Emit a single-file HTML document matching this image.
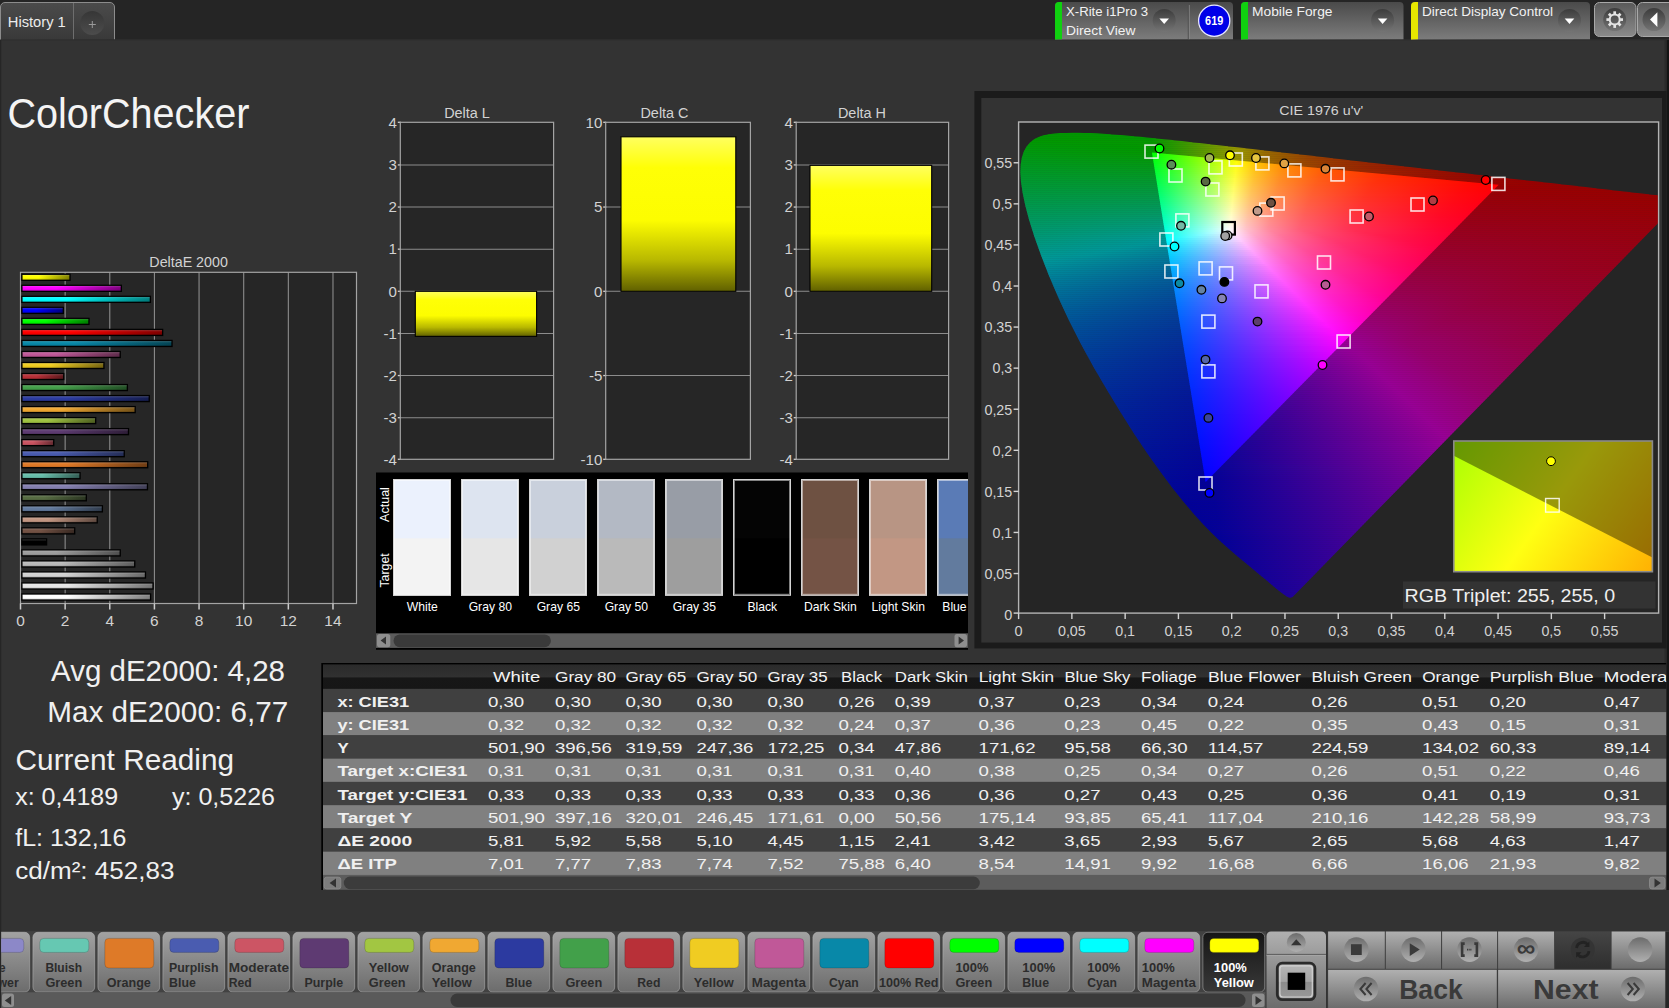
<!DOCTYPE html>
<html lang="en"><head><meta charset="utf-8"><title>ColorChecker</title>
<style>html,body{margin:0;padding:0;background:#333;overflow:hidden}svg{display:block;font-family:"Liberation Sans",sans-serif}text{white-space:pre}</style>
</head><body>
<svg width="1669" height="1008" viewBox="0 0 1669 1008">
<defs>
<linearGradient id="gTab" x1="0" y1="0" x2="0" y2="1"><stop offset="0" stop-color="#4b4b4b"/><stop offset="1" stop-color="#393939"/></linearGradient>
<linearGradient id="gDev" x1="0" y1="0" x2="0" y2="1"><stop offset="0" stop-color="#4a4a4a"/><stop offset="1" stop-color="#7c7c7c"/></linearGradient>
<linearGradient id="gCirc" x1="0" y1="0" x2="0" y2="1"><stop offset="0" stop-color="#3c3c3c"/><stop offset="1" stop-color="#747474"/></linearGradient>
<linearGradient id="gPlus" x1="0" y1="0" x2="0" y2="1"><stop offset="0" stop-color="#363636"/><stop offset="1" stop-color="#4c4c4c"/></linearGradient>
<linearGradient id="gBtn" x1="0" y1="0" x2="0" y2="1"><stop offset="0" stop-color="#5a5a5a"/><stop offset="1" stop-color="#8a8a8a"/></linearGradient>
<linearGradient id="gGl" x1="0" y1="0" x2="0" y2="1"><stop offset="0" stop-color="#fff" stop-opacity=".18"/><stop offset=".4" stop-color="#fff" stop-opacity="0"/><stop offset=".6" stop-color="#000" stop-opacity="0"/><stop offset="1" stop-color="#000" stop-opacity=".15"/></linearGradient>
<linearGradient id="gb0"><stop offset="0" stop-color="#ffff00"/><stop offset=".35" stop-color="#ffff00"/><stop offset="1" stop-color="#7f7f00"/></linearGradient>
<linearGradient id="gb1"><stop offset="0" stop-color="#ff00ff"/><stop offset=".35" stop-color="#ff00ff"/><stop offset="1" stop-color="#7f007f"/></linearGradient>
<linearGradient id="gb2"><stop offset="0" stop-color="#00ffff"/><stop offset=".35" stop-color="#00ffff"/><stop offset="1" stop-color="#007f7f"/></linearGradient>
<linearGradient id="gb3"><stop offset="0" stop-color="#0000ff"/><stop offset=".35" stop-color="#0000ff"/><stop offset="1" stop-color="#00007f"/></linearGradient>
<linearGradient id="gb4"><stop offset="0" stop-color="#00ff00"/><stop offset=".35" stop-color="#00ff00"/><stop offset="1" stop-color="#007f00"/></linearGradient>
<linearGradient id="gb5"><stop offset="0" stop-color="#ff0000"/><stop offset=".35" stop-color="#ff0000"/><stop offset="1" stop-color="#7f0000"/></linearGradient>
<linearGradient id="gb6"><stop offset="0" stop-color="#0888a8"/><stop offset=".35" stop-color="#0888a8"/><stop offset="1" stop-color="#044454"/></linearGradient>
<linearGradient id="gb7"><stop offset="0" stop-color="#c05898"/><stop offset=".35" stop-color="#c05898"/><stop offset="1" stop-color="#602c4c"/></linearGradient>
<linearGradient id="gb8"><stop offset="0" stop-color="#f0cc20"/><stop offset=".35" stop-color="#f0cc20"/><stop offset="1" stop-color="#786610"/></linearGradient>
<linearGradient id="gb9"><stop offset="0" stop-color="#b83038"/><stop offset=".35" stop-color="#b83038"/><stop offset="1" stop-color="#5c181c"/></linearGradient>
<linearGradient id="gb10"><stop offset="0" stop-color="#44a04a"/><stop offset=".35" stop-color="#44a04a"/><stop offset="1" stop-color="#225025"/></linearGradient>
<linearGradient id="gb11"><stop offset="0" stop-color="#2c3ca0"/><stop offset=".35" stop-color="#2c3ca0"/><stop offset="1" stop-color="#161e50"/></linearGradient>
<linearGradient id="gb12"><stop offset="0" stop-color="#f0a832"/><stop offset=".35" stop-color="#f0a832"/><stop offset="1" stop-color="#785419"/></linearGradient>
<linearGradient id="gb13"><stop offset="0" stop-color="#a0c442"/><stop offset=".35" stop-color="#a0c442"/><stop offset="1" stop-color="#506221"/></linearGradient>
<linearGradient id="gb14"><stop offset="0" stop-color="#5e3c72"/><stop offset=".35" stop-color="#5e3c72"/><stop offset="1" stop-color="#2f1e39"/></linearGradient>
<linearGradient id="gb15"><stop offset="0" stop-color="#cc5562"/><stop offset=".35" stop-color="#cc5562"/><stop offset="1" stop-color="#662a31"/></linearGradient>
<linearGradient id="gb16"><stop offset="0" stop-color="#4a5cb0"/><stop offset=".35" stop-color="#4a5cb0"/><stop offset="1" stop-color="#252e58"/></linearGradient>
<linearGradient id="gb17"><stop offset="0" stop-color="#e07a28"/><stop offset=".35" stop-color="#e07a28"/><stop offset="1" stop-color="#703d14"/></linearGradient>
<linearGradient id="gb18"><stop offset="0" stop-color="#67bdaa"/><stop offset=".35" stop-color="#67bdaa"/><stop offset="1" stop-color="#335e55"/></linearGradient>
<linearGradient id="gb19"><stop offset="0" stop-color="#8580b1"/><stop offset=".35" stop-color="#8580b1"/><stop offset="1" stop-color="#424058"/></linearGradient>
<linearGradient id="gb20"><stop offset="0" stop-color="#576c43"/><stop offset=".35" stop-color="#576c43"/><stop offset="1" stop-color="#2b3621"/></linearGradient>
<linearGradient id="gb21"><stop offset="0" stop-color="#627a9d"/><stop offset=".35" stop-color="#627a9d"/><stop offset="1" stop-color="#313d4e"/></linearGradient>
<linearGradient id="gb22"><stop offset="0" stop-color="#c29682"/><stop offset=".35" stop-color="#c29682"/><stop offset="1" stop-color="#614b41"/></linearGradient>
<linearGradient id="gb23"><stop offset="0" stop-color="#735244"/><stop offset=".35" stop-color="#735244"/><stop offset="1" stop-color="#392922"/></linearGradient>
<linearGradient id="gb24"><stop offset="0" stop-color="#000000"/><stop offset=".35" stop-color="#000000"/><stop offset="1" stop-color="#000000"/></linearGradient>
<linearGradient id="gb25"><stop offset="0" stop-color="#9e9e9e"/><stop offset=".35" stop-color="#9e9e9e"/><stop offset="1" stop-color="#4f4f4f"/></linearGradient>
<linearGradient id="gb26"><stop offset="0" stop-color="#bababa"/><stop offset=".35" stop-color="#bababa"/><stop offset="1" stop-color="#5d5d5d"/></linearGradient>
<linearGradient id="gb27"><stop offset="0" stop-color="#d2d2d2"/><stop offset=".35" stop-color="#d2d2d2"/><stop offset="1" stop-color="#696969"/></linearGradient>
<linearGradient id="gb28"><stop offset="0" stop-color="#e6e6e6"/><stop offset=".35" stop-color="#e6e6e6"/><stop offset="1" stop-color="#737373"/></linearGradient>
<linearGradient id="gb29"><stop offset="0" stop-color="#ffffff"/><stop offset=".35" stop-color="#ffffff"/><stop offset="1" stop-color="#7f7f7f"/></linearGradient>
<linearGradient id="gY" x1="0" y1="0" x2="0" y2="1"><stop offset="0" stop-color="#ffff60"/><stop offset=".2" stop-color="#ffff06"/><stop offset=".54" stop-color="#fdfd00"/><stop offset=".8" stop-color="#b8b800"/><stop offset="1" stop-color="#606000"/></linearGradient>
<clipPath id="cSw"><rect x="376" y="472.5" width="592" height="177.3"/></clipPath>
<clipPath id="cPlot"><rect x="1019.3" y="122.7" width="638.6" height="489.7"/></clipPath>
<clipPath id="cLoc" clip-path="url(#cPlot)"><path d="M1292.33 597.18L1292.25 597.16L1292.17 597.13L1292.08 597.18L1291.98 597.28L1291.84 597.31L1291.64 597.26L1291.46 597.25L1291.36 597.37L1291.27 597.53L1291.16 597.63L1291.01 597.68L1290.77 597.69L1290.47 597.68L1290.12 597.63L1289.81 597.63L1289.5 597.64L1289.11 597.6L1288.69 597.49L1288.17 597.27L1287.39 596.84L1286.38 596.24L1285.25 595.49L1283.97 594.57L1282.53 593.47L1280.86 592.18L1278.91 590.66L1276.72 588.92L1274.33 586.92L1271.69 584.66L1268.79 582.2L1265.61 579.54L1262.08 576.63L1258.13 573.38L1253.75 569.78L1248.96 565.84L1243.8 561.61L1238.25 557L1232.21 551.86L1225.66 546.09L1218.67 539.66L1211.24 532.51L1203.17 524.24L1194.07 514.19L1183.7 501.94L1172.29 487.65L1160.22 471.61L1147.53 453.76L1134.28 434.01L1120.71 412.6L1107.05 390.06L1093.53 366.88L1080.53 343.32L1068.61 319.86L1058.09 297.09L1048.87 275.38L1040.9 255.06L1034.3 236.53L1029.11 220.01L1025.26 205.5L1022.58 192.81L1020.97 181.85L1020.36 172.48L1020.68 164.4L1021.84 157.41L1023.83 151.47L1026.59 146.49L1030.02 142.45L1034.05 139.32L1038.58 136.98L1043.51 135.32L1048.77 134.23L1054.34 133.54L1060.15 133.12L1066.15 132.9L1072.2 132.81L1078.23 132.82L1084.3 132.91L1090.48 133.1L1096.78 133.37L1103.24 133.73L1109.9 134.16L1116.78 134.67L1123.88 135.26L1131.24 135.91L1138.87 136.62L1146.8 137.4L1155.05 138.23L1163.64 139.13L1172.58 140.08L1181.89 141.09L1191.59 142.15L1201.69 143.27L1212.21 144.45L1223.15 145.68L1234.54 146.97L1246.37 148.31L1258.66 149.71L1271.39 151.17L1284.56 152.68L1298.16 154.24L1312.17 155.84L1326.58 157.48L1341.34 159.17L1356.41 160.89L1371.76 162.64L1387.34 164.42L1402.98 166.22L1418.39 167.98L1433.48 169.71L1448.44 171.42L1463.35 173.12L1478 174.8L1492.07 176.4L1505.48 177.92L1518.29 179.38L1530.52 180.78L1542.1 182.1L1552.99 183.35L1563.18 184.52L1572.67 185.6L1581.5 186.61L1589.74 187.55L1597.41 188.42L1604.55 189.24L1611.28 190.01L1617.68 190.74L1623.72 191.43L1629.37 192.08L1634.64 192.68L1639.53 193.24L1644.06 193.76L1648.21 194.24L1651.92 194.66L1655.18 195.03L1658.11 195.37L1660.8 195.67L1663.25 195.96L1665.44 196.21L1667.4 196.43L1669.09 196.63L1670.51 196.79L1671.69 196.92L1672.77 197.05L1673.82 197.17L1674.79 197.28L1675.65 197.38L1676.45 197.47L1677.24 197.56L1678.04 197.65L1678.83 197.74L1679.59 197.83L1680.31 197.91L1680.9 197.98L1681.31 198.03L1681.61 198.06L1681.88 198.09L1682.1 198.12L1682.28 198.14L1682.43 198.16L1682.47 198.16L1682.47 198.16Z"/></clipPath>
<clipPath id="cTri"><path d="M1498.67 184.8L1151.96 152.56L1205.61 482.02Z"/></clipPath>
<linearGradient id="c0" gradientUnits="userSpaceOnUse" x1="1047.6" x2="1110.85"><stop offset="0" stop-color="#009900"/><stop offset=".996" stop-color="#009900"/></linearGradient>
<linearGradient id="c1" gradientUnits="userSpaceOnUse" x1="1039.85" x2="1133.85"><stop offset="0" stop-color="#009900"/><stop offset="1" stop-color="#009900"/></linearGradient>
<linearGradient id="c2" gradientUnits="userSpaceOnUse" x1="1035.1" x2="1155.85"><stop offset="0" stop-color="#009900"/><stop offset=".9565" stop-color="#029900"/><stop offset=".9979" stop-color="#0b9900"/></linearGradient>
<linearGradient id="c3" gradientUnits="userSpaceOnUse" x1="1031.85" x2="1173.35"><stop offset="0" stop-color="#009900"/><stop offset=".841" stop-color="#029900"/><stop offset="1" stop-color="#279900"/></linearGradient>
<linearGradient id="c4" gradientUnits="userSpaceOnUse" x1="1029.1" x2="1192.35"><stop offset="0" stop-color="#009900"/><stop offset=".7504" stop-color="#039900"/><stop offset=".9985" stop-color="#459900"/></linearGradient>
<linearGradient id="c5" gradientUnits="userSpaceOnUse" x1="1027.35" x2="1210.35"><stop offset="0" stop-color="#009903"/><stop offset=".6803" stop-color="#039900"/><stop offset="1" stop-color="#659900"/></linearGradient>
<linearGradient id="c6" gradientUnits="userSpaceOnUse" x1="1025.6" x2="1227.85"><stop offset="0" stop-color="#009906"/><stop offset=".4771" stop-color="#009900"/><stop offset=".6255" stop-color="#039900"/><stop offset=".9889" stop-color="#819900"/><stop offset=".9988" stop-color="#859900"/></linearGradient>
<linearGradient id="c7" gradientUnits="userSpaceOnUse" x1="1024.6" x2="1245.35"><stop offset="0" stop-color="#009908"/><stop offset=".4938" stop-color="#009900"/><stop offset=".5798" stop-color="#039900"/><stop offset=".9083" stop-color="#819900"/><stop offset=".9694" stop-color="#999600"/><stop offset=".9989" stop-color="#998a00"/></linearGradient>
<linearGradient id="c8" gradientUnits="userSpaceOnUse" x1="1023.35" x2="1263.85"><stop offset="0" stop-color="#00990b"/><stop offset=".5322" stop-color="#009900"/><stop offset=".842" stop-color="#829900"/><stop offset=".894" stop-color="#999600"/><stop offset="1" stop-color="#996e00"/></linearGradient>
<linearGradient id="c9" gradientUnits="userSpaceOnUse" x1="1022.35" x2="1281.1"><stop offset="0" stop-color="#00990d"/><stop offset=".5043" stop-color="#029900"/><stop offset=".7845" stop-color="#819900"/><stop offset=".8348" stop-color="#999600"/><stop offset=".9449" stop-color="#996900"/><stop offset=".999" stop-color="#995a00"/></linearGradient>
<linearGradient id="c10" gradientUnits="userSpaceOnUse" x1="1021.6" x2="1299.1"><stop offset="0" stop-color="#009910"/><stop offset=".4739" stop-color="#029901"/><stop offset=".7333" stop-color="#819900"/><stop offset=".7802" stop-color="#999600"/><stop offset=".8829" stop-color="#996900"/><stop offset="1" stop-color="#994a00"/></linearGradient>
<linearGradient id="c11" gradientUnits="userSpaceOnUse" x1="1021.1" x2="1315.35"><stop offset="0" stop-color="#009912"/><stop offset=".4503" stop-color="#039905"/><stop offset=".6933" stop-color="#819900"/><stop offset=".7375" stop-color="#999600"/><stop offset=".8326" stop-color="#996900"/><stop offset=".9822" stop-color="#994200"/><stop offset=".9992" stop-color="#993f00"/></linearGradient>
<linearGradient id="c12" gradientUnits="userSpaceOnUse" x1="1020.6" x2="1332.85"><stop offset="0" stop-color="#009914"/><stop offset=".4275" stop-color="#039908"/><stop offset=".6533" stop-color="#819900"/><stop offset=".695" stop-color="#999600"/><stop offset=".7846" stop-color="#996a00"/><stop offset=".9239" stop-color="#994300"/><stop offset=".9992" stop-color="#993500"/></linearGradient>
<linearGradient id="c13" gradientUnits="userSpaceOnUse" x1="1020.1" x2="1349.6"><stop offset="0" stop-color="#009917"/><stop offset=".4067" stop-color="#02990b"/><stop offset=".6297" stop-color="#879900"/><stop offset=".6601" stop-color="#999600"/><stop offset=".7451" stop-color="#996900"/><stop offset=".8771" stop-color="#994200"/><stop offset="1" stop-color="#992c00"/></linearGradient>
<linearGradient id="c14" gradientUnits="userSpaceOnUse" x1="1019.85" x2="1367.35"><stop offset="0" stop-color="#009919"/><stop offset=".3871" stop-color="#02990e"/><stop offset=".6245" stop-color="#999702"/><stop offset=".7036" stop-color="#996a00"/><stop offset=".8273" stop-color="#994300"/><stop offset="1" stop-color="#992500"/></linearGradient>
<linearGradient id="c15" gradientUnits="userSpaceOnUse" x1="1019.6" x2="1385.6"><stop offset="0" stop-color="#00991b"/><stop offset=".3702" stop-color="#039912"/><stop offset=".6434" stop-color="#997602"/><stop offset=".7459" stop-color="#994d00"/><stop offset=".9139" stop-color="#992a00"/><stop offset="1" stop-color="#991e00"/></linearGradient>
<linearGradient id="c16" gradientUnits="userSpaceOnUse" x1="1019.6" x2="1403.85"><stop offset="0" stop-color="#00991d"/><stop offset=".3526" stop-color="#029915"/><stop offset=".6688" stop-color="#995c02"/><stop offset=".8003" stop-color="#993600"/><stop offset=".9993" stop-color="#991800"/></linearGradient>
<linearGradient id="c17" gradientUnits="userSpaceOnUse" x1="1019.35" x2="1421.1"><stop offset="0" stop-color="#009920"/><stop offset=".3385" stop-color="#029918"/><stop offset=".6945" stop-color="#994802"/><stop offset=".8575" stop-color="#992500"/><stop offset=".9994" stop-color="#991300"/></linearGradient>
<linearGradient id="c18" gradientUnits="userSpaceOnUse" x1="1019.35" x2="1438.1"><stop offset="0" stop-color="#009922"/><stop offset=".326" stop-color="#03991b"/><stop offset=".7188" stop-color="#993901"/><stop offset=".9158" stop-color="#991800"/><stop offset=".9994" stop-color="#990f00"/></linearGradient>
<linearGradient id="c19" gradientUnits="userSpaceOnUse" x1="1019.35" x2="1454.85"><stop offset="0" stop-color="#009924"/><stop offset=".3146" stop-color="#03991e"/><stop offset=".7417" stop-color="#992d01"/><stop offset=".9759" stop-color="#990d00"/><stop offset="1" stop-color="#990b00"/></linearGradient>
<linearGradient id="c20" gradientUnits="userSpaceOnUse" x1="1019.35" x2="1473.35"><stop offset="0" stop-color="#009926"/><stop offset=".3018" stop-color="#029921"/><stop offset=".7599" stop-color="#992401"/><stop offset="1" stop-color="#990700"/></linearGradient>
<linearGradient id="c21" gradientUnits="userSpaceOnUse" x1="1019.35" x2="1490.6"><stop offset="0" stop-color="#009929"/><stop offset=".2918" stop-color="#039924"/><stop offset=".7788" stop-color="#991c01"/><stop offset=".9995" stop-color="#990300"/></linearGradient>
<linearGradient id="c22" gradientUnits="userSpaceOnUse" x1="1019.35" x2="1508.6"><stop offset="0" stop-color="#00992b"/><stop offset=".281" stop-color="#029927"/><stop offset=".7941" stop-color="#991501"/><stop offset=".9995" stop-color="#990000"/></linearGradient>
<linearGradient id="c23" gradientUnits="userSpaceOnUse" x1="1019.6" x2="1525.35"><stop offset="0" stop-color="#00992d"/><stop offset=".2729" stop-color="#03992b"/><stop offset=".8117" stop-color="#990f01"/><stop offset=".9946" stop-color="#990000"/><stop offset=".9995" stop-color="#990000"/></linearGradient>
<linearGradient id="c24" gradientUnits="userSpaceOnUse" x1="1019.6" x2="1542.85"><stop offset="0" stop-color="#00992f"/><stop offset=".2637" stop-color="#02992e"/><stop offset=".8266" stop-color="#990a01"/><stop offset=".9642" stop-color="#990000"/><stop offset=".9995" stop-color="#990000"/></linearGradient>
<linearGradient id="c25" gradientUnits="userSpaceOnUse" x1="1019.85" x2="1560.85"><stop offset="0" stop-color="#009932"/><stop offset=".2551" stop-color="#029931"/><stop offset=".8392" stop-color="#990501"/><stop offset=".9556" stop-color="#990000"/><stop offset="1" stop-color="#990000"/></linearGradient>
<linearGradient id="c26" gradientUnits="userSpaceOnUse" x1="1020.1" x2="1578.1"><stop offset="0" stop-color="#009934"/><stop offset=".2482" stop-color="#039934"/><stop offset=".8522" stop-color="#990101"/><stop offset="1" stop-color="#990000"/></linearGradient>
<linearGradient id="c27" gradientUnits="userSpaceOnUse" x1="1020.6" x2="1596.35"><stop offset="0" stop-color="#009936"/><stop offset=".2397" stop-color="#029937"/><stop offset=".8346" stop-color="#990001"/><stop offset=".9996" stop-color="#990000"/></linearGradient>
<linearGradient id="c28" gradientUnits="userSpaceOnUse" x1="1020.85" x2="1612.1"><stop offset="0" stop-color="#009939"/><stop offset=".2334" stop-color="#02993b"/><stop offset=".8085" stop-color="#990003"/><stop offset=".9996" stop-color="#990000"/></linearGradient>
<linearGradient id="c29" gradientUnits="userSpaceOnUse" x1="1021.1" x2="1630.35"><stop offset="0" stop-color="#00993b"/><stop offset=".2265" stop-color="#02993e"/><stop offset=".7813" stop-color="#990004"/><stop offset=".9996" stop-color="#990000"/></linearGradient>
<linearGradient id="c30" gradientUnits="userSpaceOnUse" x1="1021.35" x2="1649.1"><stop offset="0" stop-color="#00993d"/><stop offset=".2206" stop-color="#039941"/><stop offset=".7551" stop-color="#990005"/><stop offset=".9996" stop-color="#990000"/></linearGradient>
<linearGradient id="c31" gradientUnits="userSpaceOnUse" x1="1021.6" x2="1658.6"><stop offset="0" stop-color="#009940"/><stop offset=".2174" stop-color="#039945"/><stop offset=".7402" stop-color="#990006"/><stop offset="1" stop-color="#990000"/></linearGradient>
<linearGradient id="c32" gradientUnits="userSpaceOnUse" x1="1022.1" x2="1658.6"><stop offset="0" stop-color="#009942"/><stop offset=".2168" stop-color="#029948"/><stop offset=".7368" stop-color="#990008"/><stop offset="1" stop-color="#990000"/></linearGradient>
<linearGradient id="c33" gradientUnits="userSpaceOnUse" x1="1022.6" x2="1658.6"><stop offset="0" stop-color="#009944"/><stop offset=".217" stop-color="#03994b"/><stop offset=".7335" stop-color="#990009"/><stop offset="1" stop-color="#990000"/></linearGradient>
<linearGradient id="c34" gradientUnits="userSpaceOnUse" x1="1022.85" x2="1658.6"><stop offset="0" stop-color="#009947"/><stop offset=".2171" stop-color="#02994f"/><stop offset=".7306" stop-color="#99000a"/><stop offset=".9996" stop-color="#990001"/></linearGradient>
<linearGradient id="c35" gradientUnits="userSpaceOnUse" x1="1023.35" x2="1658.6"><stop offset="0" stop-color="#009949"/><stop offset=".2172" stop-color="#039952"/><stop offset=".7265" stop-color="#99000b"/><stop offset=".9996" stop-color="#990002"/></linearGradient>
<linearGradient id="c36" gradientUnits="userSpaceOnUse" x1="1023.85" x2="1658.6"><stop offset="0" stop-color="#00994c"/><stop offset=".2166" stop-color="#029956"/><stop offset=".7231" stop-color="#99000d"/><stop offset=".9996" stop-color="#990002"/></linearGradient>
<linearGradient id="c37" gradientUnits="userSpaceOnUse" x1="1024.35" x2="1658.6"><stop offset="0" stop-color="#00994e"/><stop offset=".2168" stop-color="#029959"/><stop offset=".7197" stop-color="#99000e"/><stop offset=".9996" stop-color="#990003"/></linearGradient>
<linearGradient id="c38" gradientUnits="userSpaceOnUse" x1="1024.85" x2="1658.6"><stop offset="0" stop-color="#009951"/><stop offset=".217" stop-color="#03995d"/><stop offset=".7164" stop-color="#99000f"/><stop offset=".9996" stop-color="#990004"/></linearGradient>
<linearGradient id="c39" gradientUnits="userSpaceOnUse" x1="1025.35" x2="1658.6"><stop offset="0" stop-color="#009953"/><stop offset=".2163" stop-color="#029961"/><stop offset=".713" stop-color="#990010"/><stop offset=".9996" stop-color="#990005"/></linearGradient>
<linearGradient id="c40" gradientUnits="userSpaceOnUse" x1="1025.85" x2="1658.6"><stop offset="0" stop-color="#009956"/><stop offset=".2165" stop-color="#039964"/><stop offset=".7096" stop-color="#990011"/><stop offset=".9996" stop-color="#990005"/></linearGradient>
<linearGradient id="c41" gradientUnits="userSpaceOnUse" x1="1026.35" x2="1658.6"><stop offset="0" stop-color="#009958"/><stop offset=".2167" stop-color="#039968"/><stop offset=".7062" stop-color="#990013"/><stop offset=".9996" stop-color="#990006"/></linearGradient>
<linearGradient id="c42" gradientUnits="userSpaceOnUse" x1="1027.1" x2="1658.6"><stop offset="0" stop-color="#00995b"/><stop offset=".2162" stop-color="#03996c"/><stop offset=".7031" stop-color="#990014"/><stop offset="1" stop-color="#990007"/></linearGradient>
<linearGradient id="c43" gradientUnits="userSpaceOnUse" x1="1027.6" x2="1658.6"><stop offset="0" stop-color="#00995d"/><stop offset=".2155" stop-color="#029970"/><stop offset=".6997" stop-color="#990015"/><stop offset="1" stop-color="#990008"/></linearGradient>
<linearGradient id="c44" gradientUnits="userSpaceOnUse" x1="1028.1" x2="1658.6"><stop offset="0" stop-color="#009960"/><stop offset=".2157" stop-color="#039974"/><stop offset=".6963" stop-color="#990016"/><stop offset="1" stop-color="#990008"/></linearGradient>
<linearGradient id="c45" gradientUnits="userSpaceOnUse" x1="1028.85" x2="1658.6"><stop offset="0" stop-color="#009963"/><stop offset=".2152" stop-color="#029977"/><stop offset=".6915" stop-color="#990018"/><stop offset=".9996" stop-color="#990009"/></linearGradient>
<linearGradient id="c46" gradientUnits="userSpaceOnUse" x1="1029.35" x2="1657.6"><stop offset="0" stop-color="#009965"/><stop offset=".2157" stop-color="#03997b"/><stop offset=".6892" stop-color="#990019"/><stop offset=".9996" stop-color="#99000a"/></linearGradient>
<linearGradient id="c47" gradientUnits="userSpaceOnUse" x1="1029.85" x2="1655.6"><stop offset="0" stop-color="#009968"/><stop offset=".2157" stop-color="#02997f"/><stop offset=".688" stop-color="#99001b"/><stop offset=".9996" stop-color="#99000b"/></linearGradient>
<linearGradient id="c48" gradientUnits="userSpaceOnUse" x1="1030.35" x2="1653.85"><stop offset="0" stop-color="#00996b"/><stop offset=".2165" stop-color="#029983"/><stop offset=".6864" stop-color="#99001c"/><stop offset="1" stop-color="#99000b"/></linearGradient>
<linearGradient id="c49" gradientUnits="userSpaceOnUse" x1="1031.1" x2="1651.85"><stop offset="0" stop-color="#00996d"/><stop offset=".2167" stop-color="#029987"/><stop offset=".6855" stop-color="#99001d"/><stop offset=".9996" stop-color="#99000c"/></linearGradient>
<linearGradient id="c50" gradientUnits="userSpaceOnUse" x1="1031.85" x2="1649.85"><stop offset="0" stop-color="#009970"/><stop offset=".2168" stop-color="#02998c"/><stop offset=".6837" stop-color="#99001f"/><stop offset="1" stop-color="#99000d"/></linearGradient>
<linearGradient id="c51" gradientUnits="userSpaceOnUse" x1="1032.35" x2="1647.85"><stop offset="0" stop-color="#009973"/><stop offset=".2177" stop-color="#039990"/><stop offset=".6832" stop-color="#990020"/><stop offset="1" stop-color="#99000e"/></linearGradient>
<linearGradient id="c52" gradientUnits="userSpaceOnUse" x1="1033.1" x2="1645.85"><stop offset="0" stop-color="#009976"/><stop offset=".2179" stop-color="#029994"/><stop offset=".6814" stop-color="#990021"/><stop offset=".9996" stop-color="#99000f"/></linearGradient>
<linearGradient id="c53" gradientUnits="userSpaceOnUse" x1="1033.85" x2="1644.1"><stop offset="0" stop-color="#009979"/><stop offset=".2179" stop-color="#029998"/><stop offset=".68" stop-color="#990023"/><stop offset=".9996" stop-color="#99000f"/></linearGradient>
<linearGradient id="c54" gradientUnits="userSpaceOnUse" x1="1034.35" x2="1642.1"><stop offset="0" stop-color="#00997c"/><stop offset=".2164" stop-color="#009699"/><stop offset=".6787" stop-color="#990024"/><stop offset=".9996" stop-color="#990010"/></linearGradient>
<linearGradient id="c55" gradientUnits="userSpaceOnUse" x1="1035.1" x2="1640.1"><stop offset="0" stop-color="#00997f"/><stop offset=".1967" stop-color="#009699"/><stop offset=".219" stop-color="#029199"/><stop offset=".6769" stop-color="#990026"/><stop offset="1" stop-color="#990011"/></linearGradient>
<linearGradient id="c56" gradientUnits="userSpaceOnUse" x1="1035.85" x2="1638.1"><stop offset="0" stop-color="#009982"/><stop offset=".1768" stop-color="#009699"/><stop offset=".2192" stop-color="#028d99"/><stop offset=".675" stop-color="#990027"/><stop offset=".9996" stop-color="#990012"/></linearGradient>
<linearGradient id="c57" gradientUnits="userSpaceOnUse" x1="1036.6" x2="1636.1"><stop offset="0" stop-color="#009985"/><stop offset=".1576" stop-color="#009699"/><stop offset=".2202" stop-color="#038999"/><stop offset=".6731" stop-color="#990029"/><stop offset="1" stop-color="#990013"/></linearGradient>
<linearGradient id="c58" gradientUnits="userSpaceOnUse" x1="1037.35" x2="1634.1"><stop offset="0" stop-color="#009988"/><stop offset=".1382" stop-color="#009699"/><stop offset=".2204" stop-color="#038699"/><stop offset=".672" stop-color="#99002a"/><stop offset=".9996" stop-color="#990014"/></linearGradient>
<linearGradient id="c59" gradientUnits="userSpaceOnUse" x1="1038.1" x2="1632.35"><stop offset="0" stop-color="#00998b"/><stop offset=".1186" stop-color="#009599"/><stop offset=".2204" stop-color="#038299"/><stop offset=".6698" stop-color="#99002c"/><stop offset=".9996" stop-color="#990014"/></linearGradient>
<linearGradient id="c60" gradientUnits="userSpaceOnUse" x1="1038.85" x2="1630.35"><stop offset="0" stop-color="#00998e"/><stop offset=".0989" stop-color="#009599"/><stop offset=".2206" stop-color="#027f99"/><stop offset=".6686" stop-color="#99002d"/><stop offset=".9932" stop-color="#990016"/><stop offset="1" stop-color="#990015"/></linearGradient>
<linearGradient id="c61" gradientUnits="userSpaceOnUse" x1="1039.6" x2="1628.35"><stop offset="0" stop-color="#009991"/><stop offset=".0824" stop-color="#009599"/><stop offset=".2208" stop-color="#027c99"/><stop offset=".6667" stop-color="#99002f"/><stop offset=".9834" stop-color="#990017"/><stop offset=".9996" stop-color="#990016"/></linearGradient>
<linearGradient id="c62" gradientUnits="userSpaceOnUse" x1="1040.35" x2="1626.35"><stop offset="0" stop-color="#009994"/><stop offset=".0776" stop-color="#009299"/><stop offset=".221" stop-color="#027999"/><stop offset=".6655" stop-color="#990030"/><stop offset=".9761" stop-color="#990018"/><stop offset="1" stop-color="#990017"/></linearGradient>
<linearGradient id="c63" gradientUnits="userSpaceOnUse" x1="1041.1" x2="1624.35"><stop offset="0" stop-color="#009997"/><stop offset=".222" stop-color="#037599"/><stop offset=".6644" stop-color="#990032"/><stop offset=".9687" stop-color="#990019"/><stop offset=".9996" stop-color="#990018"/></linearGradient>
<linearGradient id="c64" gradientUnits="userSpaceOnUse" x1="1041.85" x2="1622.35"><stop offset="0" stop-color="#009799"/><stop offset=".2222" stop-color="#037399"/><stop offset=".6624" stop-color="#990034"/><stop offset=".9595" stop-color="#99001b"/><stop offset="1" stop-color="#990019"/></linearGradient>
<linearGradient id="c65" gradientUnits="userSpaceOnUse" x1="1042.6" x2="1620.6"><stop offset="0" stop-color="#009499"/><stop offset=".2223" stop-color="#027099"/><stop offset=".6609" stop-color="#990035"/><stop offset=".9516" stop-color="#99001c"/><stop offset="1" stop-color="#99001a"/></linearGradient>
<linearGradient id="c66" gradientUnits="userSpaceOnUse" x1="1043.35" x2="1618.6"><stop offset="0" stop-color="#009199"/><stop offset=".2225" stop-color="#026d99"/><stop offset=".658" stop-color="#990037"/><stop offset=".9413" stop-color="#99001e"/><stop offset=".9996" stop-color="#99001a"/></linearGradient>
<linearGradient id="c67" gradientUnits="userSpaceOnUse" x1="1044.1" x2="1616.6"><stop offset="0" stop-color="#008e99"/><stop offset=".2227" stop-color="#026a99"/><stop offset=".6568" stop-color="#990039"/><stop offset=".9345" stop-color="#99001f"/><stop offset="1" stop-color="#99001b"/></linearGradient>
<linearGradient id="c68" gradientUnits="userSpaceOnUse" x1="1044.85" x2="1614.6"><stop offset="0" stop-color="#008b99"/><stop offset=".2238" stop-color="#036899"/><stop offset=".6547" stop-color="#99003b"/><stop offset=".9258" stop-color="#990020"/><stop offset=".9996" stop-color="#99001c"/></linearGradient>
<linearGradient id="c69" gradientUnits="userSpaceOnUse" x1="1045.85" x2="1612.6"><stop offset="0" stop-color="#008899"/><stop offset=".2232" stop-color="#026599"/><stop offset=".6528" stop-color="#99003d"/><stop offset=".9184" stop-color="#990022"/><stop offset=".9996" stop-color="#99001d"/></linearGradient>
<linearGradient id="c70" gradientUnits="userSpaceOnUse" x1="1046.6" x2="1610.85"><stop offset="0" stop-color="#008699"/><stop offset=".2242" stop-color="#036399"/><stop offset=".6513" stop-color="#99003e"/><stop offset=".9109" stop-color="#990023"/><stop offset=".9996" stop-color="#99001e"/></linearGradient>
<linearGradient id="c71" gradientUnits="userSpaceOnUse" x1="1047.35" x2="1608.85"><stop offset="0" stop-color="#008399"/><stop offset=".2244" stop-color="#036199"/><stop offset=".6492" stop-color="#990040"/><stop offset=".9029" stop-color="#990025"/><stop offset="1" stop-color="#99001f"/></linearGradient>
<linearGradient id="c72" gradientUnits="userSpaceOnUse" x1="1048.35" x2="1606.85"><stop offset="0" stop-color="#008099"/><stop offset=".2238" stop-color="#025e99"/><stop offset=".6473" stop-color="#990042"/><stop offset=".8962" stop-color="#990026"/><stop offset="1" stop-color="#990020"/></linearGradient>
<linearGradient id="c73" gradientUnits="userSpaceOnUse" x1="1049.1" x2="1604.85"><stop offset="0" stop-color="#007e99"/><stop offset=".2249" stop-color="#035c99"/><stop offset=".646" stop-color="#990044"/><stop offset=".8898" stop-color="#990028"/><stop offset=".9996" stop-color="#990021"/></linearGradient>
<linearGradient id="c74" gradientUnits="userSpaceOnUse" x1="1049.85" x2="1602.85"><stop offset="0" stop-color="#007b99"/><stop offset=".2251" stop-color="#035a99"/><stop offset=".6447" stop-color="#990046"/><stop offset=".8843" stop-color="#990029"/><stop offset="1" stop-color="#990022"/></linearGradient>
<linearGradient id="c75" gradientUnits="userSpaceOnUse" x1="1050.6" x2="1600.85"><stop offset="0" stop-color="#007999"/><stop offset=".2254" stop-color="#035899"/><stop offset=".6424" stop-color="#990048"/><stop offset=".8769" stop-color="#99002b"/><stop offset=".9995" stop-color="#990023"/></linearGradient>
<linearGradient id="c76" gradientUnits="userSpaceOnUse" x1="1051.35" x2="1599.1"><stop offset="0" stop-color="#007799"/><stop offset=".2255" stop-color="#025699"/><stop offset=".6408" stop-color="#99004a"/><stop offset=".8708" stop-color="#99002d"/><stop offset=".9995" stop-color="#990024"/></linearGradient>
<linearGradient id="c77" gradientUnits="userSpaceOnUse" x1="1052.1" x2="1597.1"><stop offset="0" stop-color="#007499"/><stop offset=".2257" stop-color="#025499"/><stop offset=".6376" stop-color="#99004c"/><stop offset=".8615" stop-color="#99002f"/><stop offset="1" stop-color="#990024"/></linearGradient>
<linearGradient id="c78" gradientUnits="userSpaceOnUse" x1="1053.1" x2="1595.1"><stop offset="0" stop-color="#007299"/><stop offset=".226" stop-color="#025299"/><stop offset=".6356" stop-color="#99004e"/><stop offset=".8552" stop-color="#990030"/><stop offset="1" stop-color="#990025"/></linearGradient>
<linearGradient id="c79" gradientUnits="userSpaceOnUse" x1="1053.85" x2="1593.1"><stop offset="0" stop-color="#007099"/><stop offset=".2262" stop-color="#025099"/><stop offset=".6342" stop-color="#990050"/><stop offset=".8493" stop-color="#990032"/><stop offset=".9995" stop-color="#990026"/></linearGradient>
<linearGradient id="c80" gradientUnits="userSpaceOnUse" x1="1054.85" x2="1591.1"><stop offset="0" stop-color="#006e99"/><stop offset=".2266" stop-color="#034e99"/><stop offset=".6322" stop-color="#990052"/><stop offset=".8429" stop-color="#990034"/><stop offset=".9995" stop-color="#990027"/></linearGradient>
<linearGradient id="c81" gradientUnits="userSpaceOnUse" x1="1055.6" x2="1589.1"><stop offset="0" stop-color="#006c99"/><stop offset=".2268" stop-color="#024d99"/><stop offset=".6298" stop-color="#990055"/><stop offset=".836" stop-color="#990036"/><stop offset="1" stop-color="#990028"/></linearGradient>
<linearGradient id="c82" gradientUnits="userSpaceOnUse" x1="1056.6" x2="1587.35"><stop offset="0" stop-color="#006a99"/><stop offset=".227" stop-color="#034b99"/><stop offset=".6274" stop-color="#990057"/><stop offset=".829" stop-color="#990038"/><stop offset=".9995" stop-color="#990029"/></linearGradient>
<linearGradient id="c83" gradientUnits="userSpaceOnUse" x1="1057.35" x2="1585.35"><stop offset="0" stop-color="#006899"/><stop offset=".2273" stop-color="#034999"/><stop offset=".6259" stop-color="#990059"/><stop offset=".8239" stop-color="#990039"/><stop offset="1" stop-color="#99002a"/></linearGradient>
<linearGradient id="c84" gradientUnits="userSpaceOnUse" x1="1058.35" x2="1583.35"><stop offset="0" stop-color="#006699"/><stop offset=".2276" stop-color="#034899"/><stop offset=".6238" stop-color="#99005b"/><stop offset=".8181" stop-color="#99003b"/><stop offset="1" stop-color="#99002b"/></linearGradient>
<linearGradient id="c85" gradientUnits="userSpaceOnUse" x1="1059.35" x2="1581.35"><stop offset="0" stop-color="#006499"/><stop offset=".228" stop-color="#034699"/><stop offset=".6216" stop-color="#99005e"/><stop offset=".8123" stop-color="#99003d"/><stop offset="1" stop-color="#99002c"/></linearGradient>
<linearGradient id="c86" gradientUnits="userSpaceOnUse" x1="1060.35" x2="1579.35"><stop offset="0" stop-color="#006299"/><stop offset=".2274" stop-color="#024599"/><stop offset=".6195" stop-color="#990060"/><stop offset=".8064" stop-color="#99003f"/><stop offset="1" stop-color="#99002d"/></linearGradient>
<linearGradient id="c87" gradientUnits="userSpaceOnUse" x1="1061.1" x2="1577.35"><stop offset="0" stop-color="#006099"/><stop offset=".2276" stop-color="#024399"/><stop offset=".6179" stop-color="#990062"/><stop offset=".801" stop-color="#990041"/><stop offset=".9995" stop-color="#99002e"/></linearGradient>
<linearGradient id="c88" gradientUnits="userSpaceOnUse" x1="1062.1" x2="1575.6"><stop offset="0" stop-color="#005e99"/><stop offset=".2278" stop-color="#034299"/><stop offset=".6144" stop-color="#990065"/><stop offset=".7936" stop-color="#990044"/><stop offset="1" stop-color="#99002f"/></linearGradient>
<linearGradient id="c89" gradientUnits="userSpaceOnUse" x1="1063.1" x2="1573.6"><stop offset="0" stop-color="#005c99"/><stop offset=".2282" stop-color="#034099"/><stop offset=".6121" stop-color="#990068"/><stop offset=".7875" stop-color="#990046"/><stop offset="1" stop-color="#990031"/></linearGradient>
<linearGradient id="c90" gradientUnits="userSpaceOnUse" x1="1064.1" x2="1571.6"><stop offset="0" stop-color="#005b99"/><stop offset=".2286" stop-color="#033f99"/><stop offset=".6099" stop-color="#99006a"/><stop offset=".7813" stop-color="#990048"/><stop offset="1" stop-color="#990032"/></linearGradient>
<linearGradient id="c91" gradientUnits="userSpaceOnUse" x1="1064.85" x2="1569.6"><stop offset="0" stop-color="#005999"/><stop offset=".2288" stop-color="#033d99"/><stop offset=".6072" stop-color="#99006d"/><stop offset=".7746" stop-color="#99004b"/><stop offset=".9995" stop-color="#990033"/></linearGradient>
<linearGradient id="c92" gradientUnits="userSpaceOnUse" x1="1065.85" x2="1567.6"><stop offset="0" stop-color="#005799"/><stop offset=".2292" stop-color="#033c99"/><stop offset=".6049" stop-color="#990070"/><stop offset=".7693" stop-color="#99004d"/><stop offset=".9995" stop-color="#990034"/></linearGradient>
<linearGradient id="c93" gradientUnits="userSpaceOnUse" x1="1066.85" x2="1565.85"><stop offset="0" stop-color="#005699"/><stop offset=".2285" stop-color="#033b99"/><stop offset=".6022" stop-color="#990073"/><stop offset=".7635" stop-color="#99004f"/><stop offset="1" stop-color="#990035"/></linearGradient>
<linearGradient id="c94" gradientUnits="userSpaceOnUse" x1="1067.85" x2="1563.85"><stop offset="0" stop-color="#005499"/><stop offset=".2288" stop-color="#033999"/><stop offset=".6008" stop-color="#990075"/><stop offset=".7591" stop-color="#990051"/><stop offset="1" stop-color="#990036"/></linearGradient>
<linearGradient id="c95" gradientUnits="userSpaceOnUse" x1="1068.85" x2="1561.85"><stop offset="0" stop-color="#005299"/><stop offset=".2292" stop-color="#033899"/><stop offset=".5984" stop-color="#990078"/><stop offset=".7535" stop-color="#990054"/><stop offset="1" stop-color="#990037"/></linearGradient>
<linearGradient id="c96" gradientUnits="userSpaceOnUse" x1="1069.85" x2="1559.85"><stop offset="0" stop-color="#005199"/><stop offset=".2286" stop-color="#033799"/><stop offset=".5959" stop-color="#99007b"/><stop offset=".748" stop-color="#990057"/><stop offset="1" stop-color="#990038"/></linearGradient>
<linearGradient id="c97" gradientUnits="userSpaceOnUse" x1="1070.85" x2="1557.85"><stop offset="0" stop-color="#004f99"/><stop offset=".229" stop-color="#033699"/><stop offset=".5934" stop-color="#99007e"/><stop offset=".7423" stop-color="#990059"/><stop offset=".9979" stop-color="#99003a"/><stop offset="1" stop-color="#990039"/></linearGradient>
<linearGradient id="c98" gradientUnits="userSpaceOnUse" x1="1071.85" x2="1555.85"><stop offset="0" stop-color="#004e99"/><stop offset=".2293" stop-color="#033499"/><stop offset=".5899" stop-color="#990082"/><stop offset=".7345" stop-color="#99005c"/><stop offset=".9814" stop-color="#99003c"/><stop offset="1" stop-color="#99003a"/></linearGradient>
<linearGradient id="c99" gradientUnits="userSpaceOnUse" x1="1072.85" x2="1554.1"><stop offset="0" stop-color="#004c99"/><stop offset=".2286" stop-color="#023399"/><stop offset=".587" stop-color="#990085"/><stop offset=".7283" stop-color="#99005f"/><stop offset=".9673" stop-color="#99003f"/><stop offset=".9995" stop-color="#99003c"/></linearGradient>
<linearGradient id="c100" gradientUnits="userSpaceOnUse" x1="1073.85" x2="1552.1"><stop offset="0" stop-color="#004b99"/><stop offset=".229" stop-color="#033299"/><stop offset=".5844" stop-color="#990088"/><stop offset=".7235" stop-color="#990062"/><stop offset=".9566" stop-color="#990041"/><stop offset=".9995" stop-color="#99003d"/></linearGradient>
<linearGradient id="c101" gradientUnits="userSpaceOnUse" x1="1074.85" x2="1550.1"><stop offset="0" stop-color="#004a99"/><stop offset=".2294" stop-color="#033199"/><stop offset=".5818" stop-color="#99008c"/><stop offset=".7175" stop-color="#990065"/><stop offset=".9437" stop-color="#990043"/><stop offset=".9995" stop-color="#99003e"/></linearGradient>
<linearGradient id="c102" gradientUnits="userSpaceOnUse" x1="1075.85" x2="1548.1"><stop offset="0" stop-color="#004899"/><stop offset=".2298" stop-color="#033099"/><stop offset=".5791" stop-color="#99008f"/><stop offset=".7125" stop-color="#990068"/><stop offset=".9328" stop-color="#990046"/><stop offset=".9995" stop-color="#99003f"/></linearGradient>
<linearGradient id="c103" gradientUnits="userSpaceOnUse" x1="1076.85" x2="1546.1"><stop offset="0" stop-color="#004799"/><stop offset=".2291" stop-color="#032f99"/><stop offset=".5765" stop-color="#990093"/><stop offset=".7064" stop-color="#99006b"/><stop offset=".9206" stop-color="#990049"/><stop offset=".9995" stop-color="#990040"/></linearGradient>
<linearGradient id="c104" gradientUnits="userSpaceOnUse" x1="1077.85" x2="1544.1"><stop offset="0" stop-color="#004699"/><stop offset=".2295" stop-color="#032e99"/><stop offset=".5748" stop-color="#990096"/><stop offset=".7024" stop-color="#99006e"/><stop offset=".9115" stop-color="#99004b"/><stop offset=".9995" stop-color="#990042"/></linearGradient>
<linearGradient id="c105" gradientUnits="userSpaceOnUse" x1="1078.85" x2="1542.35"><stop offset="0" stop-color="#004499"/><stop offset=".2298" stop-color="#032d99"/><stop offset=".5804" stop-color="#990096"/><stop offset=".7098" stop-color="#99006e"/><stop offset=".9223" stop-color="#99004b"/><stop offset="1" stop-color="#990043"/></linearGradient>
<linearGradient id="c106" gradientUnits="userSpaceOnUse" x1="1079.85" x2="1540.35"><stop offset="0" stop-color="#004399"/><stop offset=".2291" stop-color="#032c99"/><stop offset=".5863" stop-color="#990096"/><stop offset=".7188" stop-color="#99006e"/><stop offset=".9349" stop-color="#99004b"/><stop offset="1" stop-color="#990044"/></linearGradient>
<linearGradient id="c107" gradientUnits="userSpaceOnUse" x1="1081.1" x2="1538.35"><stop offset="0" stop-color="#004299"/><stop offset=".2296" stop-color="#032b99"/><stop offset=".5883" stop-color="#990098"/><stop offset=".7206" stop-color="#99006f"/><stop offset=".936" stop-color="#99004c"/><stop offset=".9995" stop-color="#990045"/></linearGradient>
<linearGradient id="c108" gradientUnits="userSpaceOnUse" x1="1082.1" x2="1536.35"><stop offset="0" stop-color="#004099"/><stop offset=".2289" stop-color="#032a99"/><stop offset=".5856" stop-color="#960099"/><stop offset=".7485" stop-color="#99006b"/><stop offset=".9818" stop-color="#990049"/><stop offset=".9994" stop-color="#990047"/></linearGradient>
<linearGradient id="c109" gradientUnits="userSpaceOnUse" x1="1083.1" x2="1534.35"><stop offset="0" stop-color="#003f99"/><stop offset=".2294" stop-color="#032999"/><stop offset=".5828" stop-color="#930099"/><stop offset=".6127" stop-color="#990093"/><stop offset=".7568" stop-color="#99006b"/><stop offset=".9928" stop-color="#990049"/><stop offset=".9994" stop-color="#990048"/></linearGradient>
<linearGradient id="c110" gradientUnits="userSpaceOnUse" x1="1084.35" x2="1532.6"><stop offset="0" stop-color="#003e99"/><stop offset=".2287" stop-color="#032899"/><stop offset=".58" stop-color="#900099"/><stop offset=".6146" stop-color="#990095"/><stop offset=".7585" stop-color="#99006c"/><stop offset=".9939" stop-color="#99004a"/><stop offset=".9994" stop-color="#990049"/></linearGradient>
<linearGradient id="c111" gradientUnits="userSpaceOnUse" x1="1085.35" x2="1530.6"><stop offset="0" stop-color="#003d99"/><stop offset=".2291" stop-color="#032799"/><stop offset=".5783" stop-color="#8d0099"/><stop offset=".6199" stop-color="#990095"/><stop offset=".7647" stop-color="#99006d"/><stop offset=".9994" stop-color="#99004b"/></linearGradient>
<linearGradient id="c112" gradientUnits="userSpaceOnUse" x1="1086.6" x2="1528.6"><stop offset="0" stop-color="#003c99"/><stop offset=".2285" stop-color="#032699"/><stop offset=".5747" stop-color="#890099"/><stop offset=".6256" stop-color="#990095"/><stop offset=".7726" stop-color="#99006d"/><stop offset="1" stop-color="#99004c"/></linearGradient>
<linearGradient id="c113" gradientUnits="userSpaceOnUse" x1="1087.6" x2="1526.6"><stop offset="0" stop-color="#003a99"/><stop offset=".2289" stop-color="#032599"/><stop offset=".5718" stop-color="#860099"/><stop offset=".6321" stop-color="#990096"/><stop offset=".7825" stop-color="#99006d"/><stop offset="1" stop-color="#99004d"/></linearGradient>
<linearGradient id="c114" gradientUnits="userSpaceOnUse" x1="1088.85" x2="1524.6"><stop offset="0" stop-color="#003999"/><stop offset=".2283" stop-color="#032499"/><stop offset=".5691" stop-color="#830099"/><stop offset=".638" stop-color="#990096"/><stop offset=".7894" stop-color="#99006e"/><stop offset=".9994" stop-color="#99004f"/></linearGradient>
<linearGradient id="c115" gradientUnits="userSpaceOnUse" x1="1089.85" x2="1522.6"><stop offset="0" stop-color="#003899"/><stop offset=".2288" stop-color="#032399"/><stop offset=".5661" stop-color="#800099"/><stop offset=".6447" stop-color="#990096"/><stop offset=".7995" stop-color="#99006d"/><stop offset=".9994" stop-color="#990050"/></linearGradient>
<linearGradient id="c116" gradientUnits="userSpaceOnUse" x1="1090.85" x2="1520.85"><stop offset="0" stop-color="#003799"/><stop offset=".2279" stop-color="#032399"/><stop offset=".564" stop-color="#7d0099"/><stop offset=".6512" stop-color="#990096"/><stop offset=".8081" stop-color="#99006d"/><stop offset="1" stop-color="#990051"/></linearGradient>
<linearGradient id="c117" gradientUnits="userSpaceOnUse" x1="1092.1" x2="1518.85"><stop offset="0" stop-color="#003699"/><stop offset=".2285" stop-color="#032299"/><stop offset=".5612" stop-color="#7a0099"/><stop offset=".6585" stop-color="#990096"/><stop offset=".8178" stop-color="#99006d"/><stop offset=".9994" stop-color="#990053"/></linearGradient>
<linearGradient id="c118" gradientUnits="userSpaceOnUse" x1="1093.1" x2="1516.85"><stop offset="0" stop-color="#003599"/><stop offset=".2277" stop-color="#032199"/><stop offset=".5581" stop-color="#770099"/><stop offset=".6655" stop-color="#990096"/><stop offset=".8283" stop-color="#99006d"/><stop offset=".9994" stop-color="#990054"/></linearGradient>
<linearGradient id="c119" gradientUnits="userSpaceOnUse" x1="1094.35" x2="1514.85"><stop offset="0" stop-color="#003499"/><stop offset=".2283" stop-color="#032099"/><stop offset=".5541" stop-color="#740099"/><stop offset=".6718" stop-color="#990096"/><stop offset=".8359" stop-color="#99006e"/><stop offset="1" stop-color="#990056"/></linearGradient>
<linearGradient id="c120" gradientUnits="userSpaceOnUse" x1="1095.6" x2="1512.85"><stop offset="0" stop-color="#003399"/><stop offset=".2277" stop-color="#031f99"/><stop offset=".5524" stop-color="#720099"/><stop offset=".6794" stop-color="#990096"/><stop offset=".8472" stop-color="#99006d"/><stop offset=".9994" stop-color="#990057"/></linearGradient>
<linearGradient id="c121" gradientUnits="userSpaceOnUse" x1="1096.6" x2="1510.85"><stop offset="0" stop-color="#003299"/><stop offset=".2269" stop-color="#031e99"/><stop offset=".5492" stop-color="#6f0099"/><stop offset=".6868" stop-color="#990096"/><stop offset=".857" stop-color="#99006e"/><stop offset=".9994" stop-color="#990059"/></linearGradient>
<linearGradient id="c122" gradientUnits="userSpaceOnUse" x1="1097.85" x2="1509.1"><stop offset="0" stop-color="#003199"/><stop offset=".2274" stop-color="#031e99"/><stop offset=".5459" stop-color="#6c0099"/><stop offset=".693" stop-color="#990096"/><stop offset=".8657" stop-color="#99006e"/><stop offset=".9994" stop-color="#99005a"/></linearGradient>
<linearGradient id="c123" gradientUnits="userSpaceOnUse" x1="1098.85" x2="1507.1"><stop offset="0" stop-color="#003099"/><stop offset=".2266" stop-color="#031d99"/><stop offset=".5426" stop-color="#6a0099"/><stop offset=".7006" stop-color="#990096"/><stop offset=".8757" stop-color="#99006e"/><stop offset=".9994" stop-color="#99005c"/></linearGradient>
<linearGradient id="c124" gradientUnits="userSpaceOnUse" x1="1100.1" x2="1505.1"><stop offset="0" stop-color="#002f99"/><stop offset=".2272" stop-color="#031c99"/><stop offset=".5395" stop-color="#670099"/><stop offset=".7086" stop-color="#990096"/><stop offset=".8877" stop-color="#99006e"/><stop offset="1" stop-color="#99005d"/></linearGradient>
<linearGradient id="c125" gradientUnits="userSpaceOnUse" x1="1101.35" x2="1503.1"><stop offset="0" stop-color="#002e99"/><stop offset=".2265" stop-color="#031b99"/><stop offset=".5364" stop-color="#650099"/><stop offset=".7169" stop-color="#990096"/><stop offset=".8986" stop-color="#99006e"/><stop offset=".9994" stop-color="#99005f"/></linearGradient>
<linearGradient id="c126" gradientUnits="userSpaceOnUse" x1="1102.6" x2="1501.1"><stop offset="0" stop-color="#002d99"/><stop offset=".2258" stop-color="#031b99"/><stop offset=".532" stop-color="#620099"/><stop offset=".724" stop-color="#990096"/><stop offset=".9084" stop-color="#99006e"/><stop offset="1" stop-color="#990061"/></linearGradient>
<linearGradient id="c127" gradientUnits="userSpaceOnUse" x1="1103.6" x2="1499.35"><stop offset="0" stop-color="#002c99"/><stop offset=".2262" stop-color="#031a99"/><stop offset=".5281" stop-color="#5f0099"/><stop offset=".7315" stop-color="#990096"/><stop offset=".9185" stop-color="#99006e"/><stop offset=".9994" stop-color="#990062"/></linearGradient>
<linearGradient id="c128" gradientUnits="userSpaceOnUse" x1="1104.85" x2="1497.35"><stop offset="0" stop-color="#002b99"/><stop offset=".2255" stop-color="#031999"/><stop offset=".5261" stop-color="#5d0099"/><stop offset=".7401" stop-color="#990096"/><stop offset=".9312" stop-color="#99006e"/><stop offset="1" stop-color="#990064"/></linearGradient>
<linearGradient id="c129" gradientUnits="userSpaceOnUse" x1="1106.1" x2="1495.35"><stop offset="0" stop-color="#002a99"/><stop offset=".2248" stop-color="#031899"/><stop offset=".5215" stop-color="#5b0099"/><stop offset=".7489" stop-color="#990096"/><stop offset=".9428" stop-color="#99006e"/><stop offset=".9994" stop-color="#990065"/></linearGradient>
<linearGradient id="c130" gradientUnits="userSpaceOnUse" x1="1107.35" x2="1493.35"><stop offset="0" stop-color="#002999"/><stop offset=".2241" stop-color="#031899"/><stop offset=".5181" stop-color="#590099"/><stop offset=".7565" stop-color="#990096"/><stop offset=".9534" stop-color="#99006e"/><stop offset="1" stop-color="#990067"/></linearGradient>
<linearGradient id="c131" gradientUnits="userSpaceOnUse" x1="1108.6" x2="1491.35"><stop offset="0" stop-color="#002899"/><stop offset=".2247" stop-color="#031799"/><stop offset=".5147" stop-color="#560099"/><stop offset=".7655" stop-color="#990096"/><stop offset=".9667" stop-color="#99006e"/><stop offset=".9993" stop-color="#990069"/></linearGradient>
<linearGradient id="c132" gradientUnits="userSpaceOnUse" x1="1109.85" x2="1489.35"><stop offset="0" stop-color="#002799"/><stop offset=".224" stop-color="#031699"/><stop offset=".5112" stop-color="#540099"/><stop offset=".7734" stop-color="#990096"/><stop offset=".9776" stop-color="#99006e"/><stop offset="1" stop-color="#99006b"/></linearGradient>
<linearGradient id="c133" gradientUnits="userSpaceOnUse" x1="1111.1" x2="1487.6"><stop offset="0" stop-color="#002699"/><stop offset=".2231" stop-color="#031699"/><stop offset=".5073" stop-color="#520099"/><stop offset=".7822" stop-color="#990096"/><stop offset=".9894" stop-color="#99006e"/><stop offset="1" stop-color="#99006c"/></linearGradient>
<linearGradient id="c134" gradientUnits="userSpaceOnUse" x1="1112.35" x2="1485.6"><stop offset="0" stop-color="#002599"/><stop offset=".2224" stop-color="#031599"/><stop offset=".5023" stop-color="#500099"/><stop offset=".7917" stop-color="#990096"/><stop offset=".9993" stop-color="#99006e"/></linearGradient>
<linearGradient id="c135" gradientUnits="userSpaceOnUse" x1="1113.35" x2="1483.6"><stop offset="0" stop-color="#002499"/><stop offset=".2228" stop-color="#031499"/><stop offset=".4997" stop-color="#4e0099"/><stop offset=".8008" stop-color="#990096"/><stop offset=".9993" stop-color="#990070"/></linearGradient>
<linearGradient id="c136" gradientUnits="userSpaceOnUse" x1="1114.6" x2="1481.6"><stop offset="0" stop-color="#002499"/><stop offset=".2221" stop-color="#031499"/><stop offset=".4959" stop-color="#4c0099"/><stop offset=".8093" stop-color="#990096"/><stop offset="1" stop-color="#990072"/></linearGradient>
<linearGradient id="c137" gradientUnits="userSpaceOnUse" x1="1115.85" x2="1479.6"><stop offset="0" stop-color="#002399"/><stop offset=".2213" stop-color="#031399"/><stop offset=".4907" stop-color="#490099"/><stop offset=".8192" stop-color="#990096"/><stop offset=".9993" stop-color="#990074"/></linearGradient>
<linearGradient id="c138" gradientUnits="userSpaceOnUse" x1="1117.1" x2="1477.6"><stop offset="0" stop-color="#002299"/><stop offset=".2205" stop-color="#031399"/><stop offset=".4882" stop-color="#480099"/><stop offset=".8294" stop-color="#990096"/><stop offset="1" stop-color="#990075"/></linearGradient>
<linearGradient id="c139" gradientUnits="userSpaceOnUse" x1="1118.35" x2="1475.85"><stop offset="0" stop-color="#002199"/><stop offset=".221" stop-color="#031299"/><stop offset=".4825" stop-color="#460099"/><stop offset=".8378" stop-color="#990096"/><stop offset="1" stop-color="#990077"/></linearGradient>
<linearGradient id="c140" gradientUnits="userSpaceOnUse" x1="1119.35" x2="1473.85"><stop offset="0" stop-color="#002099"/><stop offset=".22" stop-color="#031199"/><stop offset=".4795" stop-color="#440099"/><stop offset=".8477" stop-color="#990096"/><stop offset="1" stop-color="#990079"/></linearGradient>
<linearGradient id="c141" gradientUnits="userSpaceOnUse" x1="1120.6" x2="1471.85"><stop offset="0" stop-color="#001f99"/><stop offset=".2206" stop-color="#031199"/><stop offset=".4754" stop-color="#420099"/><stop offset=".8584" stop-color="#990096"/><stop offset=".9993" stop-color="#99007b"/></linearGradient>
<linearGradient id="c142" gradientUnits="userSpaceOnUse" x1="1121.85" x2="1469.85"><stop offset="0" stop-color="#001f99"/><stop offset=".2198" stop-color="#031099"/><stop offset=".4713" stop-color="#400099"/><stop offset=".8678" stop-color="#990096"/><stop offset="1" stop-color="#99007d"/></linearGradient>
<linearGradient id="c143" gradientUnits="userSpaceOnUse" x1="1123.1" x2="1467.85"><stop offset="0" stop-color="#001e99"/><stop offset=".219" stop-color="#031099"/><stop offset=".4656" stop-color="#3e0099"/><stop offset=".8789" stop-color="#990096"/><stop offset=".9993" stop-color="#99007f"/></linearGradient>
<linearGradient id="c144" gradientUnits="userSpaceOnUse" x1="1124.35" x2="1465.85"><stop offset="0" stop-color="#001d99"/><stop offset=".2182" stop-color="#030f99"/><stop offset=".4627" stop-color="#3d0099"/><stop offset=".8902" stop-color="#990096"/><stop offset="1" stop-color="#990081"/></linearGradient>
<linearGradient id="c145" gradientUnits="userSpaceOnUse" x1="1125.6" x2="1464.1"><stop offset="0" stop-color="#001c99"/><stop offset=".2171" stop-color="#030e99"/><stop offset=".4564" stop-color="#3a0099"/><stop offset=".8996" stop-color="#990096"/><stop offset="1" stop-color="#990083"/></linearGradient>
<linearGradient id="c146" gradientUnits="userSpaceOnUse" x1="1127.1" x2="1462.1"><stop offset="0" stop-color="#001b99"/><stop offset=".2164" stop-color="#030e99"/><stop offset=".4522" stop-color="#390099"/><stop offset=".9104" stop-color="#990096"/><stop offset="1" stop-color="#990085"/></linearGradient>
<linearGradient id="c147" gradientUnits="userSpaceOnUse" x1="1128.35" x2="1460.1"><stop offset="0" stop-color="#001b99"/><stop offset=".2155" stop-color="#030d99"/><stop offset=".4476" stop-color="#370099"/><stop offset=".9224" stop-color="#990096"/><stop offset=".9992" stop-color="#990088"/></linearGradient>
<linearGradient id="c148" gradientUnits="userSpaceOnUse" x1="1129.6" x2="1458.1"><stop offset="0" stop-color="#001a99"/><stop offset=".2161" stop-color="#030d99"/><stop offset=".4429" stop-color="#350099"/><stop offset=".9346" stop-color="#990096"/><stop offset="1" stop-color="#99008a"/></linearGradient>
<linearGradient id="c149" gradientUnits="userSpaceOnUse" x1="1130.85" x2="1456.1"><stop offset="0" stop-color="#001999"/><stop offset=".2152" stop-color="#030c99"/><stop offset=".4397" stop-color="#340099"/><stop offset=".9454" stop-color="#990096"/><stop offset=".9992" stop-color="#99008c"/></linearGradient>
<linearGradient id="c150" gradientUnits="userSpaceOnUse" x1="1132.1" x2="1454.35"><stop offset="0" stop-color="#001899"/><stop offset=".2141" stop-color="#030c99"/><stop offset=".4344" stop-color="#320099"/><stop offset=".9573" stop-color="#990096"/><stop offset=".9992" stop-color="#99008e"/></linearGradient>
<linearGradient id="c151" gradientUnits="userSpaceOnUse" x1="1133.35" x2="1452.35"><stop offset="0" stop-color="#001899"/><stop offset=".2132" stop-color="#030b99"/><stop offset=".4295" stop-color="#310099"/><stop offset=".9687" stop-color="#990096"/><stop offset="1" stop-color="#990090"/></linearGradient>
<linearGradient id="c152" gradientUnits="userSpaceOnUse" x1="1134.6" x2="1450.35"><stop offset="0" stop-color="#001799"/><stop offset=".2122" stop-color="#030b99"/><stop offset=".426" stop-color="#2f0099"/><stop offset=".9818" stop-color="#990096"/><stop offset=".9992" stop-color="#990093"/></linearGradient>
<linearGradient id="c153" gradientUnits="userSpaceOnUse" x1="1135.85" x2="1448.35"><stop offset="0" stop-color="#001699"/><stop offset=".2128" stop-color="#030a99"/><stop offset=".4208" stop-color="#2e0099"/><stop offset=".9952" stop-color="#990096"/><stop offset="1" stop-color="#990095"/></linearGradient>
<linearGradient id="c154" gradientUnits="userSpaceOnUse" x1="1137.35" x2="1446.35"><stop offset="0" stop-color="#001599"/><stop offset=".2104" stop-color="#030a99"/><stop offset=".4142" stop-color="#2c0099"/><stop offset="1" stop-color="#990097"/></linearGradient>
<linearGradient id="c155" gradientUnits="userSpaceOnUse" x1="1138.6" x2="1444.35"><stop offset="0" stop-color="#001599"/><stop offset=".211" stop-color="#030999"/><stop offset=".4121" stop-color="#2b0099"/><stop offset=".9992" stop-color="#980099"/></linearGradient>
<linearGradient id="c156" gradientUnits="userSpaceOnUse" x1="1140.1" x2="1442.6"><stop offset="0" stop-color="#001499"/><stop offset=".2083" stop-color="#030899"/><stop offset=".4066" stop-color="#2a0099"/><stop offset="1" stop-color="#960099"/></linearGradient>
<linearGradient id="c157" gradientUnits="userSpaceOnUse" x1="1141.35" x2="1440.6"><stop offset="0" stop-color="#001399"/><stop offset=".2072" stop-color="#030899"/><stop offset=".4027" stop-color="#290099"/><stop offset=".9992" stop-color="#930099"/></linearGradient>
<linearGradient id="c158" gradientUnits="userSpaceOnUse" x1="1142.6" x2="1438.6"><stop offset="0" stop-color="#001399"/><stop offset=".2078" stop-color="#030799"/><stop offset=".4003" stop-color="#280099"/><stop offset="1" stop-color="#910099"/></linearGradient>
<linearGradient id="c159" gradientUnits="userSpaceOnUse" x1="1144.1" x2="1436.6"><stop offset="0" stop-color="#001299"/><stop offset=".2051" stop-color="#030799"/><stop offset=".3966" stop-color="#270099"/><stop offset="1" stop-color="#8f0099"/></linearGradient>
<linearGradient id="c160" gradientUnits="userSpaceOnUse" x1="1145.35" x2="1434.6"><stop offset="0" stop-color="#001199"/><stop offset=".2057" stop-color="#030699"/><stop offset=".3976" stop-color="#260099"/><stop offset=".9991" stop-color="#8c0099"/></linearGradient>
<linearGradient id="c161" gradientUnits="userSpaceOnUse" x1="1146.6" x2="1432.6"><stop offset="0" stop-color="#001199"/><stop offset=".2045" stop-color="#030699"/><stop offset=".3951" stop-color="#250099"/><stop offset="1" stop-color="#8a0099"/></linearGradient>
<linearGradient id="c162" gradientUnits="userSpaceOnUse" x1="1148.1" x2="1430.85"><stop offset="0" stop-color="#001099"/><stop offset=".2034" stop-color="#030599"/><stop offset=".3979" stop-color="#260099"/><stop offset=".9991" stop-color="#880099"/></linearGradient>
<linearGradient id="c163" gradientUnits="userSpaceOnUse" x1="1149.6" x2="1428.85"><stop offset="0" stop-color="#000f99"/><stop offset=".2005" stop-color="#030599"/><stop offset=".4047" stop-color="#260099"/><stop offset=".9991" stop-color="#860099"/></linearGradient>
<linearGradient id="c164" gradientUnits="userSpaceOnUse" x1="1151.1" x2="1426.85"><stop offset="0" stop-color="#000f99"/><stop offset=".1995" stop-color="#030499"/><stop offset=".4243" stop-color="#290099"/><stop offset=".9991" stop-color="#830099"/></linearGradient>
<linearGradient id="c165" gradientUnits="userSpaceOnUse" x1="1152.6" x2="1424.85"><stop offset="0" stop-color="#000e99"/><stop offset=".1983" stop-color="#030499"/><stop offset=".4812" stop-color="#320099"/><stop offset=".9991" stop-color="#810099"/></linearGradient>
<linearGradient id="c166" gradientUnits="userSpaceOnUse" x1="1153.85" x2="1422.85"><stop offset="0" stop-color="#000d99"/><stop offset=".197" stop-color="#030399"/><stop offset=".6487" stop-color="#4a0099"/><stop offset="1" stop-color="#7f0099"/></linearGradient>
<linearGradient id="c167" gradientUnits="userSpaceOnUse" x1="1155.35" x2="1421.1"><stop offset="0" stop-color="#000d99"/><stop offset=".1957" stop-color="#030399"/><stop offset=".9991" stop-color="#7d0099"/></linearGradient>
<linearGradient id="c168" gradientUnits="userSpaceOnUse" x1="1156.85" x2="1419.1"><stop offset="0" stop-color="#000c99"/><stop offset=".1926" stop-color="#030299"/><stop offset=".999" stop-color="#7b0099"/></linearGradient>
<linearGradient id="c169" gradientUnits="userSpaceOnUse" x1="1158.1" x2="1417.1"><stop offset="0" stop-color="#000b99"/><stop offset=".1931" stop-color="#030299"/><stop offset="1" stop-color="#790099"/></linearGradient>
<linearGradient id="c170" gradientUnits="userSpaceOnUse" x1="1159.6" x2="1415.1"><stop offset="0" stop-color="#000b99"/><stop offset=".1898" stop-color="#030199"/><stop offset="1" stop-color="#770099"/></linearGradient>
<linearGradient id="c171" gradientUnits="userSpaceOnUse" x1="1161.1" x2="1413.1"><stop offset="0" stop-color="#000a99"/><stop offset=".1885" stop-color="#030199"/><stop offset="1" stop-color="#750099"/></linearGradient>
<linearGradient id="c172" gradientUnits="userSpaceOnUse" x1="1162.6" x2="1411.1"><stop offset="0" stop-color="#000999"/><stop offset=".1871" stop-color="#030099"/><stop offset="1" stop-color="#730099"/></linearGradient>
<linearGradient id="c173" gradientUnits="userSpaceOnUse" x1="1164.1" x2="1409.35"><stop offset="0" stop-color="#000999"/><stop offset=".1855" stop-color="#030099"/><stop offset=".999" stop-color="#710099"/></linearGradient>
<linearGradient id="c174" gradientUnits="userSpaceOnUse" x1="1165.6" x2="1407.35"><stop offset="0" stop-color="#000899"/><stop offset=".182" stop-color="#030099"/><stop offset=".999" stop-color="#6f0099"/></linearGradient>
<linearGradient id="c175" gradientUnits="userSpaceOnUse" x1="1167.1" x2="1405.35"><stop offset="0" stop-color="#000799"/><stop offset=".1805" stop-color="#030099"/><stop offset=".999" stop-color="#6e0099"/></linearGradient>
<linearGradient id="c176" gradientUnits="userSpaceOnUse" x1="1168.6" x2="1403.35"><stop offset="0" stop-color="#000799"/><stop offset=".1789" stop-color="#030099"/><stop offset=".9989" stop-color="#6c0099"/></linearGradient>
<linearGradient id="c177" gradientUnits="userSpaceOnUse" x1="1170.1" x2="1401.35"><stop offset="0" stop-color="#000699"/><stop offset=".1773" stop-color="#030099"/><stop offset=".9989" stop-color="#6a0099"/></linearGradient>
<linearGradient id="c178" gradientUnits="userSpaceOnUse" x1="1171.6" x2="1399.35"><stop offset="0" stop-color="#000599"/><stop offset=".1734" stop-color="#030099"/><stop offset=".9989" stop-color="#680099"/></linearGradient>
<linearGradient id="c179" gradientUnits="userSpaceOnUse" x1="1173.1" x2="1397.6"><stop offset="0" stop-color="#000599"/><stop offset=".1715" stop-color="#030099"/><stop offset="1" stop-color="#670099"/></linearGradient>
<linearGradient id="c180" gradientUnits="userSpaceOnUse" x1="1174.85" x2="1395.6"><stop offset="0" stop-color="#000499"/><stop offset=".1676" stop-color="#030099"/><stop offset=".9989" stop-color="#650099"/></linearGradient>
<linearGradient id="c181" gradientUnits="userSpaceOnUse" x1="1176.35" x2="1393.6"><stop offset="0" stop-color="#000399"/><stop offset=".1657" stop-color="#030099"/><stop offset=".9988" stop-color="#630099"/></linearGradient>
<linearGradient id="c182" gradientUnits="userSpaceOnUse" x1="1177.85" x2="1391.6"><stop offset="0" stop-color="#000399"/><stop offset=".1637" stop-color="#030099"/><stop offset=".9988" stop-color="#610099"/></linearGradient>
<linearGradient id="c183" gradientUnits="userSpaceOnUse" x1="1179.6" x2="1389.6"><stop offset="0" stop-color="#000299"/><stop offset=".1595" stop-color="#030099"/><stop offset="1" stop-color="#600099"/></linearGradient>
<linearGradient id="c184" gradientUnits="userSpaceOnUse" x1="1181.35" x2="1387.85"><stop offset="0" stop-color="#000199"/><stop offset=".1574" stop-color="#040099"/><stop offset="1" stop-color="#5e0099"/></linearGradient>
<linearGradient id="c185" gradientUnits="userSpaceOnUse" x1="1183.1" x2="1385.85"><stop offset="0" stop-color="#000099"/><stop offset=".1529" stop-color="#030099"/><stop offset=".9988" stop-color="#5c0099"/></linearGradient>
<linearGradient id="c186" gradientUnits="userSpaceOnUse" x1="1184.6" x2="1383.85"><stop offset="0" stop-color="#000099"/><stop offset=".1506" stop-color="#040099"/><stop offset=".9987" stop-color="#5b0099"/></linearGradient>
<linearGradient id="c187" gradientUnits="userSpaceOnUse" x1="1186.35" x2="1381.85"><stop offset="0" stop-color="#000099"/><stop offset=".1458" stop-color="#030099"/><stop offset="1" stop-color="#590099"/></linearGradient>
<linearGradient id="c188" gradientUnits="userSpaceOnUse" x1="1187.85" x2="1379.85"><stop offset="0" stop-color="#000099"/><stop offset=".1432" stop-color="#040099"/><stop offset="1" stop-color="#570099"/></linearGradient>
<linearGradient id="c189" gradientUnits="userSpaceOnUse" x1="1189.6" x2="1377.85"><stop offset="0" stop-color="#000099"/><stop offset=".1408" stop-color="#040099"/><stop offset=".9987" stop-color="#560099"/></linearGradient>
<linearGradient id="c190" gradientUnits="userSpaceOnUse" x1="1191.35" x2="1376.1"><stop offset="0" stop-color="#000099"/><stop offset=".1353" stop-color="#040099"/><stop offset=".9986" stop-color="#540099"/></linearGradient>
<linearGradient id="c191" gradientUnits="userSpaceOnUse" x1="1193.1" x2="1374.1"><stop offset="0" stop-color="#000099"/><stop offset=".1326" stop-color="#040099"/><stop offset="1" stop-color="#530099"/></linearGradient>
<linearGradient id="c192" gradientUnits="userSpaceOnUse" x1="1194.85" x2="1372.1"><stop offset="0" stop-color="#000099"/><stop offset=".1269" stop-color="#040099"/><stop offset=".9986" stop-color="#510099"/></linearGradient>
<linearGradient id="c193" gradientUnits="userSpaceOnUse" x1="1196.6" x2="1370.1"><stop offset="0" stop-color="#000099"/><stop offset=".1239" stop-color="#040099"/><stop offset="1" stop-color="#500099"/></linearGradient>
<linearGradient id="c194" gradientUnits="userSpaceOnUse" x1="1198.6" x2="1368.1"><stop offset="0" stop-color="#000099"/><stop offset=".1209" stop-color="#050099"/><stop offset="1" stop-color="#4e0099"/></linearGradient>
<linearGradient id="c195" gradientUnits="userSpaceOnUse" x1="1200.35" x2="1366.1"><stop offset="0" stop-color="#000099"/><stop offset=".1176" stop-color="#050099"/><stop offset=".9985" stop-color="#4d0099"/></linearGradient>
<linearGradient id="c196" gradientUnits="userSpaceOnUse" x1="1202.35" x2="1364.35"><stop offset="0" stop-color="#000099"/><stop offset=".1235" stop-color="#060099"/><stop offset="1" stop-color="#4b0099"/></linearGradient>
<linearGradient id="c197" gradientUnits="userSpaceOnUse" x1="1204.1" x2="1362.35"><stop offset="0" stop-color="#000099"/><stop offset=".1264" stop-color="#070099"/><stop offset=".9984" stop-color="#4a0099"/></linearGradient>
<linearGradient id="c198" gradientUnits="userSpaceOnUse" x1="1205.85" x2="1360.35"><stop offset="0" stop-color="#000099"/><stop offset=".1521" stop-color="#090099"/><stop offset="1" stop-color="#480099"/></linearGradient>
<linearGradient id="c199" gradientUnits="userSpaceOnUse" x1="1207.85" x2="1358.35"><stop offset="0" stop-color="#000099"/><stop offset="1" stop-color="#470099"/></linearGradient>
<linearGradient id="c200" gradientUnits="userSpaceOnUse" x1="1209.85" x2="1356.35"><stop offset="0" stop-color="#000099"/><stop offset="1" stop-color="#460099"/></linearGradient>
<linearGradient id="c201" gradientUnits="userSpaceOnUse" x1="1212.1" x2="1354.35"><stop offset="0" stop-color="#000099"/><stop offset=".9982" stop-color="#440099"/></linearGradient>
<linearGradient id="c202" gradientUnits="userSpaceOnUse" x1="1214.1" x2="1352.6"><stop offset="0" stop-color="#000099"/><stop offset="1" stop-color="#430099"/></linearGradient>
<linearGradient id="c203" gradientUnits="userSpaceOnUse" x1="1216.35" x2="1350.6"><stop offset="0" stop-color="#010099"/><stop offset=".9981" stop-color="#410099"/></linearGradient>
<linearGradient id="c204" gradientUnits="userSpaceOnUse" x1="1218.35" x2="1348.6"><stop offset="0" stop-color="#020099"/><stop offset=".9981" stop-color="#400099"/></linearGradient>
<linearGradient id="c205" gradientUnits="userSpaceOnUse" x1="1220.6" x2="1346.6"><stop offset="0" stop-color="#030099"/><stop offset="1" stop-color="#3f0099"/></linearGradient>
<linearGradient id="c206" gradientUnits="userSpaceOnUse" x1="1222.6" x2="1344.6"><stop offset="0" stop-color="#040099"/><stop offset="1" stop-color="#3d0099"/></linearGradient>
<linearGradient id="c207" gradientUnits="userSpaceOnUse" x1="1224.85" x2="1342.85"><stop offset="0" stop-color="#050099"/><stop offset="1" stop-color="#3c0099"/></linearGradient>
<linearGradient id="c208" gradientUnits="userSpaceOnUse" x1="1227.1" x2="1340.85"><stop offset="0" stop-color="#060099"/><stop offset=".9978" stop-color="#3b0099"/></linearGradient>
<linearGradient id="c209" gradientUnits="userSpaceOnUse" x1="1229.35" x2="1338.85"><stop offset="0" stop-color="#070099"/><stop offset="1" stop-color="#3a0099"/></linearGradient>
<linearGradient id="c210" gradientUnits="userSpaceOnUse" x1="1231.6" x2="1336.85"><stop offset="0" stop-color="#080099"/><stop offset=".9976" stop-color="#380099"/></linearGradient>
<linearGradient id="c211" gradientUnits="userSpaceOnUse" x1="1233.85" x2="1334.85"><stop offset="0" stop-color="#090099"/><stop offset="1" stop-color="#370099"/></linearGradient>
<linearGradient id="c212" gradientUnits="userSpaceOnUse" x1="1236.35" x2="1332.85"><stop offset="0" stop-color="#0a0099"/><stop offset="1" stop-color="#360099"/></linearGradient>
<linearGradient id="c213" gradientUnits="userSpaceOnUse" x1="1238.85" x2="1331.1"><stop offset="0" stop-color="#0b0099"/><stop offset=".9973" stop-color="#350099"/></linearGradient>
<linearGradient id="c214" gradientUnits="userSpaceOnUse" x1="1241.1" x2="1329.1"><stop offset="0" stop-color="#0c0099"/><stop offset="1" stop-color="#330099"/></linearGradient>
<linearGradient id="c215" gradientUnits="userSpaceOnUse" x1="1243.6" x2="1327.1"><stop offset="0" stop-color="#0d0099"/><stop offset="1" stop-color="#320099"/></linearGradient>
<linearGradient id="c216" gradientUnits="userSpaceOnUse" x1="1246.1" x2="1325.1"><stop offset="0" stop-color="#0e0099"/><stop offset="1" stop-color="#310099"/></linearGradient>
<linearGradient id="c217" gradientUnits="userSpaceOnUse" x1="1248.6" x2="1323.1"><stop offset="0" stop-color="#0f0099"/><stop offset="1" stop-color="#300099"/></linearGradient>
<linearGradient id="c218" gradientUnits="userSpaceOnUse" x1="1250.85" x2="1321.1"><stop offset="0" stop-color="#100099"/><stop offset=".9964" stop-color="#2e0099"/></linearGradient>
<linearGradient id="c219" gradientUnits="userSpaceOnUse" x1="1253.35" x2="1319.35"><stop offset="0" stop-color="#110099"/><stop offset="1" stop-color="#2d0099"/></linearGradient>
<linearGradient id="c220" gradientUnits="userSpaceOnUse" x1="1255.85" x2="1317.35"><stop offset="0" stop-color="#110099"/><stop offset="1" stop-color="#2c0099"/></linearGradient>
<linearGradient id="c221" gradientUnits="userSpaceOnUse" x1="1258.35" x2="1315.35"><stop offset="0" stop-color="#120099"/><stop offset="1" stop-color="#2b0099"/></linearGradient>
<linearGradient id="c222" gradientUnits="userSpaceOnUse" x1="1260.6" x2="1313.35"><stop offset="0" stop-color="#130099"/><stop offset=".9953" stop-color="#2a0099"/></linearGradient>
<linearGradient id="c223" gradientUnits="userSpaceOnUse" x1="1263.1" x2="1311.35"><stop offset="0" stop-color="#140099"/><stop offset=".9948" stop-color="#290099"/></linearGradient>
<linearGradient id="c224" gradientUnits="userSpaceOnUse" x1="1265.6" x2="1309.6"><stop offset="0" stop-color="#150099"/><stop offset="1" stop-color="#280099"/></linearGradient>
<linearGradient id="c225" gradientUnits="userSpaceOnUse" x1="1267.85" x2="1307.6"><stop offset="0" stop-color="#160099"/><stop offset=".9937" stop-color="#260099"/></linearGradient>
<linearGradient id="c226" gradientUnits="userSpaceOnUse" x1="1270.35" x2="1305.6"><stop offset="0" stop-color="#160099"/><stop offset=".9929" stop-color="#250099"/></linearGradient>
<linearGradient id="c227" gradientUnits="userSpaceOnUse" x1="1272.6" x2="1303.6"><stop offset="0" stop-color="#170099"/><stop offset="1" stop-color="#240099"/></linearGradient>
<linearGradient id="c228" gradientUnits="userSpaceOnUse" x1="1275.1" x2="1301.6"><stop offset="0" stop-color="#180099"/><stop offset="1" stop-color="#230099"/></linearGradient>
<linearGradient id="c229" gradientUnits="userSpaceOnUse" x1="1277.35" x2="1299.6"><stop offset="0" stop-color="#190099"/><stop offset=".9888" stop-color="#220099"/></linearGradient>
<linearGradient id="c230" gradientUnits="userSpaceOnUse" x1="1280.1" x2="1297.85"><stop offset="0" stop-color="#1a0099"/><stop offset=".9859" stop-color="#210099"/></linearGradient>
<linearGradient id="c231" gradientUnits="userSpaceOnUse" x1="1282.6" x2="1295.85"><stop offset="0" stop-color="#1a0099"/><stop offset=".9811" stop-color="#200099"/></linearGradient>
<linearGradient id="c232" gradientUnits="userSpaceOnUse" x1="1285.6" x2="1293.85"><stop offset="0" stop-color="#1b0099"/><stop offset=".9697" stop-color="#1f0099"/></linearGradient>
<linearGradient id="t0" gradientUnits="userSpaceOnUse" x1="1150.85" x2="1166.35"><stop offset="0" stop-color="#00ff02"/><stop offset="1" stop-color="#2aff00"/></linearGradient>
<linearGradient id="t1" gradientUnits="userSpaceOnUse" x1="1151.1" x2="1187.85"><stop offset="0" stop-color="#00ff08"/><stop offset=".2857" stop-color="#1cff05"/><stop offset=".9932" stop-color="#64ff00"/></linearGradient>
<linearGradient id="t2" gradientUnits="userSpaceOnUse" x1="1151.35" x2="1209.35"><stop offset="0" stop-color="#00ff0d"/><stop offset=".0948" stop-color="#0dff0c"/><stop offset="1" stop-color="#a5ff00"/></linearGradient>
<linearGradient id="t3" gradientUnits="userSpaceOnUse" x1="1151.85" x2="1230.85"><stop offset="0" stop-color="#00ff13"/><stop offset=".7278" stop-color="#a5ff04"/><stop offset="1" stop-color="#ecff00"/></linearGradient>
<linearGradient id="t4" gradientUnits="userSpaceOnUse" x1="1152.1" x2="1252.35"><stop offset="0" stop-color="#00ff18"/><stop offset=".1197" stop-color="#21ff16"/><stop offset=".6284" stop-color="#b8ff0a"/><stop offset=".8429" stop-color="#fffd03"/><stop offset=".9975" stop-color="#ffce00"/></linearGradient>
<linearGradient id="t5" gradientUnits="userSpaceOnUse" x1="1152.35" x2="1273.85"><stop offset="0" stop-color="#00ff1d"/><stop offset=".0494" stop-color="#0fff1c"/><stop offset=".5103" stop-color="#b5ff11"/><stop offset=".6914" stop-color="#fffd0a"/><stop offset=".856" stop-color="#ffc203"/><stop offset="1" stop-color="#ff9e00"/></linearGradient>
<linearGradient id="t6" gradientUnits="userSpaceOnUse" x1="1152.85" x2="1295.35"><stop offset="0" stop-color="#00ff22"/><stop offset=".3965" stop-color="#a5ff18"/><stop offset=".586" stop-color="#fffc11"/><stop offset=".7263" stop-color="#ffc209"/><stop offset=".9193" stop-color="#ff8d01"/><stop offset="1" stop-color="#ff7d00"/></linearGradient>
<linearGradient id="t7" gradientUnits="userSpaceOnUse" x1="1153.1" x2="1316.85"><stop offset="0" stop-color="#00ff27"/><stop offset=".0855" stop-color="#27ff25"/><stop offset=".3847" stop-color="#bcff1d"/><stop offset=".5069" stop-color="#fffc18"/><stop offset=".626" stop-color="#ffc30f"/><stop offset=".7939" stop-color="#ff8d06"/><stop offset=".9985" stop-color="#ff6300"/></linearGradient>
<linearGradient id="t8" gradientUnits="userSpaceOnUse" x1="1153.35" x2="1338.35"><stop offset="0" stop-color="#00ff2d"/><stop offset=".0324" stop-color="#10ff2c"/><stop offset=".327" stop-color="#b4ff24"/><stop offset=".4459" stop-color="#fffd1f"/><stop offset=".5514" stop-color="#ffc215"/><stop offset=".6973" stop-color="#ff8e0b"/><stop offset=".9108" stop-color="#ff5e02"/><stop offset="1" stop-color="#ff4f00"/></linearGradient>
<linearGradient id="t9" gradientUnits="userSpaceOnUse" x1="1153.6" x2="1359.85"><stop offset="0" stop-color="#00ff32"/><stop offset=".0218" stop-color="#0bff31"/><stop offset=".2933" stop-color="#b5ff2a"/><stop offset=".3976" stop-color="#fffd26"/><stop offset=".4921" stop-color="#ffc21a"/><stop offset=".623" stop-color="#ff8d10"/><stop offset=".8121" stop-color="#ff5e06"/><stop offset=".9988" stop-color="#ff3f00"/></linearGradient>
<linearGradient id="t10" gradientUnits="userSpaceOnUse" x1="1154.1" x2="1381.35"><stop offset="0" stop-color="#00ff37"/><stop offset=".077" stop-color="#32ff35"/><stop offset=".2794" stop-color="#c1ff30"/><stop offset=".3586" stop-color="#fffc2d"/><stop offset=".4444" stop-color="#ffc120"/><stop offset=".5633" stop-color="#ff8d14"/><stop offset=".7349" stop-color="#ff5d09"/><stop offset=".9967" stop-color="#ff3200"/><stop offset=".9989" stop-color="#ff3200"/></linearGradient>
<linearGradient id="t11" gradientUnits="userSpaceOnUse" x1="1154.35" x2="1402.85"><stop offset="0" stop-color="#00ff3c"/><stop offset=".0241" stop-color="#10ff3c"/><stop offset=".2394" stop-color="#b5ff37"/><stop offset=".326" stop-color="#fffc34"/><stop offset=".4024" stop-color="#ffc326"/><stop offset=".5091" stop-color="#ff8e19"/><stop offset=".664" stop-color="#ff5e0d"/><stop offset=".9014" stop-color="#ff3302"/><stop offset="1" stop-color="#ff2600"/></linearGradient>
<linearGradient id="t12" gradientUnits="userSpaceOnUse" x1="1154.6" x2="1424.35"><stop offset="0" stop-color="#00ff41"/><stop offset=".0167" stop-color="#0bff41"/><stop offset=".2206" stop-color="#b6ff3d"/><stop offset=".2984" stop-color="#fffc3a"/><stop offset=".3689" stop-color="#ffc22b"/><stop offset=".4671" stop-color="#ff8d1e"/><stop offset=".6098" stop-color="#ff5d11"/><stop offset=".8267" stop-color="#ff3205"/><stop offset=".9991" stop-color="#ff1c00"/></linearGradient>
<linearGradient id="t13" gradientUnits="userSpaceOnUse" x1="1155.1" x2="1445.85"><stop offset="0" stop-color="#00ff46"/><stop offset=".0774" stop-color="#42ff45"/><stop offset=".2236" stop-color="#cbff43"/><stop offset=".2734" stop-color="#fffe41"/><stop offset=".3388" stop-color="#ffc331"/><stop offset=".4299" stop-color="#ff8d22"/><stop offset=".5606" stop-color="#ff5e15"/><stop offset=".7601" stop-color="#ff3309"/><stop offset=".9991" stop-color="#ff1300"/></linearGradient>
<linearGradient id="t14" gradientUnits="userSpaceOnUse" x1="1155.35" x2="1467.35"><stop offset="0" stop-color="#00ff4c"/><stop offset=".0208" stop-color="#12ff4c"/><stop offset=".1875" stop-color="#b5ff4a"/><stop offset=".2548" stop-color="#fffc48"/><stop offset=".3157" stop-color="#ffc136"/><stop offset=".4006" stop-color="#ff8c26"/><stop offset=".524" stop-color="#ff5c18"/><stop offset=".7115" stop-color="#ff310b"/><stop offset="1" stop-color="#ff0b00"/></linearGradient>
<linearGradient id="t15" gradientUnits="userSpaceOnUse" x1="1155.6" x2="1488.85"><stop offset="0" stop-color="#00ff51"/><stop offset=".0135" stop-color="#0bff51"/><stop offset=".174" stop-color="#b5ff50"/><stop offset=".2371" stop-color="#fffc4f"/><stop offset=".2926" stop-color="#ffc23c"/><stop offset=".3706" stop-color="#ff8d2b"/><stop offset=".4831" stop-color="#ff5e1c"/><stop offset=".6557" stop-color="#ff320e"/><stop offset=".9467" stop-color="#ff0a01"/><stop offset=".9992" stop-color="#ff0400"/></linearGradient>
<linearGradient id="t16" gradientUnits="userSpaceOnUse" x1="1156.1" x2="1499.6"><stop offset="0" stop-color="#00ff56"/><stop offset=".0699" stop-color="#48ff56"/><stop offset=".1892" stop-color="#d0ff56"/><stop offset=".2271" stop-color="#fffd56"/><stop offset=".2809" stop-color="#ffc342"/><stop offset=".3552" stop-color="#ff8e30"/><stop offset=".4629" stop-color="#ff5e20"/><stop offset=".6274" stop-color="#ff3311"/><stop offset=".9039" stop-color="#ff0a04"/><stop offset="1" stop-color="#ff0000"/></linearGradient>
<linearGradient id="t17" gradientUnits="userSpaceOnUse" x1="1156.35" x2="1498.35"><stop offset="0" stop-color="#00ff5c"/><stop offset=".019" stop-color="#12ff5c"/><stop offset=".1667" stop-color="#b4ff5d"/><stop offset=".2266" stop-color="#fffe5d"/><stop offset=".2807" stop-color="#ffc348"/><stop offset=".3553" stop-color="#ff8e35"/><stop offset=".4635" stop-color="#ff5e24"/><stop offset=".6287" stop-color="#ff3314"/><stop offset=".9064" stop-color="#ff0a06"/><stop offset="1" stop-color="#ff0002"/></linearGradient>
<linearGradient id="t18" gradientUnits="userSpaceOnUse" x1="1156.6" x2="1496.35"><stop offset="0" stop-color="#00ff61"/><stop offset=".0132" stop-color="#0cff61"/><stop offset=".1678" stop-color="#b5ff63"/><stop offset=".2266" stop-color="#fffe64"/><stop offset=".2796" stop-color="#ffc44e"/><stop offset=".3532" stop-color="#ff8f3a"/><stop offset=".4606" stop-color="#ff5f28"/><stop offset=".624" stop-color="#ff3417"/><stop offset=".8977" stop-color="#ff0b08"/><stop offset=".9993" stop-color="#ff0005"/></linearGradient>
<linearGradient id="t19" gradientUnits="userSpaceOnUse" x1="1156.85" x2="1494.35"><stop offset="0" stop-color="#00ff67"/><stop offset=".0104" stop-color="#08ff67"/><stop offset=".1689" stop-color="#b6ff6a"/><stop offset=".2281" stop-color="#fffc6a"/><stop offset=".2815" stop-color="#ffc253"/><stop offset=".357" stop-color="#ff8d3e"/><stop offset=".4652" stop-color="#ff5d2b"/><stop offset=".6311" stop-color="#ff321a"/><stop offset=".9111" stop-color="#ff090a"/><stop offset="1" stop-color="#ff0007"/></linearGradient>
<linearGradient id="t20" gradientUnits="userSpaceOnUse" x1="1157.35" x2="1492.35"><stop offset="0" stop-color="#00ff6c"/><stop offset=".0209" stop-color="#14ff6d"/><stop offset=".1672" stop-color="#b5ff70"/><stop offset=".2269" stop-color="#fffd72"/><stop offset=".2806" stop-color="#ffc359"/><stop offset=".3552" stop-color="#ff8e43"/><stop offset=".4627" stop-color="#ff5e2f"/><stop offset=".6269" stop-color="#ff331d"/><stop offset=".903" stop-color="#ff0a0d"/><stop offset="1" stop-color="#ff0009"/></linearGradient>
<linearGradient id="t21" gradientUnits="userSpaceOnUse" x1="1157.6" x2="1490.6"><stop offset="0" stop-color="#00ff72"/><stop offset=".0135" stop-color="#0cff72"/><stop offset=".1667" stop-color="#b4ff77"/><stop offset=".2267" stop-color="#fffe79"/><stop offset=".2808" stop-color="#ffc35f"/><stop offset=".3559" stop-color="#ff8e47"/><stop offset=".464" stop-color="#ff5e32"/><stop offset=".6291" stop-color="#ff3320"/><stop offset=".9084" stop-color="#ff0a0f"/><stop offset="1" stop-color="#ff000b"/></linearGradient>
<linearGradient id="t22" gradientUnits="userSpaceOnUse" x1="1157.85" x2="1488.6"><stop offset="0" stop-color="#00ff77"/><stop offset=".0106" stop-color="#08ff78"/><stop offset=".1678" stop-color="#b5ff7e"/><stop offset=".2268" stop-color="#fffe80"/><stop offset=".2797" stop-color="#ffc465"/><stop offset=".3537" stop-color="#ff8f4d"/><stop offset=".4611" stop-color="#ff5f37"/><stop offset=".6243" stop-color="#ff3323"/><stop offset=".898" stop-color="#ff0b11"/><stop offset=".9992" stop-color="#ff000d"/></linearGradient>
<linearGradient id="t23" gradientUnits="userSpaceOnUse" x1="1158.35" x2="1486.6"><stop offset="0" stop-color="#00ff7d"/><stop offset=".0213" stop-color="#15ff7e"/><stop offset=".1676" stop-color="#b5ff85"/><stop offset=".227" stop-color="#fffd87"/><stop offset=".2803" stop-color="#ffc36b"/><stop offset=".3549" stop-color="#ff8e51"/><stop offset=".4631" stop-color="#ff5e3a"/><stop offset=".6276" stop-color="#ff3326"/><stop offset=".9048" stop-color="#ff0a13"/><stop offset=".9992" stop-color="#ff000f"/></linearGradient>
<linearGradient id="t24" gradientUnits="userSpaceOnUse" x1="1158.6" x2="1484.6"><stop offset="0" stop-color="#00ff83"/><stop offset=".0138" stop-color="#0cff83"/><stop offset=".1672" stop-color="#b5ff8b"/><stop offset=".227" stop-color="#fffd8e"/><stop offset=".2807" stop-color="#ffc371"/><stop offset=".3558" stop-color="#ff8e56"/><stop offset=".4647" stop-color="#ff5d3e"/><stop offset=".6304" stop-color="#ff3228"/><stop offset=".9095" stop-color="#ff0a15"/><stop offset="1" stop-color="#ff0011"/></linearGradient>
<linearGradient id="t25" gradientUnits="userSpaceOnUse" x1="1158.85" x2="1482.6"><stop offset="0" stop-color="#00ff88"/><stop offset=".0108" stop-color="#08ff89"/><stop offset=".1683" stop-color="#b6ff92"/><stop offset=".227" stop-color="#fffd96"/><stop offset=".2811" stop-color="#ffc377"/><stop offset=".3552" stop-color="#ff8e5b"/><stop offset=".4633" stop-color="#ff5e42"/><stop offset=".6286" stop-color="#ff332c"/><stop offset=".9066" stop-color="#ff0a17"/><stop offset=".9992" stop-color="#ff0013"/></linearGradient>
<linearGradient id="t26" gradientUnits="userSpaceOnUse" x1="1159.35" x2="1480.6"><stop offset="0" stop-color="#00ff8e"/><stop offset=".0187" stop-color="#12ff8f"/><stop offset=".1665" stop-color="#b4ff99"/><stop offset=".2272" stop-color="#fffd9d"/><stop offset=".2802" stop-color="#ffc37d"/><stop offset=".3549" stop-color="#ff8e60"/><stop offset=".4623" stop-color="#ff5e46"/><stop offset=".6272" stop-color="#ff332f"/><stop offset=".9043" stop-color="#ff0a1a"/><stop offset=".9992" stop-color="#ff0015"/></linearGradient>
<linearGradient id="t27" gradientUnits="userSpaceOnUse" x1="1159.6" x2="1478.6"><stop offset="0" stop-color="#00ff94"/><stop offset=".0141" stop-color="#0cff95"/><stop offset=".1677" stop-color="#b5ffa0"/><stop offset=".2273" stop-color="#fffda4"/><stop offset=".2806" stop-color="#ffc383"/><stop offset=".3558" stop-color="#ff8e65"/><stop offset=".4639" stop-color="#ff5e4a"/><stop offset=".6285" stop-color="#ff3332"/><stop offset=".906" stop-color="#ff0a1c"/><stop offset="1" stop-color="#ff0017"/></linearGradient>
<linearGradient id="t28" gradientUnits="userSpaceOnUse" x1="1159.85" x2="1476.6"><stop offset="0" stop-color="#00ff9a"/><stop offset=".011" stop-color="#09ff9b"/><stop offset=".1689" stop-color="#b6ffa7"/><stop offset=".2273" stop-color="#fffdac"/><stop offset=".281" stop-color="#ffc389"/><stop offset=".3552" stop-color="#ff8e6a"/><stop offset=".4625" stop-color="#ff5e4e"/><stop offset=".6267" stop-color="#ff3335"/><stop offset=".9029" stop-color="#ff0a1e"/><stop offset=".9992" stop-color="#ff0019"/></linearGradient>
<linearGradient id="t29" gradientUnits="userSpaceOnUse" x1="1160.35" x2="1474.6"><stop offset="0" stop-color="#00ffa0"/><stop offset=".0159" stop-color="#0fffa1"/><stop offset=".1671" stop-color="#b5ffae"/><stop offset=".2275" stop-color="#fffcb3"/><stop offset=".2816" stop-color="#ffc28f"/><stop offset=".3564" stop-color="#ff8d6f"/><stop offset=".4646" stop-color="#ff5e51"/><stop offset=".6301" stop-color="#ff3237"/><stop offset=".9101" stop-color="#ff0a20"/><stop offset=".9992" stop-color="#ff001b"/></linearGradient>
<linearGradient id="t30" gradientUnits="userSpaceOnUse" x1="1160.6" x2="1472.85"><stop offset="0" stop-color="#00ffa6"/><stop offset=".016" stop-color="#0fffa7"/><stop offset=".1665" stop-color="#b4ffb6"/><stop offset=".2274" stop-color="#fffdbb"/><stop offset=".2802" stop-color="#ffc396"/><stop offset=".3539" stop-color="#ff8f75"/><stop offset=".4612" stop-color="#ff5f56"/><stop offset=".6245" stop-color="#ff333b"/><stop offset=".8983" stop-color="#ff0b23"/><stop offset=".9992" stop-color="#ff001d"/></linearGradient>
<linearGradient id="t31" gradientUnits="userSpaceOnUse" x1="1160.85" x2="1470.85"><stop offset="0" stop-color="#00ffac"/><stop offset=".0129" stop-color="#0bffad"/><stop offset=".1677" stop-color="#b5ffbd"/><stop offset=".2274" stop-color="#fffdc3"/><stop offset=".2806" stop-color="#ffc39d"/><stop offset=".3548" stop-color="#ff8e7a"/><stop offset=".4629" stop-color="#ff5e5a"/><stop offset=".6274" stop-color="#ff333e"/><stop offset=".9048" stop-color="#ff0a25"/><stop offset="1" stop-color="#ff001f"/></linearGradient>
<linearGradient id="t32" gradientUnits="userSpaceOnUse" x1="1161.1" x2="1468.85"><stop offset="0" stop-color="#00ffb2"/><stop offset=".0097" stop-color="#07ffb3"/><stop offset=".169" stop-color="#b6ffc5"/><stop offset=".2275" stop-color="#fffdcb"/><stop offset=".2811" stop-color="#ffc3a3"/><stop offset=".3558" stop-color="#ff8e7e"/><stop offset=".4647" stop-color="#ff5e5e"/><stop offset=".6304" stop-color="#ff3241"/><stop offset=".9098" stop-color="#ff0927"/><stop offset=".9992" stop-color="#ff0021"/></linearGradient>
<linearGradient id="t33" gradientUnits="userSpaceOnUse" x1="1161.6" x2="1466.85"><stop offset="0" stop-color="#00ffb9"/><stop offset=".0164" stop-color="#0fffba"/><stop offset=".1671" stop-color="#b5ffcc"/><stop offset=".2277" stop-color="#fffcd3"/><stop offset=".2817" stop-color="#ffc2a9"/><stop offset=".3571" stop-color="#ff8d83"/><stop offset=".4668" stop-color="#ff5d61"/><stop offset=".6339" stop-color="#ff3243"/><stop offset=".9173" stop-color="#ff0929"/><stop offset=".9992" stop-color="#ff0024"/></linearGradient>
<linearGradient id="t34" gradientUnits="userSpaceOnUse" x1="1161.85" x2="1464.85"><stop offset="0" stop-color="#00ffbf"/><stop offset=".0132" stop-color="#0bffc0"/><stop offset=".1683" stop-color="#b6ffd4"/><stop offset=".2277" stop-color="#fffcdb"/><stop offset=".2805" stop-color="#ffc3b0"/><stop offset=".3548" stop-color="#ff8e8a"/><stop offset=".462" stop-color="#ff5e67"/><stop offset=".6254" stop-color="#ff3348"/><stop offset=".901" stop-color="#ff0a2c"/><stop offset="1" stop-color="#ff0026"/></linearGradient>
<linearGradient id="t35" gradientUnits="userSpaceOnUse" x1="1162.1" x2="1462.85"><stop offset="0" stop-color="#00ffc5"/><stop offset=".01" stop-color="#07ffc6"/><stop offset=".1696" stop-color="#b7ffdb"/><stop offset=".2278" stop-color="#fffde3"/><stop offset=".281" stop-color="#ffc3b7"/><stop offset=".3558" stop-color="#ff8e8f"/><stop offset=".4638" stop-color="#ff5e6b"/><stop offset=".6284" stop-color="#ff334b"/><stop offset=".9061" stop-color="#ff0a2e"/><stop offset=".9992" stop-color="#ff0028"/></linearGradient>
<linearGradient id="t36" gradientUnits="userSpaceOnUse" x1="1162.6" x2="1460.85"><stop offset="0" stop-color="#00ffcc"/><stop offset=".0134" stop-color="#0cffcd"/><stop offset=".1676" stop-color="#b5ffe3"/><stop offset=".228" stop-color="#fffceb"/><stop offset=".2816" stop-color="#ffc2bd"/><stop offset=".3571" stop-color="#ff8d93"/><stop offset=".4661" stop-color="#ff5d6e"/><stop offset=".632" stop-color="#ff324d"/><stop offset=".9137" stop-color="#ff0930"/><stop offset=".9992" stop-color="#ff002a"/></linearGradient>
<linearGradient id="t37" gradientUnits="userSpaceOnUse" x1="1162.85" x2="1458.85"><stop offset="0" stop-color="#00ffd2"/><stop offset=".0135" stop-color="#0bffd4"/><stop offset=".1672" stop-color="#b4ffeb"/><stop offset=".228" stop-color="#fffcf3"/><stop offset=".2821" stop-color="#ffc2c4"/><stop offset=".3564" stop-color="#ff8d99"/><stop offset=".4645" stop-color="#ff5e73"/><stop offset=".6301" stop-color="#ff3251"/><stop offset=".9088" stop-color="#ff0a33"/><stop offset="1" stop-color="#ff002c"/></linearGradient>
<linearGradient id="t38" gradientUnits="userSpaceOnUse" x1="1163.1" x2="1456.85"><stop offset="0" stop-color="#00ffd9"/><stop offset=".0102" stop-color="#07ffda"/><stop offset=".1685" stop-color="#b6fff3"/><stop offset=".2281" stop-color="#fffcfc"/><stop offset=".2809" stop-color="#ffc3cc"/><stop offset=".3557" stop-color="#ff8e9f"/><stop offset=".463" stop-color="#ff5e78"/><stop offset=".6264" stop-color="#ff3355"/><stop offset=".9021" stop-color="#ff0a36"/><stop offset=".9991" stop-color="#ff002f"/></linearGradient>
<linearGradient id="t39" gradientUnits="userSpaceOnUse" x1="1163.6" x2="1455.1"><stop offset="0" stop-color="#00ffe0"/><stop offset=".0137" stop-color="#0cffe2"/><stop offset=".1664" stop-color="#b4fffa"/><stop offset=".2316" stop-color="#fef6ff"/><stop offset=".2899" stop-color="#ffbbcc"/><stop offset=".3688" stop-color="#ff869f"/><stop offset=".4837" stop-color="#ff5776"/><stop offset=".6604" stop-color="#ff2c53"/><stop offset=".976" stop-color="#ff0232"/><stop offset="1" stop-color="#ff0031"/></linearGradient>
<linearGradient id="t40" gradientUnits="userSpaceOnUse" x1="1163.85" x2="1453.1"><stop offset="0" stop-color="#00ffe7"/><stop offset=".0138" stop-color="#0cffe9"/><stop offset=".1642" stop-color="#affcff"/><stop offset=".242" stop-color="#ffeafd"/><stop offset=".3008" stop-color="#ffb2cb"/><stop offset=".3838" stop-color="#ff7f9e"/><stop offset=".5065" stop-color="#ff5075"/><stop offset=".6966" stop-color="#ff2651"/><stop offset=".9991" stop-color="#ff0033"/></linearGradient>
<linearGradient id="t41" gradientUnits="userSpaceOnUse" x1="1164.1" x2="1451.1"><stop offset="0" stop-color="#00ffee"/><stop offset=".0105" stop-color="#08ffef"/><stop offset=".1254" stop-color="#82fbff"/><stop offset=".2509" stop-color="#ffe1fc"/><stop offset=".3136" stop-color="#ffa9c9"/><stop offset=".4024" stop-color="#ff769b"/><stop offset=".5331" stop-color="#ff4972"/><stop offset=".7404" stop-color="#ff1f4e"/><stop offset="1" stop-color="#ff0035"/></linearGradient>
<linearGradient id="t42" gradientUnits="userSpaceOnUse" x1="1164.35" x2="1449.1"><stop offset="0" stop-color="#00fff5"/><stop offset=".0105" stop-color="#07fff6"/><stop offset=".0878" stop-color="#58fbff"/><stop offset=".2581" stop-color="#ffd9fd"/><stop offset=".3231" stop-color="#ffa2ca"/><stop offset=".4162" stop-color="#ff709b"/><stop offset=".5549" stop-color="#ff4371"/><stop offset=".7761" stop-color="#ff1a4d"/><stop offset=".9991" stop-color="#ff0038"/></linearGradient>
<linearGradient id="t43" gradientUnits="userSpaceOnUse" x1="1164.85" x2="1447.1"><stop offset="0" stop-color="#00fffc"/><stop offset=".0124" stop-color="#0afffe"/><stop offset=".264" stop-color="#ffd3ff"/><stop offset=".3313" stop-color="#ff9ccb"/><stop offset=".4287" stop-color="#ff6b9b"/><stop offset=".574" stop-color="#ff3e71"/><stop offset=".8078" stop-color="#ff164c"/><stop offset=".9991" stop-color="#ff003a"/></linearGradient>
<linearGradient id="t44" gradientUnits="userSpaceOnUse" x1="1165.1" x2="1445.1"><stop offset="0" stop-color="#00fbff"/><stop offset=".0125" stop-color="#0af9ff"/><stop offset=".2714" stop-color="#fecbff"/><stop offset=".3482" stop-color="#ff92c7"/><stop offset=".4518" stop-color="#ff6298"/><stop offset=".6089" stop-color="#ff376e"/><stop offset=".8607" stop-color="#ff0f49"/><stop offset="1" stop-color="#ff003d"/></linearGradient>
<linearGradient id="t45" gradientUnits="userSpaceOnUse" x1="1165.35" x2="1443.1"><stop offset="0" stop-color="#00f4ff"/><stop offset=".0108" stop-color="#07f2ff"/><stop offset=".2196" stop-color="#c7cfff"/><stop offset=".2844" stop-color="#ffc0fc"/><stop offset=".3582" stop-color="#ff8cc7"/><stop offset=".4644" stop-color="#ff5e98"/><stop offset=".6247" stop-color="#ff336e"/><stop offset=".8821" stop-color="#ff0d4a"/><stop offset=".9991" stop-color="#ff003f"/></linearGradient>
<linearGradient id="t46" gradientUnits="userSpaceOnUse" x1="1165.85" x2="1441.1"><stop offset="0" stop-color="#00edff"/><stop offset=".0163" stop-color="#0debff"/><stop offset=".2906" stop-color="#ffbafe"/><stop offset=".3669" stop-color="#ff87c8"/><stop offset=".4759" stop-color="#ff5a99"/><stop offset=".6412" stop-color="#ff306f"/><stop offset=".9046" stop-color="#ff0a4a"/><stop offset=".9991" stop-color="#ff0041"/></linearGradient>
<linearGradient id="t47" gradientUnits="userSpaceOnUse" x1="1166.1" x2="1439.35"><stop offset="0" stop-color="#00e7ff"/><stop offset=".0146" stop-color="#0be5ff"/><stop offset=".2983" stop-color="#ffb4ff"/><stop offset=".3751" stop-color="#ff83ca"/><stop offset=".4867" stop-color="#ff569a"/><stop offset=".6551" stop-color="#ff2d70"/><stop offset=".9241" stop-color="#ff084b"/><stop offset=".9991" stop-color="#ff0044"/></linearGradient>
<linearGradient id="t48" gradientUnits="userSpaceOnUse" x1="1166.35" x2="1437.35"><stop offset="0" stop-color="#00e1ff"/><stop offset=".0129" stop-color="#09dfff"/><stop offset=".3063" stop-color="#ffaeff"/><stop offset=".3893" stop-color="#ff7cc8"/><stop offset=".5055" stop-color="#ff5099"/><stop offset=".6808" stop-color="#ff296e"/><stop offset=".9613" stop-color="#ff044a"/><stop offset="1" stop-color="#ff0046"/></linearGradient>
<linearGradient id="t49" gradientUnits="userSpaceOnUse" x1="1166.85" x2="1435.35"><stop offset="0" stop-color="#00dbff"/><stop offset=".0223" stop-color="#12d8ff"/><stop offset=".3184" stop-color="#ffa5fc"/><stop offset=".4022" stop-color="#ff76c7"/><stop offset=".5233" stop-color="#ff4b98"/><stop offset=".7058" stop-color="#ff256e"/><stop offset=".9981" stop-color="#ff0049"/><stop offset="1" stop-color="#ff0049"/></linearGradient>
<linearGradient id="t50" gradientUnits="userSpaceOnUse" x1="1167.1" x2="1433.35"><stop offset="0" stop-color="#00d6ff"/><stop offset=".0207" stop-color="#10d2ff"/><stop offset=".3268" stop-color="#ff9ffd"/><stop offset=".4113" stop-color="#ff72c9"/><stop offset=".5333" stop-color="#ff4999"/><stop offset=".7174" stop-color="#ff236f"/><stop offset=".9991" stop-color="#ff004c"/></linearGradient>
<linearGradient id="t51" gradientUnits="userSpaceOnUse" x1="1167.35" x2="1431.35"><stop offset="0" stop-color="#00d0ff"/><stop offset=".0152" stop-color="#0aceff"/><stop offset=".3333" stop-color="#fe9bff"/><stop offset=".4242" stop-color="#ff6dc8"/><stop offset=".5511" stop-color="#ff4498"/><stop offset=".7424" stop-color="#ff1f6e"/><stop offset="1" stop-color="#ff004e"/></linearGradient>
<linearGradient id="t52" gradientUnits="userSpaceOnUse" x1="1167.85" x2="1429.35"><stop offset="0" stop-color="#00cbff"/><stop offset=".3461" stop-color="#ff93fd"/><stop offset=".4359" stop-color="#ff68c8"/><stop offset=".566" stop-color="#ff4099"/><stop offset=".7629" stop-color="#ff1c6e"/><stop offset="1" stop-color="#ff0051"/></linearGradient>
<linearGradient id="t53" gradientUnits="userSpaceOnUse" x1="1168.1" x2="1427.35"><stop offset="0" stop-color="#00c6ff"/><stop offset=".0347" stop-color="#1ac1ff"/><stop offset=".3568" stop-color="#ff8dfc"/><stop offset=".4494" stop-color="#ff63c8"/><stop offset=".5844" stop-color="#ff3c98"/><stop offset=".7869" stop-color="#ff196e"/><stop offset=".999" stop-color="#ff0054"/></linearGradient>
<linearGradient id="t54" gradientUnits="userSpaceOnUse" x1="1168.35" x2="1425.35"><stop offset="0" stop-color="#00c1ff"/><stop offset=".0214" stop-color="#0ebeff"/><stop offset=".3658" stop-color="#ff88fd"/><stop offset=".4611" stop-color="#ff5fc8"/><stop offset=".5992" stop-color="#ff3998"/><stop offset=".8074" stop-color="#ff166e"/><stop offset="1" stop-color="#ff0056"/></linearGradient>
<linearGradient id="t55" gradientUnits="userSpaceOnUse" x1="1168.6" x2="1423.35"><stop offset="0" stop-color="#00bcff"/><stop offset=".0177" stop-color="#0bbaff"/><stop offset=".3729" stop-color="#ff84ff"/><stop offset=".4711" stop-color="#ff5bc9"/><stop offset=".6104" stop-color="#ff369a"/><stop offset=".8204" stop-color="#ff1470"/><stop offset=".999" stop-color="#ff0059"/></linearGradient>
<linearGradient id="t56" gradientUnits="userSpaceOnUse" x1="1169.1" x2="1421.6"><stop offset="0" stop-color="#00b8ff"/><stop offset=".3861" stop-color="#ff7efd"/><stop offset=".4871" stop-color="#ff56c8"/><stop offset=".6337" stop-color="#ff3198"/><stop offset=".8535" stop-color="#ff106e"/><stop offset="1" stop-color="#ff005c"/></linearGradient>
<linearGradient id="t57" gradientUnits="userSpaceOnUse" x1="1169.35" x2="1419.6"><stop offset="0" stop-color="#00b3ff"/><stop offset=".04" stop-color="#1baeff"/><stop offset=".3976" stop-color="#ff78fc"/><stop offset=".5015" stop-color="#ff52c7"/><stop offset=".6513" stop-color="#ff2e98"/><stop offset=".8771" stop-color="#ff0d6e"/><stop offset=".999" stop-color="#ff005f"/></linearGradient>
<linearGradient id="t58" gradientUnits="userSpaceOnUse" x1="1169.6" x2="1417.6"><stop offset="0" stop-color="#00afff"/><stop offset=".0222" stop-color="#0dacff"/><stop offset=".4052" stop-color="#ff75fe"/><stop offset=".5101" stop-color="#ff4fc9"/><stop offset=".6613" stop-color="#ff2c9a"/><stop offset=".8891" stop-color="#ff0c70"/><stop offset="1" stop-color="#ff0062"/></linearGradient>
<linearGradient id="t59" gradientUnits="userSpaceOnUse" x1="1170.1" x2="1415.6"><stop offset="0" stop-color="#00abff"/><stop offset=".4155" stop-color="#ff70fe"/><stop offset=".5234" stop-color="#ff4bc9"/><stop offset=".6802" stop-color="#ff2999"/><stop offset=".9165" stop-color="#ff096f"/><stop offset="1" stop-color="#ff0065"/></linearGradient>
<linearGradient id="t60" gradientUnits="userSpaceOnUse" x1="1170.35" x2="1413.6"><stop offset="0" stop-color="#00a7ff"/><stop offset=".4275" stop-color="#ff6bfe"/><stop offset=".5385" stop-color="#ff47c9"/><stop offset=".6989" stop-color="#ff2699"/><stop offset=".9414" stop-color="#ff066f"/><stop offset=".999" stop-color="#ff0068"/></linearGradient>
<linearGradient id="t61" gradientUnits="userSpaceOnUse" x1="1170.6" x2="1411.6"><stop offset="0" stop-color="#00a3ff"/><stop offset=".0415" stop-color="#199eff"/><stop offset=".4398" stop-color="#ff67fd"/><stop offset=".5539" stop-color="#ff43c8"/><stop offset=".7199" stop-color="#ff2299"/><stop offset=".9689" stop-color="#ff036f"/><stop offset="1" stop-color="#ff006b"/></linearGradient>
<linearGradient id="t62" gradientUnits="userSpaceOnUse" x1="1171.1" x2="1409.6"><stop offset="0" stop-color="#009fff"/><stop offset=".4486" stop-color="#ff63fe"/><stop offset=".566" stop-color="#ff40c9"/><stop offset=".7358" stop-color="#ff2099"/><stop offset=".9916" stop-color="#ff006f"/><stop offset="1" stop-color="#ff006e"/></linearGradient>
<linearGradient id="t63" gradientUnits="userSpaceOnUse" x1="1171.35" x2="1407.6"><stop offset="0" stop-color="#009bff"/><stop offset=".4614" stop-color="#ff5ffe"/><stop offset=".582" stop-color="#ff3cc9"/><stop offset=".7556" stop-color="#ff1d99"/><stop offset=".9989" stop-color="#ff0071"/></linearGradient>
<linearGradient id="t64" gradientUnits="userSpaceOnUse" x1="1171.6" x2="1405.6"><stop offset="0" stop-color="#0098ff"/><stop offset=".4744" stop-color="#ff5afd"/><stop offset=".5983" stop-color="#ff39c8"/><stop offset=".7778" stop-color="#ff1a99"/><stop offset="1" stop-color="#ff0074"/></linearGradient>
<linearGradient id="t65" gradientUnits="userSpaceOnUse" x1="1171.85" x2="1403.85"><stop offset="0" stop-color="#0094ff"/><stop offset=".0431" stop-color="#178fff"/><stop offset=".4871" stop-color="#ff56fd"/><stop offset=".6142" stop-color="#ff35c8"/><stop offset=".7974" stop-color="#ff1798"/><stop offset="1" stop-color="#ff0078"/></linearGradient>
<linearGradient id="t66" gradientUnits="userSpaceOnUse" x1="1172.35" x2="1401.85"><stop offset="0" stop-color="#0091ff"/><stop offset=".4967" stop-color="#ff53fe"/><stop offset=".6275" stop-color="#ff33c9"/><stop offset=".8148" stop-color="#ff1599"/><stop offset="1" stop-color="#ff007b"/></linearGradient>
<linearGradient id="t67" gradientUnits="userSpaceOnUse" x1="1172.6" x2="1399.85"><stop offset="0" stop-color="#008eff"/><stop offset=".5105" stop-color="#ff4ffd"/><stop offset=".6447" stop-color="#ff2fc8"/><stop offset=".8383" stop-color="#ff1298"/><stop offset=".9989" stop-color="#ff007e"/></linearGradient>
<linearGradient id="t68" gradientUnits="userSpaceOnUse" x1="1172.85" x2="1397.85"><stop offset="0" stop-color="#008bff"/><stop offset=".5244" stop-color="#ff4bfd"/><stop offset=".6622" stop-color="#ff2cc8"/><stop offset=".86" stop-color="#ff0f98"/><stop offset="1" stop-color="#ff0082"/></linearGradient>
<linearGradient id="t69" gradientUnits="userSpaceOnUse" x1="1173.35" x2="1395.85"><stop offset="0" stop-color="#0087ff"/><stop offset=".5348" stop-color="#ff48fe"/><stop offset=".6742" stop-color="#ff2ac9"/><stop offset=".8764" stop-color="#ff0d99"/><stop offset="1" stop-color="#ff0085"/></linearGradient>
<linearGradient id="t70" gradientUnits="userSpaceOnUse" x1="1173.6" x2="1393.85"><stop offset="0" stop-color="#0084ff"/><stop offset=".5494" stop-color="#ff44fe"/><stop offset=".6924" stop-color="#ff27c9"/><stop offset=".899" stop-color="#ff0b99"/><stop offset=".9989" stop-color="#ff0089"/></linearGradient>
<linearGradient id="t71" gradientUnits="userSpaceOnUse" x1="1173.85" x2="1391.85"><stop offset="0" stop-color="#0081ff"/><stop offset=".5642" stop-color="#ff41fd"/><stop offset=".7133" stop-color="#ff23c8"/><stop offset=".9266" stop-color="#ff0798"/><stop offset="1" stop-color="#ff008d"/></linearGradient>
<linearGradient id="t72" gradientUnits="userSpaceOnUse" x1="1174.35" x2="1389.85"><stop offset="0" stop-color="#007fff"/><stop offset=".5754" stop-color="#ff3efe"/><stop offset=".7262" stop-color="#ff21c9"/><stop offset=".9443" stop-color="#ff0599"/><stop offset="1" stop-color="#ff0090"/></linearGradient>
<linearGradient id="t73" gradientUnits="userSpaceOnUse" x1="1174.6" x2="1387.85"><stop offset="0" stop-color="#007cff"/><stop offset=".5909" stop-color="#ff3afe"/><stop offset=".7456" stop-color="#ff1ec9"/><stop offset=".9683" stop-color="#ff0399"/><stop offset=".9988" stop-color="#ff0094"/></linearGradient>
<linearGradient id="t74" gradientUnits="userSpaceOnUse" x1="1174.85" x2="1386.1"><stop offset="0" stop-color="#0079ff"/><stop offset=".6036" stop-color="#ff38fe"/><stop offset=".7621" stop-color="#ff1cc9"/><stop offset=".9893" stop-color="#ff0099"/><stop offset=".9988" stop-color="#ff0098"/></linearGradient>
<linearGradient id="t75" gradientUnits="userSpaceOnUse" x1="1175.35" x2="1384.1"><stop offset="0" stop-color="#0076ff"/><stop offset=".618" stop-color="#ff34fe"/><stop offset=".7808" stop-color="#ff19c9"/><stop offset=".9988" stop-color="#ff009c"/></linearGradient>
<linearGradient id="t76" gradientUnits="userSpaceOnUse" x1="1175.6" x2="1382.1"><stop offset="0" stop-color="#0074ff"/><stop offset=".632" stop-color="#ff32ff"/><stop offset=".799" stop-color="#ff17c9"/><stop offset="1" stop-color="#ff00a0"/></linearGradient>
<linearGradient id="t77" gradientUnits="userSpaceOnUse" x1="1175.85" x2="1380.1"><stop offset="0" stop-color="#0071ff"/><stop offset=".6487" stop-color="#ff2eff"/><stop offset=".8176" stop-color="#ff14ca"/><stop offset=".9988" stop-color="#ff00a4"/></linearGradient>
<linearGradient id="t78" gradientUnits="userSpaceOnUse" x1="1176.1" x2="1378.1"><stop offset="0" stop-color="#006fff"/><stop offset=".6658" stop-color="#ff2bfe"/><stop offset=".8416" stop-color="#ff11c9"/><stop offset="1" stop-color="#ff00a8"/></linearGradient>
<linearGradient id="t79" gradientUnits="userSpaceOnUse" x1="1176.6" x2="1376.1"><stop offset="0" stop-color="#006cff"/><stop offset=".6792" stop-color="#ff29ff"/><stop offset=".8596" stop-color="#ff0fc9"/><stop offset="1" stop-color="#ff00ac"/></linearGradient>
<linearGradient id="t80" gradientUnits="userSpaceOnUse" x1="1176.85" x2="1374.1"><stop offset="0" stop-color="#006aff"/><stop offset=".6971" stop-color="#ff26ff"/><stop offset=".8796" stop-color="#ff0dca"/><stop offset=".9987" stop-color="#ff00b1"/></linearGradient>
<linearGradient id="t81" gradientUnits="userSpaceOnUse" x1="1177.1" x2="1372.1"><stop offset="0" stop-color="#0068ff"/><stop offset=".7154" stop-color="#ff23fe"/><stop offset=".9026" stop-color="#ff0ac9"/><stop offset="1" stop-color="#ff00b5"/></linearGradient>
<linearGradient id="t82" gradientUnits="userSpaceOnUse" x1="1177.6" x2="1370.35"><stop offset="0" stop-color="#0065ff"/><stop offset=".7289" stop-color="#ff21ff"/><stop offset=".9261" stop-color="#ff07c9"/><stop offset=".9987" stop-color="#ff00ba"/></linearGradient>
<linearGradient id="t83" gradientUnits="userSpaceOnUse" x1="1177.85" x2="1368.35"><stop offset="0" stop-color="#0063ff"/><stop offset=".748" stop-color="#ff1eff"/><stop offset=".9449" stop-color="#ff05c9"/><stop offset="1" stop-color="#ff00be"/></linearGradient>
<linearGradient id="t84" gradientUnits="userSpaceOnUse" x1="1178.1" x2="1366.35"><stop offset="0" stop-color="#0061ff"/><stop offset=".7676" stop-color="#ff1bfe"/><stop offset=".9695" stop-color="#ff02c9"/><stop offset=".9987" stop-color="#ff00c3"/></linearGradient>
<linearGradient id="t85" gradientUnits="userSpaceOnUse" x1="1178.6" x2="1364.35"><stop offset="0" stop-color="#005fff"/><stop offset=".7376" stop-color="#f01dff"/><stop offset=".7941" stop-color="#ff17fc"/><stop offset=".9987" stop-color="#ff00c8"/></linearGradient>
<linearGradient id="t86" gradientUnits="userSpaceOnUse" x1="1178.85" x2="1362.35"><stop offset="0" stop-color="#005dff"/><stop offset=".8038" stop-color="#ff16ff"/><stop offset="1" stop-color="#ff00cd"/></linearGradient>
<linearGradient id="t87" gradientUnits="userSpaceOnUse" x1="1179.1" x2="1360.35"><stop offset="0" stop-color="#005bff"/><stop offset=".8248" stop-color="#ff13ff"/><stop offset=".9986" stop-color="#ff00d2"/></linearGradient>
<linearGradient id="t88" gradientUnits="userSpaceOnUse" x1="1179.6" x2="1358.35"><stop offset="0" stop-color="#0059ff"/><stop offset=".7189" stop-color="#da1dff"/><stop offset=".8531" stop-color="#ff10fc"/><stop offset=".9986" stop-color="#ff00d7"/></linearGradient>
<linearGradient id="t89" gradientUnits="userSpaceOnUse" x1="1179.85" x2="1356.35"><stop offset="0" stop-color="#0057ff"/><stop offset=".813" stop-color="#f014ff"/><stop offset=".8754" stop-color="#ff0dfc"/><stop offset="1" stop-color="#ff00dc"/></linearGradient>
<linearGradient id="t90" gradientUnits="userSpaceOnUse" x1="1180.1" x2="1354.35"><stop offset="0" stop-color="#0055ff"/><stop offset=".8752" stop-color="#fc0dff"/><stop offset=".9986" stop-color="#ff00e2"/></linearGradient>
<linearGradient id="t91" gradientUnits="userSpaceOnUse" x1="1180.35" x2="1352.6"><stop offset="0" stop-color="#0053ff"/><stop offset=".8853" stop-color="#f90bff"/><stop offset=".9289" stop-color="#ff07f9"/><stop offset=".9985" stop-color="#ff00e7"/></linearGradient>
<linearGradient id="t92" gradientUnits="userSpaceOnUse" x1="1180.85" x2="1350.6"><stop offset="0" stop-color="#0051ff"/><stop offset=".7953" stop-color="#db14ff"/><stop offset=".9396" stop-color="#ff06fc"/><stop offset=".9985" stop-color="#ff00ed"/></linearGradient>
<linearGradient id="t93" gradientUnits="userSpaceOnUse" x1="1181.1" x2="1348.6"><stop offset="0" stop-color="#0050ff"/><stop offset=".8955" stop-color="#f00aff"/><stop offset=".9642" stop-color="#ff03fc"/><stop offset="1" stop-color="#ff00f3"/></linearGradient>
<linearGradient id="t94" gradientUnits="userSpaceOnUse" x1="1181.35" x2="1346.6"><stop offset="0" stop-color="#004eff"/><stop offset=".9107" stop-color="#ee08ff"/><stop offset=".9894" stop-color="#ff00fb"/><stop offset=".9985" stop-color="#ff00f9"/></linearGradient>
<linearGradient id="t95" gradientUnits="userSpaceOnUse" x1="1181.85" x2="1344.6"><stop offset="0" stop-color="#004cff"/><stop offset=".808" stop-color="#cf11ff"/><stop offset=".9985" stop-color="#ff00ff"/></linearGradient>
<linearGradient id="t96" gradientUnits="userSpaceOnUse" x1="1182.1" x2="1342.6"><stop offset="0" stop-color="#004aff"/><stop offset=".8816" stop-color="#dc0bff"/><stop offset="1" stop-color="#f900ff"/></linearGradient>
<linearGradient id="t97" gradientUnits="userSpaceOnUse" x1="1182.35" x2="1340.6"><stop offset="0" stop-color="#0049ff"/><stop offset=".9384" stop-color="#e405ff"/><stop offset=".9984" stop-color="#f200ff"/></linearGradient>
<linearGradient id="t98" gradientUnits="userSpaceOnUse" x1="1182.85" x2="1338.6"><stop offset="0" stop-color="#0047ff"/><stop offset=".8283" stop-color="#c50eff"/><stop offset=".9984" stop-color="#ed00ff"/></linearGradient>
<linearGradient id="t99" gradientUnits="userSpaceOnUse" x1="1183.1" x2="1336.6"><stop offset="0" stop-color="#0045ff"/><stop offset=".8958" stop-color="#cf09ff"/><stop offset="1" stop-color="#e700ff"/></linearGradient>
<linearGradient id="t100" gradientUnits="userSpaceOnUse" x1="1183.35" x2="1334.85"><stop offset="0" stop-color="#0044ff"/><stop offset=".9571" stop-color="#d803ff"/><stop offset="1" stop-color="#e200ff"/></linearGradient>
<linearGradient id="t101" gradientUnits="userSpaceOnUse" x1="1183.6" x2="1332.85"><stop offset="0" stop-color="#0042ff"/><stop offset=".9648" stop-color="#d502ff"/><stop offset=".9983" stop-color="#dc00ff"/></linearGradient>
<linearGradient id="t102" gradientUnits="userSpaceOnUse" x1="1184.1" x2="1330.85"><stop offset="0" stop-color="#0041ff"/><stop offset=".9199" stop-color="#c606ff"/><stop offset=".9983" stop-color="#d600ff"/></linearGradient>
<linearGradient id="t103" gradientUnits="userSpaceOnUse" x1="1184.35" x2="1328.85"><stop offset="0" stop-color="#003fff"/><stop offset=".9758" stop-color="#cc01ff"/><stop offset="1" stop-color="#d100ff"/></linearGradient>
<linearGradient id="t104" gradientUnits="userSpaceOnUse" x1="1184.6" x2="1326.85"><stop offset="0" stop-color="#003eff"/><stop offset=".9807" stop-color="#c801ff"/><stop offset=".9982" stop-color="#cc00ff"/></linearGradient>
<linearGradient id="t105" gradientUnits="userSpaceOnUse" x1="1185.1" x2="1324.85"><stop offset="0" stop-color="#003cff"/><stop offset=".9589" stop-color="#bf02ff"/><stop offset=".9982" stop-color="#c700ff"/></linearGradient>
<linearGradient id="t106" gradientUnits="userSpaceOnUse" x1="1185.35" x2="1322.85"><stop offset="0" stop-color="#003bff"/><stop offset="1" stop-color="#c200ff"/></linearGradient>
<linearGradient id="t107" gradientUnits="userSpaceOnUse" x1="1185.6" x2="1320.85"><stop offset="0" stop-color="#003aff"/><stop offset=".9982" stop-color="#bd00ff"/></linearGradient>
<linearGradient id="t108" gradientUnits="userSpaceOnUse" x1="1186.1" x2="1318.85"><stop offset="0" stop-color="#0038ff"/><stop offset=".9981" stop-color="#b800ff"/></linearGradient>
<linearGradient id="t109" gradientUnits="userSpaceOnUse" x1="1186.35" x2="1317.1"><stop offset="0" stop-color="#0037ff"/><stop offset=".9981" stop-color="#b400ff"/></linearGradient>
<linearGradient id="t110" gradientUnits="userSpaceOnUse" x1="1186.6" x2="1315.1"><stop offset="0" stop-color="#0036ff"/><stop offset="1" stop-color="#af00ff"/></linearGradient>
<linearGradient id="t111" gradientUnits="userSpaceOnUse" x1="1187.1" x2="1313.1"><stop offset="0" stop-color="#0034ff"/><stop offset="1" stop-color="#ab00ff"/></linearGradient>
<linearGradient id="t112" gradientUnits="userSpaceOnUse" x1="1187.35" x2="1311.1"><stop offset="0" stop-color="#0033ff"/><stop offset=".998" stop-color="#a600ff"/></linearGradient>
<linearGradient id="t113" gradientUnits="userSpaceOnUse" x1="1187.6" x2="1309.1"><stop offset="0" stop-color="#0032ff"/><stop offset="1" stop-color="#a200ff"/></linearGradient>
<linearGradient id="t114" gradientUnits="userSpaceOnUse" x1="1187.85" x2="1307.1"><stop offset="0" stop-color="#0030ff"/><stop offset=".9979" stop-color="#9d00ff"/></linearGradient>
<linearGradient id="t115" gradientUnits="userSpaceOnUse" x1="1188.35" x2="1305.1"><stop offset="0" stop-color="#002fff"/><stop offset=".9979" stop-color="#9900ff"/></linearGradient>
<linearGradient id="t116" gradientUnits="userSpaceOnUse" x1="1188.6" x2="1303.1"><stop offset="0" stop-color="#002eff"/><stop offset="1" stop-color="#9500ff"/></linearGradient>
<linearGradient id="t117" gradientUnits="userSpaceOnUse" x1="1188.85" x2="1301.35"><stop offset="0" stop-color="#002dff"/><stop offset="1" stop-color="#9100ff"/></linearGradient>
<linearGradient id="t118" gradientUnits="userSpaceOnUse" x1="1189.35" x2="1299.35"><stop offset="0" stop-color="#002bff"/><stop offset="1" stop-color="#8d00ff"/></linearGradient>
<linearGradient id="t119" gradientUnits="userSpaceOnUse" x1="1189.6" x2="1297.35"><stop offset="0" stop-color="#002aff"/><stop offset=".9977" stop-color="#8900ff"/></linearGradient>
<linearGradient id="t120" gradientUnits="userSpaceOnUse" x1="1189.85" x2="1295.35"><stop offset="0" stop-color="#0029ff"/><stop offset="1" stop-color="#8500ff"/></linearGradient>
<linearGradient id="t121" gradientUnits="userSpaceOnUse" x1="1190.35" x2="1293.35"><stop offset="0" stop-color="#0028ff"/><stop offset="1" stop-color="#8100ff"/></linearGradient>
<linearGradient id="t122" gradientUnits="userSpaceOnUse" x1="1190.6" x2="1291.35"><stop offset="0" stop-color="#0027ff"/><stop offset=".9975" stop-color="#7d00ff"/></linearGradient>
<linearGradient id="t123" gradientUnits="userSpaceOnUse" x1="1190.85" x2="1289.35"><stop offset="0" stop-color="#0026ff"/><stop offset="1" stop-color="#7a00ff"/></linearGradient>
<linearGradient id="t124" gradientUnits="userSpaceOnUse" x1="1191.1" x2="1287.35"><stop offset="0" stop-color="#0025ff"/><stop offset=".9974" stop-color="#7600ff"/></linearGradient>
<linearGradient id="t125" gradientUnits="userSpaceOnUse" x1="1191.6" x2="1285.35"><stop offset="0" stop-color="#0024ff"/><stop offset=".9973" stop-color="#7200ff"/></linearGradient>
<linearGradient id="t126" gradientUnits="userSpaceOnUse" x1="1191.85" x2="1283.6"><stop offset="0" stop-color="#0023ff"/><stop offset=".9973" stop-color="#6f00ff"/></linearGradient>
<linearGradient id="t127" gradientUnits="userSpaceOnUse" x1="1192.1" x2="1281.6"><stop offset="0" stop-color="#0022ff"/><stop offset="1" stop-color="#6c00ff"/></linearGradient>
<linearGradient id="t128" gradientUnits="userSpaceOnUse" x1="1192.6" x2="1279.6"><stop offset="0" stop-color="#0021ff"/><stop offset="1" stop-color="#6900ff"/></linearGradient>
<linearGradient id="t129" gradientUnits="userSpaceOnUse" x1="1192.85" x2="1277.6"><stop offset="0" stop-color="#0020ff"/><stop offset=".9971" stop-color="#6500ff"/></linearGradient>
<linearGradient id="t130" gradientUnits="userSpaceOnUse" x1="1193.1" x2="1275.6"><stop offset="0" stop-color="#001fff"/><stop offset="1" stop-color="#6200ff"/></linearGradient>
<linearGradient id="t131" gradientUnits="userSpaceOnUse" x1="1193.6" x2="1273.6"><stop offset="0" stop-color="#001dff"/><stop offset="1" stop-color="#5e00ff"/></linearGradient>
<linearGradient id="t132" gradientUnits="userSpaceOnUse" x1="1193.85" x2="1271.6"><stop offset="0" stop-color="#001dff"/><stop offset=".9968" stop-color="#5b00ff"/></linearGradient>
<linearGradient id="t133" gradientUnits="userSpaceOnUse" x1="1194.1" x2="1269.6"><stop offset="0" stop-color="#001cff"/><stop offset="1" stop-color="#5800ff"/></linearGradient>
<linearGradient id="t134" gradientUnits="userSpaceOnUse" x1="1194.6" x2="1267.6"><stop offset="0" stop-color="#001bff"/><stop offset="1" stop-color="#5500ff"/></linearGradient>
<linearGradient id="t135" gradientUnits="userSpaceOnUse" x1="1194.85" x2="1265.85"><stop offset="0" stop-color="#001aff"/><stop offset="1" stop-color="#5200ff"/></linearGradient>
<linearGradient id="t136" gradientUnits="userSpaceOnUse" x1="1195.1" x2="1263.85"><stop offset="0" stop-color="#0019ff"/><stop offset=".9964" stop-color="#4f00ff"/></linearGradient>
<linearGradient id="t137" gradientUnits="userSpaceOnUse" x1="1195.35" x2="1261.85"><stop offset="0" stop-color="#0018ff"/><stop offset="1" stop-color="#4c00ff"/></linearGradient>
<linearGradient id="t138" gradientUnits="userSpaceOnUse" x1="1195.85" x2="1259.85"><stop offset="0" stop-color="#0017ff"/><stop offset="1" stop-color="#4900ff"/></linearGradient>
<linearGradient id="t139" gradientUnits="userSpaceOnUse" x1="1196.1" x2="1257.85"><stop offset="0" stop-color="#0016ff"/><stop offset=".996" stop-color="#4600ff"/></linearGradient>
<linearGradient id="t140" gradientUnits="userSpaceOnUse" x1="1196.35" x2="1255.85"><stop offset="0" stop-color="#0015ff"/><stop offset="1" stop-color="#4300ff"/></linearGradient>
<linearGradient id="t141" gradientUnits="userSpaceOnUse" x1="1196.85" x2="1253.85"><stop offset="0" stop-color="#0014ff"/><stop offset="1" stop-color="#4000ff"/></linearGradient>
<linearGradient id="t142" gradientUnits="userSpaceOnUse" x1="1197.1" x2="1251.85"><stop offset="0" stop-color="#0013ff"/><stop offset=".9954" stop-color="#3d00ff"/></linearGradient>
<linearGradient id="t143" gradientUnits="userSpaceOnUse" x1="1197.35" x2="1249.85"><stop offset="0" stop-color="#0012ff"/><stop offset="1" stop-color="#3a00ff"/></linearGradient>
<linearGradient id="t144" gradientUnits="userSpaceOnUse" x1="1197.85" x2="1248.1"><stop offset="0" stop-color="#0011ff"/><stop offset=".995" stop-color="#3700ff"/></linearGradient>
<linearGradient id="t145" gradientUnits="userSpaceOnUse" x1="1198.1" x2="1246.1"><stop offset="0" stop-color="#0011ff"/><stop offset="1" stop-color="#3500ff"/></linearGradient>
<linearGradient id="t146" gradientUnits="userSpaceOnUse" x1="1198.35" x2="1244.1"><stop offset="0" stop-color="#0010ff"/><stop offset=".9945" stop-color="#3200ff"/></linearGradient>
<linearGradient id="t147" gradientUnits="userSpaceOnUse" x1="1198.85" x2="1242.1"><stop offset="0" stop-color="#000fff"/><stop offset=".9942" stop-color="#2f00ff"/></linearGradient>
<linearGradient id="t148" gradientUnits="userSpaceOnUse" x1="1199.1" x2="1240.1"><stop offset="0" stop-color="#000eff"/><stop offset="1" stop-color="#2d00ff"/></linearGradient>
<linearGradient id="t149" gradientUnits="userSpaceOnUse" x1="1199.35" x2="1238.1"><stop offset="0" stop-color="#000dff"/><stop offset=".9935" stop-color="#2a00ff"/></linearGradient>
<linearGradient id="t150" gradientUnits="userSpaceOnUse" x1="1199.6" x2="1236.1"><stop offset="0" stop-color="#000cff"/><stop offset="1" stop-color="#2700ff"/></linearGradient>
<linearGradient id="t151" gradientUnits="userSpaceOnUse" x1="1200.1" x2="1234.1"><stop offset="0" stop-color="#000cff"/><stop offset="1" stop-color="#2500ff"/></linearGradient>
<linearGradient id="t152" gradientUnits="userSpaceOnUse" x1="1200.35" x2="1232.35"><stop offset="0" stop-color="#000bff"/><stop offset="1" stop-color="#2200ff"/></linearGradient>
<linearGradient id="t153" gradientUnits="userSpaceOnUse" x1="1200.6" x2="1230.35"><stop offset="0" stop-color="#000aff"/><stop offset=".9916" stop-color="#2000ff"/></linearGradient>
<linearGradient id="t154" gradientUnits="userSpaceOnUse" x1="1201.1" x2="1228.35"><stop offset="0" stop-color="#0009ff"/><stop offset=".9908" stop-color="#1d00ff"/></linearGradient>
<linearGradient id="t155" gradientUnits="userSpaceOnUse" x1="1201.35" x2="1226.35"><stop offset="0" stop-color="#0008ff"/><stop offset="1" stop-color="#1b00ff"/></linearGradient>
<linearGradient id="t156" gradientUnits="userSpaceOnUse" x1="1201.6" x2="1224.35"><stop offset="0" stop-color="#0008ff"/><stop offset=".989" stop-color="#1800ff"/></linearGradient>
<linearGradient id="t157" gradientUnits="userSpaceOnUse" x1="1202.1" x2="1222.35"><stop offset="0" stop-color="#0007ff"/><stop offset=".9877" stop-color="#1500ff"/></linearGradient>
<linearGradient id="t158" gradientUnits="userSpaceOnUse" x1="1202.35" x2="1220.35"><stop offset="0" stop-color="#0006ff"/><stop offset="1" stop-color="#1300ff"/></linearGradient>
<linearGradient id="t159" gradientUnits="userSpaceOnUse" x1="1202.6" x2="1218.35"><stop offset="0" stop-color="#0005ff"/><stop offset=".9841" stop-color="#1000ff"/></linearGradient>
<linearGradient id="t160" gradientUnits="userSpaceOnUse" x1="1202.85" x2="1216.35"><stop offset="0" stop-color="#0004ff"/><stop offset="1" stop-color="#0e00ff"/></linearGradient>
<linearGradient id="t161" gradientUnits="userSpaceOnUse" x1="1203.35" x2="1214.6"><stop offset="0" stop-color="#0004ff"/><stop offset=".9778" stop-color="#0c00ff"/></linearGradient>
<linearGradient id="t162" gradientUnits="userSpaceOnUse" x1="1203.6" x2="1212.6"><stop offset="0" stop-color="#0003ff"/><stop offset="1" stop-color="#0900ff"/></linearGradient>
<linearGradient id="t163" gradientUnits="userSpaceOnUse" x1="1203.85" x2="1210.6"><stop offset="0" stop-color="#0002ff"/><stop offset=".963" stop-color="#0600ff"/></linearGradient>
<linearGradient id="t164" gradientUnits="userSpaceOnUse" x1="1204.35" x2="1208.6"><stop offset="0" stop-color="#0001ff"/><stop offset=".9412" stop-color="#0400ff"/></linearGradient>
<linearGradient id="t165" gradientUnits="userSpaceOnUse" x1="1204.6" x2="1206.6"><stop offset="0" stop-color="#0000ff"/><stop offset="1" stop-color="#0100ff"/></linearGradient>
<linearGradient id="gIn" gradientUnits="userSpaceOnUse" x1="1437.93" y1="423.77" x2="1666.07" y2="586.23"><stop offset="0" stop-color="#96ff00"/><stop offset=".5" stop-color="#ffff12"/><stop offset="1" stop-color="#ffa400"/></linearGradient>
<linearGradient id="gHd" x1="0" y1="0" x2="0" y2="1"><stop offset="0" stop-color="#2a2a2a"/><stop offset=".5" stop-color="#313131"/><stop offset=".56" stop-color="#171717"/><stop offset="1" stop-color="#161616"/></linearGradient>
<clipPath id="cTb"><rect x="321" y="662" width="1345.2" height="228"/></clipPath>
<linearGradient id="gB" x1="0" y1="0" x2="0" y2="1"><stop offset="0" stop-color="#a2a2a2"/><stop offset="1" stop-color="#6c6c6c"/></linearGradient>
<linearGradient id="gBs" x1="0" y1="0" x2="0" y2="1"><stop offset="0" stop-color="#161616"/><stop offset="1" stop-color="#383838"/></linearGradient>
<linearGradient id="gTr" x1="0" y1="0" x2="0" y2="1"><stop offset="0" stop-color="#b0b0b0"/><stop offset="1" stop-color="#6c6c6c"/></linearGradient><linearGradient id="gTs" x1="0" y1="0" x2="0" y2="1"><stop offset="0" stop-color="#454545"/><stop offset="1" stop-color="#2e2e2e"/></linearGradient>
<linearGradient id="gTc" x1="0" y1="0" x2="0" y2="1"><stop offset="0" stop-color="#6c6c6c"/><stop offset="1" stop-color="#b0b0b0"/></linearGradient>
<linearGradient id="gSt" x1="0" y1="0" x2="0" y2="1"><stop offset="0" stop-color="#b8b8b8"/><stop offset=".5" stop-color="#a4a4a4"/><stop offset=".52" stop-color="#8c8c8c"/><stop offset="1" stop-color="#9a9a9a"/></linearGradient>
<clipPath id="cBt"><rect x="1.2" y="925" width="1264.3" height="83"/></clipPath>
</defs>
<!-- s_top -->
<rect x="0" y="0" width="1669" height="1008" fill="#333333"/>
<rect x="0" y="0" width="1669" height="39.2" fill="#252525"/>
<rect x="0" y="39.2" width="1669" height="1" fill="#2c2c2c"/>
<rect x="0" y="40" width="1.2" height="968" fill="#262626"/>
<rect x="1666.5" y="40" width="2.5" height="850" fill="#141414"/>
<rect x="1664.5" y="40" width="2" height="850" fill="#2a2a2a"/>
<path d="M0.5 39.5V7a4.5 4.5 0 0 1 4.5-4.5H110a4.5 4.5 0 0 1 4.5 4.5V39.2" fill="url(#gTab)" stroke="#8c8c8c" stroke-width="1"/>
<path d="M73.5 3V39.2" stroke="#6e6e6e" stroke-width="1"/>
<text x="7.8" y="27" font-size="14.1" fill="#ececec" textLength="58" lengthAdjust="spacingAndGlyphs">History 1</text>
<circle cx="92.3" cy="23" r="12" fill="url(#gPlus)"/>
<path d="M88.8 24.5h7M92.3 21v7" stroke="#9a9a9a" stroke-width="1"/>
<path d="M1055 39.5V6a4 4 0 0 1 4-4H1229a4 4 0 0 1 4 4V39.2Z" fill="url(#gDev)"/>
<path d="M1055 39.5V6a4 4 0 0 1 4-4h3V39.2Z" fill="#10d010"/>
<text x="1066" y="16.2" font-size="13.6" fill="#f2f2f2" textLength="82" lengthAdjust="spacingAndGlyphs">X-Rite i1Pro 3</text>
<text x="1066" y="35.3" font-size="13.6" fill="#f2f2f2" textLength="69.5" lengthAdjust="spacingAndGlyphs">Direct View</text>
<circle cx="1164.2" cy="20.5" r="11.5" fill="url(#gCirc)"/>
<path d="M1159.4 18.6h9.6l-4.8 5.4z" fill="#fff"/>
<path d="M1188.3 5V39.2" stroke="#4a4a4a" stroke-width="1"/><path d="M1189.3 5V39.2" stroke="#8a8a8a" stroke-width="0.8"/>
<circle cx="1214.2" cy="20.7" r="15.6" fill="#0000e8" stroke="#e8e8ff" stroke-width="1.3"/>
<text x="1205.1" y="25" font-size="12" fill="#fff" font-weight="bold" textLength="18.2" lengthAdjust="spacingAndGlyphs">619</text>
<path d="M1241 39.5V6a4 4 0 0 1 4-4H1399.5a4 4 0 0 1 4 4V39.2Z" fill="url(#gDev)"/>
<path d="M1241 39.5V6a4 4 0 0 1 4-4h3V39.2Z" fill="#10d010"/>
<text x="1252" y="16.2" font-size="13.6" fill="#f2f2f2" textLength="80.5" lengthAdjust="spacingAndGlyphs">Mobile Forge</text>
<circle cx="1382.6" cy="20.5" r="11.5" fill="url(#gCirc)"/>
<path d="M1377.8 18.6h9.6l-4.8 5.4z" fill="#fff"/>
<path d="M1411 39.5V6a4 4 0 0 1 4-4H1586a4 4 0 0 1 4 4V39.2Z" fill="url(#gDev)"/>
<path d="M1411 39.5V6a4 4 0 0 1 4-4h3V39.2Z" fill="#e6e600"/>
<text x="1422" y="16.2" font-size="13.6" fill="#f2f2f2" textLength="131" lengthAdjust="spacingAndGlyphs">Direct Display Control</text>
<circle cx="1569.5" cy="20.5" r="11.5" fill="url(#gCirc)"/>
<path d="M1564.7 18.6h9.6l-4.8 5.4z" fill="#fff"/>
<rect x="1594.5" y="2.5" width="41.5" height="34" rx="5" fill="url(#gBtn)" stroke="#a8a8a8" stroke-width="1"/>
<circle cx="1614.7" cy="19.6" r="11.5" fill="url(#gCirc)"/>
<path d="M1620.1 19.6L1623 19.6" stroke="#e4e4e4" stroke-width="2.7"/><path d="M1618.52 23.42L1620.57 25.47" stroke="#e4e4e4" stroke-width="2.7"/><path d="M1614.7 25L1614.7 27.9" stroke="#e4e4e4" stroke-width="2.7"/><path d="M1610.88 23.42L1608.83 25.47" stroke="#e4e4e4" stroke-width="2.7"/><path d="M1609.3 19.6L1606.4 19.6" stroke="#e4e4e4" stroke-width="2.7"/><path d="M1610.88 15.78L1608.83 13.73" stroke="#e4e4e4" stroke-width="2.7"/><path d="M1614.7 14.2L1614.7 11.3" stroke="#e4e4e4" stroke-width="2.7"/><path d="M1618.52 15.78L1620.57 13.73" stroke="#e4e4e4" stroke-width="2.7"/>
<circle cx="1614.7" cy="19.6" r="5" fill="none" stroke="#e4e4e4" stroke-width="2"/>
<rect x="1637.5" y="2.5" width="41.5" height="34" rx="5" fill="url(#gBtn)" stroke="#a8a8a8" stroke-width="1"/>
<circle cx="1654" cy="19.6" r="11.5" fill="url(#gCirc)"/>
<path d="M1657.4 12.2v14.8l-7.4-7.4z" fill="#fff"/>
<text x="7.4" y="127.5" font-size="42.6" fill="#f4f4f4" textLength="242" lengthAdjust="spacingAndGlyphs">ColorChecker</text>
<!-- s_de -->
<rect x="20.5" y="272.3" width="336" height="331.2" fill="#262626"/>
<path d="M65.14 272.3V603.5" stroke="#8c8c8c" stroke-width="1.1"/>
<path d="M109.78 272.3V603.5" stroke="#8c8c8c" stroke-width="1.1"/>
<path d="M154.42 272.3V603.5" stroke="#8c8c8c" stroke-width="1.1"/>
<path d="M199.06 272.3V603.5" stroke="#8c8c8c" stroke-width="1.1"/>
<path d="M243.7 272.3V603.5" stroke="#8c8c8c" stroke-width="1.1"/>
<path d="M288.34 272.3V603.5" stroke="#8c8c8c" stroke-width="1.1"/>
<path d="M332.98 272.3V603.5" stroke="#8c8c8c" stroke-width="1.1"/>
<rect x="20.5" y="272.3" width="336" height="331.2" fill="none" stroke="#a4a4a4" stroke-width="1.2"/>
<path d="M20.5 603.5v6" stroke="#cccccc" stroke-width="1.5"/>
<text x="16.2" y="625.6" font-size="14.6" fill="#d2d2d2" textLength="8.6" lengthAdjust="spacingAndGlyphs">0</text>
<path d="M65.14 603.5v6" stroke="#cccccc" stroke-width="1.5"/>
<text x="60.84" y="625.6" font-size="14.6" fill="#d2d2d2" textLength="8.6" lengthAdjust="spacingAndGlyphs">2</text>
<path d="M109.78 603.5v6" stroke="#cccccc" stroke-width="1.5"/>
<text x="105.48" y="625.6" font-size="14.6" fill="#d2d2d2" textLength="8.6" lengthAdjust="spacingAndGlyphs">4</text>
<path d="M154.42 603.5v6" stroke="#cccccc" stroke-width="1.5"/>
<text x="150.12" y="625.6" font-size="14.6" fill="#d2d2d2" textLength="8.6" lengthAdjust="spacingAndGlyphs">6</text>
<path d="M199.06 603.5v6" stroke="#cccccc" stroke-width="1.5"/>
<text x="194.76" y="625.6" font-size="14.6" fill="#d2d2d2" textLength="8.6" lengthAdjust="spacingAndGlyphs">8</text>
<path d="M243.7 603.5v6" stroke="#cccccc" stroke-width="1.5"/>
<text x="235.1" y="625.6" font-size="14.6" fill="#d2d2d2" textLength="17.2" lengthAdjust="spacingAndGlyphs">10</text>
<path d="M288.34 603.5v6" stroke="#cccccc" stroke-width="1.5"/>
<text x="279.74" y="625.6" font-size="14.6" fill="#d2d2d2" textLength="17.2" lengthAdjust="spacingAndGlyphs">12</text>
<path d="M332.98 603.5v6" stroke="#cccccc" stroke-width="1.5"/>
<text x="324.38" y="625.6" font-size="14.6" fill="#d2d2d2" textLength="17.2" lengthAdjust="spacingAndGlyphs">14</text>
<text x="149.35" y="266.9" font-size="14" fill="#d2d2d2" textLength="78.5" lengthAdjust="spacingAndGlyphs">DeltaE 2000</text>
<rect x="21.9" y="274.3" width="48.1" height="6" fill="url(#gb0)" stroke="#000" stroke-width="1.35"/>
<rect x="22.4" y="274.8" width="47.1" height="5" fill="url(#gGl)"/>
<rect x="21.9" y="285.32" width="99.44" height="6" fill="url(#gb1)" stroke="#000" stroke-width="1.35"/>
<rect x="22.4" y="285.82" width="98.44" height="5" fill="url(#gGl)"/>
<rect x="21.9" y="296.35" width="128.46" height="6" fill="url(#gb2)" stroke="#000" stroke-width="1.35"/>
<rect x="22.4" y="296.85" width="127.46" height="5" fill="url(#gGl)"/>
<rect x="21.9" y="307.38" width="41.41" height="6" fill="url(#gb3)" stroke="#000" stroke-width="1.35"/>
<rect x="22.4" y="307.88" width="40.41" height="5" fill="url(#gGl)"/>
<rect x="21.9" y="318.4" width="67.08" height="6" fill="url(#gb4)" stroke="#000" stroke-width="1.35"/>
<rect x="22.4" y="318.9" width="66.08" height="5" fill="url(#gGl)"/>
<rect x="21.9" y="329.43" width="140.73" height="6" fill="url(#gb5)" stroke="#000" stroke-width="1.35"/>
<rect x="22.4" y="329.93" width="139.73" height="5" fill="url(#gGl)"/>
<rect x="21.9" y="340.45" width="150.11" height="6" fill="url(#gb6)" stroke="#000" stroke-width="1.35"/>
<rect x="22.4" y="340.95" width="149.11" height="5" fill="url(#gGl)"/>
<rect x="21.9" y="351.48" width="98.32" height="6" fill="url(#gb7)" stroke="#000" stroke-width="1.35"/>
<rect x="22.4" y="351.98" width="97.32" height="5" fill="url(#gGl)"/>
<rect x="21.9" y="362.5" width="82.03" height="6" fill="url(#gb8)" stroke="#000" stroke-width="1.35"/>
<rect x="22.4" y="363" width="81.03" height="5" fill="url(#gGl)"/>
<rect x="21.9" y="373.53" width="41.85" height="6" fill="url(#gb9)" stroke="#000" stroke-width="1.35"/>
<rect x="22.4" y="374.03" width="40.85" height="5" fill="url(#gGl)"/>
<rect x="21.9" y="384.55" width="105.47" height="6" fill="url(#gb10)" stroke="#000" stroke-width="1.35"/>
<rect x="22.4" y="385.05" width="104.47" height="5" fill="url(#gGl)"/>
<rect x="21.9" y="395.58" width="127.34" height="6" fill="url(#gb11)" stroke="#000" stroke-width="1.35"/>
<rect x="22.4" y="396.08" width="126.34" height="5" fill="url(#gGl)"/>
<rect x="21.9" y="406.6" width="113.28" height="6" fill="url(#gb12)" stroke="#000" stroke-width="1.35"/>
<rect x="22.4" y="407.1" width="112.28" height="5" fill="url(#gGl)"/>
<rect x="21.9" y="417.62" width="73.77" height="6" fill="url(#gb13)" stroke="#000" stroke-width="1.35"/>
<rect x="22.4" y="418.12" width="72.77" height="5" fill="url(#gGl)"/>
<rect x="21.9" y="428.65" width="106.58" height="6" fill="url(#gb14)" stroke="#000" stroke-width="1.35"/>
<rect x="22.4" y="429.15" width="105.58" height="5" fill="url(#gGl)"/>
<rect x="21.9" y="439.68" width="31.81" height="6" fill="url(#gb15)" stroke="#000" stroke-width="1.35"/>
<rect x="22.4" y="440.18" width="30.81" height="5" fill="url(#gGl)"/>
<rect x="21.9" y="450.7" width="102.34" height="6" fill="url(#gb16)" stroke="#000" stroke-width="1.35"/>
<rect x="22.4" y="451.2" width="101.34" height="5" fill="url(#gGl)"/>
<rect x="21.9" y="461.73" width="125.78" height="6" fill="url(#gb17)" stroke="#000" stroke-width="1.35"/>
<rect x="22.4" y="462.23" width="124.78" height="5" fill="url(#gGl)"/>
<rect x="21.9" y="472.75" width="58.15" height="6" fill="url(#gb18)" stroke="#000" stroke-width="1.35"/>
<rect x="22.4" y="473.25" width="57.15" height="5" fill="url(#gGl)"/>
<rect x="21.9" y="483.77" width="125.55" height="6" fill="url(#gb19)" stroke="#000" stroke-width="1.35"/>
<rect x="22.4" y="484.27" width="124.55" height="5" fill="url(#gGl)"/>
<rect x="21.9" y="494.8" width="64.4" height="6" fill="url(#gb20)" stroke="#000" stroke-width="1.35"/>
<rect x="22.4" y="495.3" width="63.4" height="5" fill="url(#gGl)"/>
<rect x="21.9" y="505.83" width="80.47" height="6" fill="url(#gb21)" stroke="#000" stroke-width="1.35"/>
<rect x="22.4" y="506.33" width="79.47" height="5" fill="url(#gGl)"/>
<rect x="21.9" y="516.85" width="75.33" height="6" fill="url(#gb22)" stroke="#000" stroke-width="1.35"/>
<rect x="22.4" y="517.35" width="74.33" height="5" fill="url(#gGl)"/>
<rect x="21.9" y="527.88" width="52.79" height="6" fill="url(#gb23)" stroke="#000" stroke-width="1.35"/>
<rect x="22.4" y="528.38" width="51.79" height="5" fill="url(#gGl)"/>
<rect x="21.9" y="538.9" width="24.67" height="6" fill="url(#gb24)" stroke="#000" stroke-width="1.35"/>
<rect x="22.4" y="539.4" width="23.67" height="5" fill="url(#gGl)"/>
<rect x="21.9" y="549.92" width="98.32" height="6" fill="url(#gb25)" stroke="#000" stroke-width="1.35"/>
<rect x="22.4" y="550.42" width="97.32" height="5" fill="url(#gGl)"/>
<rect x="21.9" y="560.95" width="112.83" height="6" fill="url(#gb26)" stroke="#000" stroke-width="1.35"/>
<rect x="22.4" y="561.45" width="111.83" height="5" fill="url(#gGl)"/>
<rect x="21.9" y="571.98" width="123.55" height="6" fill="url(#gb27)" stroke="#000" stroke-width="1.35"/>
<rect x="22.4" y="572.48" width="122.55" height="5" fill="url(#gGl)"/>
<rect x="21.9" y="583" width="131.13" height="6" fill="url(#gb28)" stroke="#000" stroke-width="1.35"/>
<rect x="22.4" y="583.5" width="130.13" height="5" fill="url(#gGl)"/>
<rect x="21.9" y="594.03" width="128.68" height="6" fill="url(#gb29)" stroke="#000" stroke-width="1.35"/>
<rect x="22.4" y="594.53" width="127.68" height="5" fill="url(#gGl)"/>
<!-- s_delta -->
<rect x="400.3" y="122.3" width="153.3" height="337" fill="#262626"/>
<path d="M397.8 122.3h3" stroke="#d0d0d0" stroke-width="1.3"/>
<text x="388.6" y="127.5" font-size="14.6" fill="#d2d2d2" textLength="8.4" lengthAdjust="spacingAndGlyphs">4</text>
<path d="M400.3 164.93H553.6" stroke="#8c8c8c" stroke-width="1.1"/>
<path d="M397.8 164.93h3" stroke="#d0d0d0" stroke-width="1.3"/>
<text x="388.6" y="170.12" font-size="14.6" fill="#d2d2d2" textLength="8.4" lengthAdjust="spacingAndGlyphs">3</text>
<path d="M400.3 207.05H553.6" stroke="#8c8c8c" stroke-width="1.1"/>
<path d="M397.8 207.05h3" stroke="#d0d0d0" stroke-width="1.3"/>
<text x="388.6" y="212.25" font-size="14.6" fill="#d2d2d2" textLength="8.4" lengthAdjust="spacingAndGlyphs">2</text>
<path d="M400.3 249.18H553.6" stroke="#8c8c8c" stroke-width="1.1"/>
<path d="M397.8 249.18h3" stroke="#d0d0d0" stroke-width="1.3"/>
<text x="388.6" y="254.38" font-size="14.6" fill="#d2d2d2" textLength="8.4" lengthAdjust="spacingAndGlyphs">1</text>
<path d="M400.3 291.3H553.6" stroke="#8c8c8c" stroke-width="1.1"/>
<path d="M397.8 291.3h3" stroke="#d0d0d0" stroke-width="1.3"/>
<text x="388.6" y="296.5" font-size="14.6" fill="#d2d2d2" textLength="8.4" lengthAdjust="spacingAndGlyphs">0</text>
<path d="M400.3 333.43H553.6" stroke="#8c8c8c" stroke-width="1.1"/>
<path d="M397.8 333.43h3" stroke="#d0d0d0" stroke-width="1.3"/>
<text x="383.6" y="338.62" font-size="14.6" fill="#d2d2d2" textLength="13.4" lengthAdjust="spacingAndGlyphs">-1</text>
<path d="M400.3 375.55H553.6" stroke="#8c8c8c" stroke-width="1.1"/>
<path d="M397.8 375.55h3" stroke="#d0d0d0" stroke-width="1.3"/>
<text x="383.6" y="380.75" font-size="14.6" fill="#d2d2d2" textLength="13.4" lengthAdjust="spacingAndGlyphs">-2</text>
<path d="M400.3 417.68H553.6" stroke="#8c8c8c" stroke-width="1.1"/>
<path d="M397.8 417.68h3" stroke="#d0d0d0" stroke-width="1.3"/>
<text x="383.6" y="422.88" font-size="14.6" fill="#d2d2d2" textLength="13.4" lengthAdjust="spacingAndGlyphs">-3</text>
<path d="M397.8 459.3h3" stroke="#d0d0d0" stroke-width="1.3"/>
<text x="383.6" y="464.5" font-size="14.6" fill="#d2d2d2" textLength="13.4" lengthAdjust="spacingAndGlyphs">-4</text>
<rect x="400.3" y="122.3" width="153.3" height="337" fill="none" stroke="#a4a4a4" stroke-width="1.2"/>
<rect x="415.3" y="291.3" width="121.3" height="45.07" fill="url(#gY)" stroke="#000" stroke-width="1.1"/>
<text x="444.16" y="117.7" font-size="14" fill="#d2d2d2" textLength="45.69" lengthAdjust="spacingAndGlyphs">Delta L</text>
<rect x="605.7" y="122.3" width="144.7" height="337" fill="#262626"/>
<path d="M603.2 122.3h3" stroke="#d0d0d0" stroke-width="1.3"/>
<text x="585.6" y="127.5" font-size="14.6" fill="#d2d2d2" textLength="16.8" lengthAdjust="spacingAndGlyphs">10</text>
<path d="M605.7 207.05H750.4" stroke="#8c8c8c" stroke-width="1.1"/>
<path d="M603.2 207.05h3" stroke="#d0d0d0" stroke-width="1.3"/>
<text x="594" y="212.25" font-size="14.6" fill="#d2d2d2" textLength="8.4" lengthAdjust="spacingAndGlyphs">5</text>
<path d="M605.7 291.3H750.4" stroke="#8c8c8c" stroke-width="1.1"/>
<path d="M603.2 291.3h3" stroke="#d0d0d0" stroke-width="1.3"/>
<text x="594" y="296.5" font-size="14.6" fill="#d2d2d2" textLength="8.4" lengthAdjust="spacingAndGlyphs">0</text>
<path d="M605.7 375.55H750.4" stroke="#8c8c8c" stroke-width="1.1"/>
<path d="M603.2 375.55h3" stroke="#d0d0d0" stroke-width="1.3"/>
<text x="589" y="380.75" font-size="14.6" fill="#d2d2d2" textLength="13.4" lengthAdjust="spacingAndGlyphs">-5</text>
<path d="M603.2 459.3h3" stroke="#d0d0d0" stroke-width="1.3"/>
<text x="580.6" y="464.5" font-size="14.6" fill="#d2d2d2" textLength="21.8" lengthAdjust="spacingAndGlyphs">-10</text>
<rect x="605.7" y="122.3" width="144.7" height="337" fill="none" stroke="#a4a4a4" stroke-width="1.2"/>
<rect x="621" y="136.79" width="114.8" height="154.51" fill="url(#gY)" stroke="#000" stroke-width="1.1"/>
<text x="640.46" y="117.7" font-size="14" fill="#d2d2d2" textLength="48.08" lengthAdjust="spacingAndGlyphs">Delta C</text>
<rect x="796.2" y="122.3" width="152.4" height="337" fill="#262626"/>
<path d="M793.7 122.3h3" stroke="#d0d0d0" stroke-width="1.3"/>
<text x="784.5" y="127.5" font-size="14.6" fill="#d2d2d2" textLength="8.4" lengthAdjust="spacingAndGlyphs">4</text>
<path d="M796.2 164.93H948.6" stroke="#8c8c8c" stroke-width="1.1"/>
<path d="M793.7 164.93h3" stroke="#d0d0d0" stroke-width="1.3"/>
<text x="784.5" y="170.12" font-size="14.6" fill="#d2d2d2" textLength="8.4" lengthAdjust="spacingAndGlyphs">3</text>
<path d="M796.2 207.05H948.6" stroke="#8c8c8c" stroke-width="1.1"/>
<path d="M793.7 207.05h3" stroke="#d0d0d0" stroke-width="1.3"/>
<text x="784.5" y="212.25" font-size="14.6" fill="#d2d2d2" textLength="8.4" lengthAdjust="spacingAndGlyphs">2</text>
<path d="M796.2 249.18H948.6" stroke="#8c8c8c" stroke-width="1.1"/>
<path d="M793.7 249.18h3" stroke="#d0d0d0" stroke-width="1.3"/>
<text x="784.5" y="254.38" font-size="14.6" fill="#d2d2d2" textLength="8.4" lengthAdjust="spacingAndGlyphs">1</text>
<path d="M796.2 291.3H948.6" stroke="#8c8c8c" stroke-width="1.1"/>
<path d="M793.7 291.3h3" stroke="#d0d0d0" stroke-width="1.3"/>
<text x="784.5" y="296.5" font-size="14.6" fill="#d2d2d2" textLength="8.4" lengthAdjust="spacingAndGlyphs">0</text>
<path d="M796.2 333.43H948.6" stroke="#8c8c8c" stroke-width="1.1"/>
<path d="M793.7 333.43h3" stroke="#d0d0d0" stroke-width="1.3"/>
<text x="779.5" y="338.62" font-size="14.6" fill="#d2d2d2" textLength="13.4" lengthAdjust="spacingAndGlyphs">-1</text>
<path d="M796.2 375.55H948.6" stroke="#8c8c8c" stroke-width="1.1"/>
<path d="M793.7 375.55h3" stroke="#d0d0d0" stroke-width="1.3"/>
<text x="779.5" y="380.75" font-size="14.6" fill="#d2d2d2" textLength="13.4" lengthAdjust="spacingAndGlyphs">-2</text>
<path d="M796.2 417.68H948.6" stroke="#8c8c8c" stroke-width="1.1"/>
<path d="M793.7 417.68h3" stroke="#d0d0d0" stroke-width="1.3"/>
<text x="779.5" y="422.88" font-size="14.6" fill="#d2d2d2" textLength="13.4" lengthAdjust="spacingAndGlyphs">-3</text>
<path d="M793.7 459.3h3" stroke="#d0d0d0" stroke-width="1.3"/>
<text x="779.5" y="464.5" font-size="14.6" fill="#d2d2d2" textLength="13.4" lengthAdjust="spacingAndGlyphs">-4</text>
<rect x="796.2" y="122.3" width="152.4" height="337" fill="none" stroke="#a4a4a4" stroke-width="1.2"/>
<rect x="810" y="165.35" width="121.7" height="125.95" fill="url(#gY)" stroke="#000" stroke-width="1.1"/>
<text x="837.96" y="117.7" font-size="14" fill="#d2d2d2" textLength="48.08" lengthAdjust="spacingAndGlyphs">Delta H</text>
<!-- s_sw -->
<rect x="376" y="472.5" width="592" height="177.3" fill="#000"/>
<g clip-path="url(#cSw)">
<rect x="393" y="479" width="58" height="60" fill="#ebf1fd"/>
<rect x="393" y="538.3" width="58" height="57.5" fill="#f3f3f3"/>
<rect x="393.5" y="479.5" width="57" height="115.8" fill="none" stroke="#d4d4d4" stroke-width="1"/>
<rect x="394.5" y="480.5" width="55" height="113.8" fill="none" stroke="#ffffff" stroke-opacity=".5" stroke-width="1"/>
<text x="406.76" y="610.7" font-size="12.8" fill="#fff" textLength="31.08" lengthAdjust="spacingAndGlyphs">White</text>
<rect x="461" y="479" width="58" height="60" fill="#dde4f0"/>
<rect x="461" y="538.3" width="58" height="57.5" fill="#e6e6e6"/>
<rect x="461.5" y="479.5" width="57" height="115.8" fill="none" stroke="#d4d4d4" stroke-width="1"/>
<rect x="462.5" y="480.5" width="55" height="113.8" fill="none" stroke="#ffffff" stroke-opacity=".5" stroke-width="1"/>
<text x="468.67" y="610.7" font-size="12.8" fill="#fff" textLength="43.26" lengthAdjust="spacingAndGlyphs">Gray 80</text>
<rect x="529" y="479" width="58" height="60" fill="#c9d0dc"/>
<rect x="529" y="538.3" width="58" height="57.5" fill="#d1d1d1"/>
<rect x="529.5" y="479.5" width="57" height="115.8" fill="none" stroke="#d4d4d4" stroke-width="1"/>
<rect x="530.5" y="480.5" width="55" height="113.8" fill="none" stroke="#ffffff" stroke-opacity=".5" stroke-width="1"/>
<text x="536.67" y="610.7" font-size="12.8" fill="#fff" textLength="43.26" lengthAdjust="spacingAndGlyphs">Gray 65</text>
<rect x="597" y="479" width="58" height="60" fill="#b3b9c4"/>
<rect x="597" y="538.3" width="58" height="57.5" fill="#bababa"/>
<rect x="597.5" y="479.5" width="57" height="115.8" fill="none" stroke="#d4d4d4" stroke-width="1"/>
<rect x="598.5" y="480.5" width="55" height="113.8" fill="none" stroke="#ffffff" stroke-opacity=".5" stroke-width="1"/>
<text x="604.67" y="610.7" font-size="12.8" fill="#fff" textLength="43.26" lengthAdjust="spacingAndGlyphs">Gray 50</text>
<rect x="665" y="479" width="58" height="60" fill="#989da6"/>
<rect x="665" y="538.3" width="58" height="57.5" fill="#9e9e9e"/>
<rect x="665.5" y="479.5" width="57" height="115.8" fill="none" stroke="#d4d4d4" stroke-width="1"/>
<rect x="666.5" y="480.5" width="55" height="113.8" fill="none" stroke="#ffffff" stroke-opacity=".5" stroke-width="1"/>
<text x="672.67" y="610.7" font-size="12.8" fill="#fff" textLength="43.26" lengthAdjust="spacingAndGlyphs">Gray 35</text>
<rect x="733" y="479" width="58" height="60" fill="#040404"/>
<rect x="733" y="538.3" width="58" height="57.5" fill="#000000"/>
<rect x="733.5" y="479.5" width="57" height="115.8" fill="none" stroke="#d4d4d4" stroke-width="1"/>
<rect x="734.5" y="480.5" width="55" height="113.8" fill="none" stroke="#ffffff" stroke-opacity=".5" stroke-width="1"/>
<text x="747.43" y="610.7" font-size="12.8" fill="#fff" textLength="29.74" lengthAdjust="spacingAndGlyphs">Black</text>
<rect x="801" y="479" width="58" height="60" fill="#6e5142"/>
<rect x="801" y="538.3" width="58" height="57.5" fill="#745345"/>
<rect x="801.5" y="479.5" width="57" height="115.8" fill="none" stroke="#d4d4d4" stroke-width="1"/>
<rect x="802.5" y="480.5" width="55" height="113.8" fill="none" stroke="#ffffff" stroke-opacity=".5" stroke-width="1"/>
<text x="803.95" y="610.7" font-size="12.8" fill="#fff" textLength="52.71" lengthAdjust="spacingAndGlyphs">Dark Skin</text>
<rect x="869" y="479" width="58" height="60" fill="#b89584"/>
<rect x="869" y="538.3" width="58" height="57.5" fill="#c29784"/>
<rect x="869.5" y="479.5" width="57" height="115.8" fill="none" stroke="#d4d4d4" stroke-width="1"/>
<rect x="870.5" y="480.5" width="55" height="113.8" fill="none" stroke="#ffffff" stroke-opacity=".5" stroke-width="1"/>
<text x="871.6" y="610.7" font-size="12.8" fill="#fff" textLength="53.4" lengthAdjust="spacingAndGlyphs">Light Skin</text>
<rect x="937" y="479" width="58" height="60" fill="#5a7bb6"/>
<rect x="937" y="538.3" width="58" height="57.5" fill="#627b9e"/>
<rect x="937.5" y="479.5" width="57" height="115.8" fill="none" stroke="#d4d4d4" stroke-width="1"/>
<rect x="938.5" y="480.5" width="55" height="113.8" fill="none" stroke="#ffffff" stroke-opacity=".5" stroke-width="1"/>
<text x="942.31" y="610.7" font-size="12.8" fill="#fff" textLength="47.99" lengthAdjust="spacingAndGlyphs">Blue Sky</text>
</g>
<g transform="rotate(-90)"><text x="-521.9" y="389.3" font-size="12.6" fill="#fff" textLength="34.8" lengthAdjust="spacingAndGlyphs">Actual</text><text x="-587.6" y="389.3" font-size="12.6" fill="#fff" textLength="34.3" lengthAdjust="spacingAndGlyphs">Target</text></g>
<rect x="376" y="633.3" width="592" height="14.6" fill="#5c5c5c"/>
<rect x="377" y="634" width="13.3" height="13.3" rx="2.5" fill="#8e8e8e"/>
<path d="M386 636.6v8l-5.4-4z" fill="#333"/>
<rect x="954.5" y="634" width="12.5" height="13.3" rx="2.5" fill="#8e8e8e"/>
<path d="M958.6 636.6v8l5.4-4z" fill="#333"/>
<rect x="393.5" y="634.4" width="157.4" height="12.8" rx="6.4" fill="#3a3a3a"/>
<!-- s_cie -->
<rect x="974.4" y="91" width="692.2" height="557.4" fill="#1b1b1b"/>
<rect x="981.3" y="98" width="680.7" height="544.6" fill="#333333"/>
<rect x="1018.6" y="122" width="640" height="491.1" fill="#252525"/>
<g clip-path="url(#cLoc)"><rect x="1047.6" y="132.25" width="63.25" height="2.5" fill="url(#c0)"/><rect x="1039.85" y="134.25" width="94" height="2.5" fill="url(#c1)"/><rect x="1035.1" y="136.25" width="120.75" height="2.5" fill="url(#c2)"/><rect x="1031.85" y="138.25" width="141.5" height="2.5" fill="url(#c3)"/><rect x="1029.1" y="140.25" width="163.25" height="2.5" fill="url(#c4)"/><rect x="1027.35" y="142.25" width="183" height="2.5" fill="url(#c5)"/><rect x="1025.6" y="144.25" width="202.25" height="2.5" fill="url(#c6)"/><rect x="1024.6" y="146.25" width="220.75" height="2.5" fill="url(#c7)"/><rect x="1023.35" y="148.25" width="240.5" height="2.5" fill="url(#c8)"/><rect x="1022.35" y="150.25" width="258.75" height="2.5" fill="url(#c9)"/><rect x="1021.6" y="152.25" width="277.5" height="2.5" fill="url(#c10)"/><rect x="1021.1" y="154.25" width="294.25" height="2.5" fill="url(#c11)"/><rect x="1020.6" y="156.25" width="312.25" height="2.5" fill="url(#c12)"/><rect x="1020.1" y="158.25" width="329.5" height="2.5" fill="url(#c13)"/><rect x="1019.85" y="160.25" width="347.5" height="2.5" fill="url(#c14)"/><rect x="1019.6" y="162.25" width="366" height="2.5" fill="url(#c15)"/><rect x="1019.6" y="164.25" width="384.25" height="2.5" fill="url(#c16)"/><rect x="1019.35" y="166.25" width="401.75" height="2.5" fill="url(#c17)"/><rect x="1019.35" y="168.25" width="418.75" height="2.5" fill="url(#c18)"/><rect x="1019.35" y="170.25" width="435.5" height="2.5" fill="url(#c19)"/><rect x="1019.35" y="172.25" width="454" height="2.5" fill="url(#c20)"/><rect x="1019.35" y="174.25" width="471.25" height="2.5" fill="url(#c21)"/><rect x="1019.35" y="176.25" width="489.25" height="2.5" fill="url(#c22)"/><rect x="1019.6" y="178.25" width="505.75" height="2.5" fill="url(#c23)"/><rect x="1019.6" y="180.25" width="523.25" height="2.5" fill="url(#c24)"/><rect x="1019.85" y="182.25" width="541" height="2.5" fill="url(#c25)"/><rect x="1020.1" y="184.25" width="558" height="2.5" fill="url(#c26)"/><rect x="1020.6" y="186.25" width="575.75" height="2.5" fill="url(#c27)"/><rect x="1020.85" y="188.25" width="591.25" height="2.5" fill="url(#c28)"/><rect x="1021.1" y="190.25" width="609.25" height="2.5" fill="url(#c29)"/><rect x="1021.35" y="192.25" width="627.75" height="2.5" fill="url(#c30)"/><rect x="1021.6" y="194.25" width="637" height="2.5" fill="url(#c31)"/><rect x="1022.1" y="196.25" width="636.5" height="2.5" fill="url(#c32)"/><rect x="1022.6" y="198.25" width="636" height="2.5" fill="url(#c33)"/><rect x="1022.85" y="200.25" width="635.75" height="2.5" fill="url(#c34)"/><rect x="1023.35" y="202.25" width="635.25" height="2.5" fill="url(#c35)"/><rect x="1023.85" y="204.25" width="634.75" height="2.5" fill="url(#c36)"/><rect x="1024.35" y="206.25" width="634.25" height="2.5" fill="url(#c37)"/><rect x="1024.85" y="208.25" width="633.75" height="2.5" fill="url(#c38)"/><rect x="1025.35" y="210.25" width="633.25" height="2.5" fill="url(#c39)"/><rect x="1025.85" y="212.25" width="632.75" height="2.5" fill="url(#c40)"/><rect x="1026.35" y="214.25" width="632.25" height="2.5" fill="url(#c41)"/><rect x="1027.1" y="216.25" width="631.5" height="2.5" fill="url(#c42)"/><rect x="1027.6" y="218.25" width="631" height="2.5" fill="url(#c43)"/><rect x="1028.1" y="220.25" width="630.5" height="2.5" fill="url(#c44)"/><rect x="1028.85" y="222.25" width="629.75" height="2.5" fill="url(#c45)"/><rect x="1029.35" y="224.25" width="628.25" height="2.5" fill="url(#c46)"/><rect x="1029.85" y="226.25" width="625.75" height="2.5" fill="url(#c47)"/><rect x="1030.35" y="228.25" width="623.5" height="2.5" fill="url(#c48)"/><rect x="1031.1" y="230.25" width="620.75" height="2.5" fill="url(#c49)"/><rect x="1031.85" y="232.25" width="618" height="2.5" fill="url(#c50)"/><rect x="1032.35" y="234.25" width="615.5" height="2.5" fill="url(#c51)"/><rect x="1033.1" y="236.25" width="612.75" height="2.5" fill="url(#c52)"/><rect x="1033.85" y="238.25" width="610.25" height="2.5" fill="url(#c53)"/><rect x="1034.35" y="240.25" width="607.75" height="2.5" fill="url(#c54)"/><rect x="1035.1" y="242.25" width="605" height="2.5" fill="url(#c55)"/><rect x="1035.85" y="244.25" width="602.25" height="2.5" fill="url(#c56)"/><rect x="1036.6" y="246.25" width="599.5" height="2.5" fill="url(#c57)"/><rect x="1037.35" y="248.25" width="596.75" height="2.5" fill="url(#c58)"/><rect x="1038.1" y="250.25" width="594.25" height="2.5" fill="url(#c59)"/><rect x="1038.85" y="252.25" width="591.5" height="2.5" fill="url(#c60)"/><rect x="1039.6" y="254.25" width="588.75" height="2.5" fill="url(#c61)"/><rect x="1040.35" y="256.25" width="586" height="2.5" fill="url(#c62)"/><rect x="1041.1" y="258.25" width="583.25" height="2.5" fill="url(#c63)"/><rect x="1041.85" y="260.25" width="580.5" height="2.5" fill="url(#c64)"/><rect x="1042.6" y="262.25" width="578" height="2.5" fill="url(#c65)"/><rect x="1043.35" y="264.25" width="575.25" height="2.5" fill="url(#c66)"/><rect x="1044.1" y="266.25" width="572.5" height="2.5" fill="url(#c67)"/><rect x="1044.85" y="268.25" width="569.75" height="2.5" fill="url(#c68)"/><rect x="1045.85" y="270.25" width="566.75" height="2.5" fill="url(#c69)"/><rect x="1046.6" y="272.25" width="564.25" height="2.5" fill="url(#c70)"/><rect x="1047.35" y="274.25" width="561.5" height="2.5" fill="url(#c71)"/><rect x="1048.35" y="276.25" width="558.5" height="2.5" fill="url(#c72)"/><rect x="1049.1" y="278.25" width="555.75" height="2.5" fill="url(#c73)"/><rect x="1049.85" y="280.25" width="553" height="2.5" fill="url(#c74)"/><rect x="1050.6" y="282.25" width="550.25" height="2.5" fill="url(#c75)"/><rect x="1051.35" y="284.25" width="547.75" height="2.5" fill="url(#c76)"/><rect x="1052.1" y="286.25" width="545" height="2.5" fill="url(#c77)"/><rect x="1053.1" y="288.25" width="542" height="2.5" fill="url(#c78)"/><rect x="1053.85" y="290.25" width="539.25" height="2.5" fill="url(#c79)"/><rect x="1054.85" y="292.25" width="536.25" height="2.5" fill="url(#c80)"/><rect x="1055.6" y="294.25" width="533.5" height="2.5" fill="url(#c81)"/><rect x="1056.6" y="296.25" width="530.75" height="2.5" fill="url(#c82)"/><rect x="1057.35" y="298.25" width="528" height="2.5" fill="url(#c83)"/><rect x="1058.35" y="300.25" width="525" height="2.5" fill="url(#c84)"/><rect x="1059.35" y="302.25" width="522" height="2.5" fill="url(#c85)"/><rect x="1060.35" y="304.25" width="519" height="2.5" fill="url(#c86)"/><rect x="1061.1" y="306.25" width="516.25" height="2.5" fill="url(#c87)"/><rect x="1062.1" y="308.25" width="513.5" height="2.5" fill="url(#c88)"/><rect x="1063.1" y="310.25" width="510.5" height="2.5" fill="url(#c89)"/><rect x="1064.1" y="312.25" width="507.5" height="2.5" fill="url(#c90)"/><rect x="1064.85" y="314.25" width="504.75" height="2.5" fill="url(#c91)"/><rect x="1065.85" y="316.25" width="501.75" height="2.5" fill="url(#c92)"/><rect x="1066.85" y="318.25" width="499" height="2.5" fill="url(#c93)"/><rect x="1067.85" y="320.25" width="496" height="2.5" fill="url(#c94)"/><rect x="1068.85" y="322.25" width="493" height="2.5" fill="url(#c95)"/><rect x="1069.85" y="324.25" width="490" height="2.5" fill="url(#c96)"/><rect x="1070.85" y="326.25" width="487" height="2.5" fill="url(#c97)"/><rect x="1071.85" y="328.25" width="484" height="2.5" fill="url(#c98)"/><rect x="1072.85" y="330.25" width="481.25" height="2.5" fill="url(#c99)"/><rect x="1073.85" y="332.25" width="478.25" height="2.5" fill="url(#c100)"/><rect x="1074.85" y="334.25" width="475.25" height="2.5" fill="url(#c101)"/><rect x="1075.85" y="336.25" width="472.25" height="2.5" fill="url(#c102)"/><rect x="1076.85" y="338.25" width="469.25" height="2.5" fill="url(#c103)"/><rect x="1077.85" y="340.25" width="466.25" height="2.5" fill="url(#c104)"/><rect x="1078.85" y="342.25" width="463.5" height="2.5" fill="url(#c105)"/><rect x="1079.85" y="344.25" width="460.5" height="2.5" fill="url(#c106)"/><rect x="1081.1" y="346.25" width="457.25" height="2.5" fill="url(#c107)"/><rect x="1082.1" y="348.25" width="454.25" height="2.5" fill="url(#c108)"/><rect x="1083.1" y="350.25" width="451.25" height="2.5" fill="url(#c109)"/><rect x="1084.35" y="352.25" width="448.25" height="2.5" fill="url(#c110)"/><rect x="1085.35" y="354.25" width="445.25" height="2.5" fill="url(#c111)"/><rect x="1086.6" y="356.25" width="442" height="2.5" fill="url(#c112)"/><rect x="1087.6" y="358.25" width="439" height="2.5" fill="url(#c113)"/><rect x="1088.85" y="360.25" width="435.75" height="2.5" fill="url(#c114)"/><rect x="1089.85" y="362.25" width="432.75" height="2.5" fill="url(#c115)"/><rect x="1090.85" y="364.25" width="430" height="2.5" fill="url(#c116)"/><rect x="1092.1" y="366.25" width="426.75" height="2.5" fill="url(#c117)"/><rect x="1093.1" y="368.25" width="423.75" height="2.5" fill="url(#c118)"/><rect x="1094.35" y="370.25" width="420.5" height="2.5" fill="url(#c119)"/><rect x="1095.6" y="372.25" width="417.25" height="2.5" fill="url(#c120)"/><rect x="1096.6" y="374.25" width="414.25" height="2.5" fill="url(#c121)"/><rect x="1097.85" y="376.25" width="411.25" height="2.5" fill="url(#c122)"/><rect x="1098.85" y="378.25" width="408.25" height="2.5" fill="url(#c123)"/><rect x="1100.1" y="380.25" width="405" height="2.5" fill="url(#c124)"/><rect x="1101.35" y="382.25" width="401.75" height="2.5" fill="url(#c125)"/><rect x="1102.6" y="384.25" width="398.5" height="2.5" fill="url(#c126)"/><rect x="1103.6" y="386.25" width="395.75" height="2.5" fill="url(#c127)"/><rect x="1104.85" y="388.25" width="392.5" height="2.5" fill="url(#c128)"/><rect x="1106.1" y="390.25" width="389.25" height="2.5" fill="url(#c129)"/><rect x="1107.35" y="392.25" width="386" height="2.5" fill="url(#c130)"/><rect x="1108.6" y="394.25" width="382.75" height="2.5" fill="url(#c131)"/><rect x="1109.85" y="396.25" width="379.5" height="2.5" fill="url(#c132)"/><rect x="1111.1" y="398.25" width="376.5" height="2.5" fill="url(#c133)"/><rect x="1112.35" y="400.25" width="373.25" height="2.5" fill="url(#c134)"/><rect x="1113.35" y="402.25" width="370.25" height="2.5" fill="url(#c135)"/><rect x="1114.6" y="404.25" width="367" height="2.5" fill="url(#c136)"/><rect x="1115.85" y="406.25" width="363.75" height="2.5" fill="url(#c137)"/><rect x="1117.1" y="408.25" width="360.5" height="2.5" fill="url(#c138)"/><rect x="1118.35" y="410.25" width="357.5" height="2.5" fill="url(#c139)"/><rect x="1119.35" y="412.25" width="354.5" height="2.5" fill="url(#c140)"/><rect x="1120.6" y="414.25" width="351.25" height="2.5" fill="url(#c141)"/><rect x="1121.85" y="416.25" width="348" height="2.5" fill="url(#c142)"/><rect x="1123.1" y="418.25" width="344.75" height="2.5" fill="url(#c143)"/><rect x="1124.35" y="420.25" width="341.5" height="2.5" fill="url(#c144)"/><rect x="1125.6" y="422.25" width="338.5" height="2.5" fill="url(#c145)"/><rect x="1127.1" y="424.25" width="335" height="2.5" fill="url(#c146)"/><rect x="1128.35" y="426.25" width="331.75" height="2.5" fill="url(#c147)"/><rect x="1129.6" y="428.25" width="328.5" height="2.5" fill="url(#c148)"/><rect x="1130.85" y="430.25" width="325.25" height="2.5" fill="url(#c149)"/><rect x="1132.1" y="432.25" width="322.25" height="2.5" fill="url(#c150)"/><rect x="1133.35" y="434.25" width="319" height="2.5" fill="url(#c151)"/><rect x="1134.6" y="436.25" width="315.75" height="2.5" fill="url(#c152)"/><rect x="1135.85" y="438.25" width="312.5" height="2.5" fill="url(#c153)"/><rect x="1137.35" y="440.25" width="309" height="2.5" fill="url(#c154)"/><rect x="1138.6" y="442.25" width="305.75" height="2.5" fill="url(#c155)"/><rect x="1140.1" y="444.25" width="302.5" height="2.5" fill="url(#c156)"/><rect x="1141.35" y="446.25" width="299.25" height="2.5" fill="url(#c157)"/><rect x="1142.6" y="448.25" width="296" height="2.5" fill="url(#c158)"/><rect x="1144.1" y="450.25" width="292.5" height="2.5" fill="url(#c159)"/><rect x="1145.35" y="452.25" width="289.25" height="2.5" fill="url(#c160)"/><rect x="1146.6" y="454.25" width="286" height="2.5" fill="url(#c161)"/><rect x="1148.1" y="456.25" width="282.75" height="2.5" fill="url(#c162)"/><rect x="1149.6" y="458.25" width="279.25" height="2.5" fill="url(#c163)"/><rect x="1151.1" y="460.25" width="275.75" height="2.5" fill="url(#c164)"/><rect x="1152.6" y="462.25" width="272.25" height="2.5" fill="url(#c165)"/><rect x="1153.85" y="464.25" width="269" height="2.5" fill="url(#c166)"/><rect x="1155.35" y="466.25" width="265.75" height="2.5" fill="url(#c167)"/><rect x="1156.85" y="468.25" width="262.25" height="2.5" fill="url(#c168)"/><rect x="1158.1" y="470.25" width="259" height="2.5" fill="url(#c169)"/><rect x="1159.6" y="472.25" width="255.5" height="2.5" fill="url(#c170)"/><rect x="1161.1" y="474.25" width="252" height="2.5" fill="url(#c171)"/><rect x="1162.6" y="476.25" width="248.5" height="2.5" fill="url(#c172)"/><rect x="1164.1" y="478.25" width="245.25" height="2.5" fill="url(#c173)"/><rect x="1165.6" y="480.25" width="241.75" height="2.5" fill="url(#c174)"/><rect x="1167.1" y="482.25" width="238.25" height="2.5" fill="url(#c175)"/><rect x="1168.6" y="484.25" width="234.75" height="2.5" fill="url(#c176)"/><rect x="1170.1" y="486.25" width="231.25" height="2.5" fill="url(#c177)"/><rect x="1171.6" y="488.25" width="227.75" height="2.5" fill="url(#c178)"/><rect x="1173.1" y="490.25" width="224.5" height="2.5" fill="url(#c179)"/><rect x="1174.85" y="492.25" width="220.75" height="2.5" fill="url(#c180)"/><rect x="1176.35" y="494.25" width="217.25" height="2.5" fill="url(#c181)"/><rect x="1177.85" y="496.25" width="213.75" height="2.5" fill="url(#c182)"/><rect x="1179.6" y="498.25" width="210" height="2.5" fill="url(#c183)"/><rect x="1181.35" y="500.25" width="206.5" height="2.5" fill="url(#c184)"/><rect x="1183.1" y="502.25" width="202.75" height="2.5" fill="url(#c185)"/><rect x="1184.6" y="504.25" width="199.25" height="2.5" fill="url(#c186)"/><rect x="1186.35" y="506.25" width="195.5" height="2.5" fill="url(#c187)"/><rect x="1187.85" y="508.25" width="192" height="2.5" fill="url(#c188)"/><rect x="1189.6" y="510.25" width="188.25" height="2.5" fill="url(#c189)"/><rect x="1191.35" y="512.25" width="184.75" height="2.5" fill="url(#c190)"/><rect x="1193.1" y="514.25" width="181" height="2.5" fill="url(#c191)"/><rect x="1194.85" y="516.25" width="177.25" height="2.5" fill="url(#c192)"/><rect x="1196.6" y="518.25" width="173.5" height="2.5" fill="url(#c193)"/><rect x="1198.6" y="520.25" width="169.5" height="2.5" fill="url(#c194)"/><rect x="1200.35" y="522.25" width="165.75" height="2.5" fill="url(#c195)"/><rect x="1202.35" y="524.25" width="162" height="2.5" fill="url(#c196)"/><rect x="1204.1" y="526.25" width="158.25" height="2.5" fill="url(#c197)"/><rect x="1205.85" y="528.25" width="154.5" height="2.5" fill="url(#c198)"/><rect x="1207.85" y="530.25" width="150.5" height="2.5" fill="url(#c199)"/><rect x="1209.85" y="532.25" width="146.5" height="2.5" fill="url(#c200)"/><rect x="1212.1" y="534.25" width="142.25" height="2.5" fill="url(#c201)"/><rect x="1214.1" y="536.25" width="138.5" height="2.5" fill="url(#c202)"/><rect x="1216.35" y="538.25" width="134.25" height="2.5" fill="url(#c203)"/><rect x="1218.35" y="540.25" width="130.25" height="2.5" fill="url(#c204)"/><rect x="1220.6" y="542.25" width="126" height="2.5" fill="url(#c205)"/><rect x="1222.6" y="544.25" width="122" height="2.5" fill="url(#c206)"/><rect x="1224.85" y="546.25" width="118" height="2.5" fill="url(#c207)"/><rect x="1227.1" y="548.25" width="113.75" height="2.5" fill="url(#c208)"/><rect x="1229.35" y="550.25" width="109.5" height="2.5" fill="url(#c209)"/><rect x="1231.6" y="552.25" width="105.25" height="2.5" fill="url(#c210)"/><rect x="1233.85" y="554.25" width="101" height="2.5" fill="url(#c211)"/><rect x="1236.35" y="556.25" width="96.5" height="2.5" fill="url(#c212)"/><rect x="1238.85" y="558.25" width="92.25" height="2.5" fill="url(#c213)"/><rect x="1241.1" y="560.25" width="88" height="2.5" fill="url(#c214)"/><rect x="1243.6" y="562.25" width="83.5" height="2.5" fill="url(#c215)"/><rect x="1246.1" y="564.25" width="79" height="2.5" fill="url(#c216)"/><rect x="1248.6" y="566.25" width="74.5" height="2.5" fill="url(#c217)"/><rect x="1250.85" y="568.25" width="70.25" height="2.5" fill="url(#c218)"/><rect x="1253.35" y="570.25" width="66" height="2.5" fill="url(#c219)"/><rect x="1255.85" y="572.25" width="61.5" height="2.5" fill="url(#c220)"/><rect x="1258.35" y="574.25" width="57" height="2.5" fill="url(#c221)"/><rect x="1260.6" y="576.25" width="52.75" height="2.5" fill="url(#c222)"/><rect x="1263.1" y="578.25" width="48.25" height="2.5" fill="url(#c223)"/><rect x="1265.6" y="580.25" width="44" height="2.5" fill="url(#c224)"/><rect x="1267.85" y="582.25" width="39.75" height="2.5" fill="url(#c225)"/><rect x="1270.35" y="584.25" width="35.25" height="2.5" fill="url(#c226)"/><rect x="1272.6" y="586.25" width="31" height="2.5" fill="url(#c227)"/><rect x="1275.1" y="588.25" width="26.5" height="2.5" fill="url(#c228)"/><rect x="1277.35" y="590.25" width="22.25" height="2.5" fill="url(#c229)"/><rect x="1280.1" y="592.25" width="17.75" height="2.5" fill="url(#c230)"/><rect x="1282.6" y="594.25" width="13.25" height="2.5" fill="url(#c231)"/><rect x="1285.6" y="596.25" width="8.25" height="2.25" fill="url(#c232)"/></g>
<g clip-path="url(#cTri)"><rect x="1150.85" y="152" width="15.5" height="2.5" fill="url(#t0)"/><rect x="1151.1" y="154" width="36.75" height="2.5" fill="url(#t1)"/><rect x="1151.35" y="156" width="58" height="2.5" fill="url(#t2)"/><rect x="1151.85" y="158" width="79" height="2.5" fill="url(#t3)"/><rect x="1152.1" y="160" width="100.25" height="2.5" fill="url(#t4)"/><rect x="1152.35" y="162" width="121.5" height="2.5" fill="url(#t5)"/><rect x="1152.85" y="164" width="142.5" height="2.5" fill="url(#t6)"/><rect x="1153.1" y="166" width="163.75" height="2.5" fill="url(#t7)"/><rect x="1153.35" y="168" width="185" height="2.5" fill="url(#t8)"/><rect x="1153.6" y="170" width="206.25" height="2.5" fill="url(#t9)"/><rect x="1154.1" y="172" width="227.25" height="2.5" fill="url(#t10)"/><rect x="1154.35" y="174" width="248.5" height="2.5" fill="url(#t11)"/><rect x="1154.6" y="176" width="269.75" height="2.5" fill="url(#t12)"/><rect x="1155.1" y="178" width="290.75" height="2.5" fill="url(#t13)"/><rect x="1155.35" y="180" width="312" height="2.5" fill="url(#t14)"/><rect x="1155.6" y="182" width="333.25" height="2.5" fill="url(#t15)"/><rect x="1156.1" y="184" width="343.5" height="2.5" fill="url(#t16)"/><rect x="1156.35" y="186" width="342" height="2.5" fill="url(#t17)"/><rect x="1156.6" y="188" width="339.75" height="2.5" fill="url(#t18)"/><rect x="1156.85" y="190" width="337.5" height="2.5" fill="url(#t19)"/><rect x="1157.35" y="192" width="335" height="2.5" fill="url(#t20)"/><rect x="1157.6" y="194" width="333" height="2.5" fill="url(#t21)"/><rect x="1157.85" y="196" width="330.75" height="2.5" fill="url(#t22)"/><rect x="1158.35" y="198" width="328.25" height="2.5" fill="url(#t23)"/><rect x="1158.6" y="200" width="326" height="2.5" fill="url(#t24)"/><rect x="1158.85" y="202" width="323.75" height="2.5" fill="url(#t25)"/><rect x="1159.35" y="204" width="321.25" height="2.5" fill="url(#t26)"/><rect x="1159.6" y="206" width="319" height="2.5" fill="url(#t27)"/><rect x="1159.85" y="208" width="316.75" height="2.5" fill="url(#t28)"/><rect x="1160.35" y="210" width="314.25" height="2.5" fill="url(#t29)"/><rect x="1160.6" y="212" width="312.25" height="2.5" fill="url(#t30)"/><rect x="1160.85" y="214" width="310" height="2.5" fill="url(#t31)"/><rect x="1161.1" y="216" width="307.75" height="2.5" fill="url(#t32)"/><rect x="1161.6" y="218" width="305.25" height="2.5" fill="url(#t33)"/><rect x="1161.85" y="220" width="303" height="2.5" fill="url(#t34)"/><rect x="1162.1" y="222" width="300.75" height="2.5" fill="url(#t35)"/><rect x="1162.6" y="224" width="298.25" height="2.5" fill="url(#t36)"/><rect x="1162.85" y="226" width="296" height="2.5" fill="url(#t37)"/><rect x="1163.1" y="228" width="293.75" height="2.5" fill="url(#t38)"/><rect x="1163.6" y="230" width="291.5" height="2.5" fill="url(#t39)"/><rect x="1163.85" y="232" width="289.25" height="2.5" fill="url(#t40)"/><rect x="1164.1" y="234" width="287" height="2.5" fill="url(#t41)"/><rect x="1164.35" y="236" width="284.75" height="2.5" fill="url(#t42)"/><rect x="1164.85" y="238" width="282.25" height="2.5" fill="url(#t43)"/><rect x="1165.1" y="240" width="280" height="2.5" fill="url(#t44)"/><rect x="1165.35" y="242" width="277.75" height="2.5" fill="url(#t45)"/><rect x="1165.85" y="244" width="275.25" height="2.5" fill="url(#t46)"/><rect x="1166.1" y="246" width="273.25" height="2.5" fill="url(#t47)"/><rect x="1166.35" y="248" width="271" height="2.5" fill="url(#t48)"/><rect x="1166.85" y="250" width="268.5" height="2.5" fill="url(#t49)"/><rect x="1167.1" y="252" width="266.25" height="2.5" fill="url(#t50)"/><rect x="1167.35" y="254" width="264" height="2.5" fill="url(#t51)"/><rect x="1167.85" y="256" width="261.5" height="2.5" fill="url(#t52)"/><rect x="1168.1" y="258" width="259.25" height="2.5" fill="url(#t53)"/><rect x="1168.35" y="260" width="257" height="2.5" fill="url(#t54)"/><rect x="1168.6" y="262" width="254.75" height="2.5" fill="url(#t55)"/><rect x="1169.1" y="264" width="252.5" height="2.5" fill="url(#t56)"/><rect x="1169.35" y="266" width="250.25" height="2.5" fill="url(#t57)"/><rect x="1169.6" y="268" width="248" height="2.5" fill="url(#t58)"/><rect x="1170.1" y="270" width="245.5" height="2.5" fill="url(#t59)"/><rect x="1170.35" y="272" width="243.25" height="2.5" fill="url(#t60)"/><rect x="1170.6" y="274" width="241" height="2.5" fill="url(#t61)"/><rect x="1171.1" y="276" width="238.5" height="2.5" fill="url(#t62)"/><rect x="1171.35" y="278" width="236.25" height="2.5" fill="url(#t63)"/><rect x="1171.6" y="280" width="234" height="2.5" fill="url(#t64)"/><rect x="1171.85" y="282" width="232" height="2.5" fill="url(#t65)"/><rect x="1172.35" y="284" width="229.5" height="2.5" fill="url(#t66)"/><rect x="1172.6" y="286" width="227.25" height="2.5" fill="url(#t67)"/><rect x="1172.85" y="288" width="225" height="2.5" fill="url(#t68)"/><rect x="1173.35" y="290" width="222.5" height="2.5" fill="url(#t69)"/><rect x="1173.6" y="292" width="220.25" height="2.5" fill="url(#t70)"/><rect x="1173.85" y="294" width="218" height="2.5" fill="url(#t71)"/><rect x="1174.35" y="296" width="215.5" height="2.5" fill="url(#t72)"/><rect x="1174.6" y="298" width="213.25" height="2.5" fill="url(#t73)"/><rect x="1174.85" y="300" width="211.25" height="2.5" fill="url(#t74)"/><rect x="1175.35" y="302" width="208.75" height="2.5" fill="url(#t75)"/><rect x="1175.6" y="304" width="206.5" height="2.5" fill="url(#t76)"/><rect x="1175.85" y="306" width="204.25" height="2.5" fill="url(#t77)"/><rect x="1176.1" y="308" width="202" height="2.5" fill="url(#t78)"/><rect x="1176.6" y="310" width="199.5" height="2.5" fill="url(#t79)"/><rect x="1176.85" y="312" width="197.25" height="2.5" fill="url(#t80)"/><rect x="1177.1" y="314" width="195" height="2.5" fill="url(#t81)"/><rect x="1177.6" y="316" width="192.75" height="2.5" fill="url(#t82)"/><rect x="1177.85" y="318" width="190.5" height="2.5" fill="url(#t83)"/><rect x="1178.1" y="320" width="188.25" height="2.5" fill="url(#t84)"/><rect x="1178.6" y="322" width="185.75" height="2.5" fill="url(#t85)"/><rect x="1178.85" y="324" width="183.5" height="2.5" fill="url(#t86)"/><rect x="1179.1" y="326" width="181.25" height="2.5" fill="url(#t87)"/><rect x="1179.6" y="328" width="178.75" height="2.5" fill="url(#t88)"/><rect x="1179.85" y="330" width="176.5" height="2.5" fill="url(#t89)"/><rect x="1180.1" y="332" width="174.25" height="2.5" fill="url(#t90)"/><rect x="1180.35" y="334" width="172.25" height="2.5" fill="url(#t91)"/><rect x="1180.85" y="336" width="169.75" height="2.5" fill="url(#t92)"/><rect x="1181.1" y="338" width="167.5" height="2.5" fill="url(#t93)"/><rect x="1181.35" y="340" width="165.25" height="2.5" fill="url(#t94)"/><rect x="1181.85" y="342" width="162.75" height="2.5" fill="url(#t95)"/><rect x="1182.1" y="344" width="160.5" height="2.5" fill="url(#t96)"/><rect x="1182.35" y="346" width="158.25" height="2.5" fill="url(#t97)"/><rect x="1182.85" y="348" width="155.75" height="2.5" fill="url(#t98)"/><rect x="1183.1" y="350" width="153.5" height="2.5" fill="url(#t99)"/><rect x="1183.35" y="352" width="151.5" height="2.5" fill="url(#t100)"/><rect x="1183.6" y="354" width="149.25" height="2.5" fill="url(#t101)"/><rect x="1184.1" y="356" width="146.75" height="2.5" fill="url(#t102)"/><rect x="1184.35" y="358" width="144.5" height="2.5" fill="url(#t103)"/><rect x="1184.6" y="360" width="142.25" height="2.5" fill="url(#t104)"/><rect x="1185.1" y="362" width="139.75" height="2.5" fill="url(#t105)"/><rect x="1185.35" y="364" width="137.5" height="2.5" fill="url(#t106)"/><rect x="1185.6" y="366" width="135.25" height="2.5" fill="url(#t107)"/><rect x="1186.1" y="368" width="132.75" height="2.5" fill="url(#t108)"/><rect x="1186.35" y="370" width="130.75" height="2.5" fill="url(#t109)"/><rect x="1186.6" y="372" width="128.5" height="2.5" fill="url(#t110)"/><rect x="1187.1" y="374" width="126" height="2.5" fill="url(#t111)"/><rect x="1187.35" y="376" width="123.75" height="2.5" fill="url(#t112)"/><rect x="1187.6" y="378" width="121.5" height="2.5" fill="url(#t113)"/><rect x="1187.85" y="380" width="119.25" height="2.5" fill="url(#t114)"/><rect x="1188.35" y="382" width="116.75" height="2.5" fill="url(#t115)"/><rect x="1188.6" y="384" width="114.5" height="2.5" fill="url(#t116)"/><rect x="1188.85" y="386" width="112.5" height="2.5" fill="url(#t117)"/><rect x="1189.35" y="388" width="110" height="2.5" fill="url(#t118)"/><rect x="1189.6" y="390" width="107.75" height="2.5" fill="url(#t119)"/><rect x="1189.85" y="392" width="105.5" height="2.5" fill="url(#t120)"/><rect x="1190.35" y="394" width="103" height="2.5" fill="url(#t121)"/><rect x="1190.6" y="396" width="100.75" height="2.5" fill="url(#t122)"/><rect x="1190.85" y="398" width="98.5" height="2.5" fill="url(#t123)"/><rect x="1191.1" y="400" width="96.25" height="2.5" fill="url(#t124)"/><rect x="1191.6" y="402" width="93.75" height="2.5" fill="url(#t125)"/><rect x="1191.85" y="404" width="91.75" height="2.5" fill="url(#t126)"/><rect x="1192.1" y="406" width="89.5" height="2.5" fill="url(#t127)"/><rect x="1192.6" y="408" width="87" height="2.5" fill="url(#t128)"/><rect x="1192.85" y="410" width="84.75" height="2.5" fill="url(#t129)"/><rect x="1193.1" y="412" width="82.5" height="2.5" fill="url(#t130)"/><rect x="1193.6" y="414" width="80" height="2.5" fill="url(#t131)"/><rect x="1193.85" y="416" width="77.75" height="2.5" fill="url(#t132)"/><rect x="1194.1" y="418" width="75.5" height="2.5" fill="url(#t133)"/><rect x="1194.6" y="420" width="73" height="2.5" fill="url(#t134)"/><rect x="1194.85" y="422" width="71" height="2.5" fill="url(#t135)"/><rect x="1195.1" y="424" width="68.75" height="2.5" fill="url(#t136)"/><rect x="1195.35" y="426" width="66.5" height="2.5" fill="url(#t137)"/><rect x="1195.85" y="428" width="64" height="2.5" fill="url(#t138)"/><rect x="1196.1" y="430" width="61.75" height="2.5" fill="url(#t139)"/><rect x="1196.35" y="432" width="59.5" height="2.5" fill="url(#t140)"/><rect x="1196.85" y="434" width="57" height="2.5" fill="url(#t141)"/><rect x="1197.1" y="436" width="54.75" height="2.5" fill="url(#t142)"/><rect x="1197.35" y="438" width="52.5" height="2.5" fill="url(#t143)"/><rect x="1197.85" y="440" width="50.25" height="2.5" fill="url(#t144)"/><rect x="1198.1" y="442" width="48" height="2.5" fill="url(#t145)"/><rect x="1198.35" y="444" width="45.75" height="2.5" fill="url(#t146)"/><rect x="1198.85" y="446" width="43.25" height="2.5" fill="url(#t147)"/><rect x="1199.1" y="448" width="41" height="2.5" fill="url(#t148)"/><rect x="1199.35" y="450" width="38.75" height="2.5" fill="url(#t149)"/><rect x="1199.6" y="452" width="36.5" height="2.5" fill="url(#t150)"/><rect x="1200.1" y="454" width="34" height="2.5" fill="url(#t151)"/><rect x="1200.35" y="456" width="32" height="2.5" fill="url(#t152)"/><rect x="1200.6" y="458" width="29.75" height="2.5" fill="url(#t153)"/><rect x="1201.1" y="460" width="27.25" height="2.5" fill="url(#t154)"/><rect x="1201.35" y="462" width="25" height="2.5" fill="url(#t155)"/><rect x="1201.6" y="464" width="22.75" height="2.5" fill="url(#t156)"/><rect x="1202.1" y="466" width="20.25" height="2.5" fill="url(#t157)"/><rect x="1202.35" y="468" width="18" height="2.5" fill="url(#t158)"/><rect x="1202.6" y="470" width="15.75" height="2.5" fill="url(#t159)"/><rect x="1202.85" y="472" width="13.5" height="2.5" fill="url(#t160)"/><rect x="1203.35" y="474" width="11.25" height="2.5" fill="url(#t161)"/><rect x="1203.6" y="476" width="9" height="2.5" fill="url(#t162)"/><rect x="1203.85" y="478" width="6.75" height="2.5" fill="url(#t163)"/><rect x="1204.35" y="480" width="4.25" height="2.5" fill="url(#t164)"/><rect x="1204.6" y="482" width="2" height="1" fill="url(#t165)"/></g>
<!-- s_cie2 -->
<rect x="1145" y="145.1" width="13" height="13" fill="none" stroke="#fff" stroke-opacity=".85" stroke-width="1.6"/>
<rect x="1169" y="169" width="13" height="13" fill="none" stroke="#fff" stroke-opacity=".85" stroke-width="1.6"/>
<rect x="1209" y="160.9" width="13" height="13" fill="none" stroke="#fff" stroke-opacity=".85" stroke-width="1.6"/>
<rect x="1205.9" y="183" width="13" height="13" fill="none" stroke="#fff" stroke-opacity=".85" stroke-width="1.6"/>
<rect x="1229.3" y="153" width="13" height="13" fill="none" stroke="#fff" stroke-opacity=".85" stroke-width="1.6"/>
<rect x="1255.9" y="156.9" width="13" height="13" fill="none" stroke="#fff" stroke-opacity=".85" stroke-width="1.6"/>
<rect x="1287.9" y="163.9" width="13" height="13" fill="none" stroke="#fff" stroke-opacity=".85" stroke-width="1.6"/>
<rect x="1331" y="167.9" width="13" height="13" fill="none" stroke="#fff" stroke-opacity=".85" stroke-width="1.6"/>
<rect x="1271.1" y="197" width="13" height="13" fill="none" stroke="#fff" stroke-opacity=".85" stroke-width="1.6"/>
<rect x="1259.8" y="203.1" width="13" height="13" fill="none" stroke="#fff" stroke-opacity=".85" stroke-width="1.6"/>
<rect x="1350.1" y="210" width="13" height="13" fill="none" stroke="#fff" stroke-opacity=".85" stroke-width="1.6"/>
<rect x="1411" y="198" width="13" height="13" fill="none" stroke="#fff" stroke-opacity=".85" stroke-width="1.6"/>
<rect x="1491.9" y="177.4" width="13" height="13" fill="none" stroke="#fff" stroke-opacity=".85" stroke-width="1.6"/>
<rect x="1175.9" y="213.9" width="13" height="13" fill="none" stroke="#fff" stroke-opacity=".85" stroke-width="1.6"/>
<rect x="1159.9" y="233" width="13" height="13" fill="none" stroke="#fff" stroke-opacity=".85" stroke-width="1.6"/>
<rect x="1164.9" y="265" width="13" height="13" fill="none" stroke="#fff" stroke-opacity=".85" stroke-width="1.6"/>
<rect x="1199.1" y="261.9" width="13" height="13" fill="none" stroke="#fff" stroke-opacity=".85" stroke-width="1.6"/>
<rect x="1219.5" y="266.9" width="13" height="13" fill="none" stroke="#fff" stroke-opacity=".85" stroke-width="1.6"/>
<rect x="1317.5" y="256" width="13" height="13" fill="none" stroke="#fff" stroke-opacity=".85" stroke-width="1.6"/>
<rect x="1255" y="284.9" width="13" height="13" fill="none" stroke="#fff" stroke-opacity=".85" stroke-width="1.6"/>
<rect x="1201.9" y="315.1" width="13" height="13" fill="none" stroke="#fff" stroke-opacity=".85" stroke-width="1.6"/>
<rect x="1201.9" y="364.9" width="13" height="13" fill="none" stroke="#fff" stroke-opacity=".85" stroke-width="1.6"/>
<rect x="1337.1" y="335" width="13" height="13" fill="none" stroke="#fff" stroke-opacity=".85" stroke-width="1.6"/>
<rect x="1199" y="477" width="13" height="13" fill="none" stroke="#fff" stroke-opacity=".85" stroke-width="1.6"/>
<rect x="1222.3" y="222" width="12.6" height="12.6" fill="none" stroke="#000" stroke-width="2.2"/>
<circle cx="1159.5" cy="148.5" r="4.3" fill="#00ff00" stroke="#000" stroke-width="1.3"/>
<circle cx="1171.4" cy="164.7" r="4.3" fill="#5a8c58" stroke="#000" stroke-width="1.3"/>
<circle cx="1209.5" cy="158" r="4.3" fill="#a2b454" stroke="#000" stroke-width="1.3"/>
<circle cx="1230" cy="155.3" r="4.3" fill="#ffff00" stroke="#000" stroke-width="1.3"/>
<circle cx="1256" cy="158" r="4.3" fill="#e6c640" stroke="#000" stroke-width="1.3"/>
<circle cx="1284.3" cy="163.4" r="4.3" fill="#e0a244" stroke="#000" stroke-width="1.3"/>
<circle cx="1325.5" cy="168.8" r="4.3" fill="#d88438" stroke="#000" stroke-width="1.3"/>
<circle cx="1205.6" cy="181.6" r="4.3" fill="#586a42" stroke="#000" stroke-width="1.3"/>
<circle cx="1271" cy="202.8" r="4.3" fill="#6e5042" stroke="#000" stroke-width="1.3"/>
<circle cx="1257.5" cy="210.9" r="4.3" fill="#c09a8a" stroke="#000" stroke-width="1.3"/>
<circle cx="1369" cy="216.5" r="4.3" fill="#c25a68" stroke="#000" stroke-width="1.3"/>
<circle cx="1181" cy="225.8" r="4.3" fill="#74b8a6" stroke="#000" stroke-width="1.3"/>
<circle cx="1227.6" cy="235.4" r="4.3" fill="#c8c8c8" stroke="#000" stroke-width="1.3"/>
<circle cx="1225.2" cy="236" r="4.3" fill="#a2a2a2" stroke="#000" stroke-width="1.3"/>
<circle cx="1174.5" cy="246.5" r="4.3" fill="#00ffff" stroke="#000" stroke-width="1.3"/>
<circle cx="1179.5" cy="283.3" r="4.3" fill="#0c8aa2" stroke="#000" stroke-width="1.3"/>
<circle cx="1201.4" cy="289.8" r="4.3" fill="#6482a2" stroke="#000" stroke-width="1.3"/>
<circle cx="1224.4" cy="281.9" r="4.3" fill="#000000" stroke="#000" stroke-width="1.3"/>
<circle cx="1222" cy="298.4" r="4.3" fill="#8684b2" stroke="#000" stroke-width="1.3"/>
<circle cx="1325.5" cy="284.8" r="4.3" fill="#b85a92" stroke="#000" stroke-width="1.3"/>
<circle cx="1257.5" cy="321.6" r="4.3" fill="#5c3e6c" stroke="#000" stroke-width="1.3"/>
<circle cx="1205.5" cy="359.6" r="4.3" fill="#5464a8" stroke="#000" stroke-width="1.3"/>
<circle cx="1322.5" cy="365" r="4.3" fill="#ff00ff" stroke="#000" stroke-width="1.3"/>
<circle cx="1208.4" cy="417.9" r="4.3" fill="#3a449a" stroke="#000" stroke-width="1.3"/>
<circle cx="1209.5" cy="492.9" r="4.3" fill="#0000ff" stroke="#000" stroke-width="1.3"/>
<circle cx="1433" cy="200.5" r="4.3" fill="#b03c44" stroke="#000" stroke-width="1.3"/>
<circle cx="1485.7" cy="180" r="4.3" fill="#ff0000" stroke="#000" stroke-width="1.3"/>
<rect x="1453.8" y="441" width="198.6" height="130.7" fill="url(#gIn)"/>
<path d="M1453.8 455.7L1652.4 557.6V441H1453.8Z" fill="#000" fill-opacity=".4"/>
<rect x="1453.8" y="441" width="198.6" height="130.7" fill="none" stroke="#8a8a8a" stroke-width="1.6"/>
<rect x="1545.6" y="498.5" width="13.6" height="13.6" fill="none" stroke="#fff" stroke-opacity=".85" stroke-width="1.4"/>
<circle cx="1551" cy="461.2" r="4.4" fill="#ffff00" stroke="#000" stroke-width="1"/>
<rect x="1403" y="581.4" width="252.5" height="27.2" fill="#333333"/>
<text x="1404.6" y="602.1" font-size="19.2" fill="#efefef" textLength="210.5" lengthAdjust="spacingAndGlyphs">RGB Triplet: 255, 255, 0</text>
<rect x="1018.6" y="122" width="640" height="491.1" fill="none" stroke="#b4b4b4" stroke-width="1.4"/>
<path d="M1018.6 613.1v6" stroke="#d4d4d4" stroke-width="1.4"/>
<text x="1014.58" y="635.6" font-size="14.6" fill="#d2d2d2" textLength="8.05" lengthAdjust="spacingAndGlyphs">0</text>
<path d="M1013.6 613.1h5" stroke="#d4d4d4" stroke-width="1.4"/>
<text x="1004.25" y="619.9" font-size="14.6" fill="#d2d2d2" textLength="8.05" lengthAdjust="spacingAndGlyphs">0</text>
<path d="M1071.88 613.1v6" stroke="#d4d4d4" stroke-width="1.4"/>
<text x="1057.95" y="635.6" font-size="14.6" fill="#d2d2d2" textLength="27.85" lengthAdjust="spacingAndGlyphs">0,05</text>
<path d="M1013.6 573.52h5" stroke="#d4d4d4" stroke-width="1.4"/>
<text x="984.45" y="578.82" font-size="14.6" fill="#d2d2d2" textLength="27.85" lengthAdjust="spacingAndGlyphs">0,05</text>
<path d="M1125.15 613.1v6" stroke="#d4d4d4" stroke-width="1.4"/>
<text x="1115.25" y="635.6" font-size="14.6" fill="#d2d2d2" textLength="19.8" lengthAdjust="spacingAndGlyphs">0,1</text>
<path d="M1013.6 532.45h5" stroke="#d4d4d4" stroke-width="1.4"/>
<text x="992.5" y="537.75" font-size="14.6" fill="#d2d2d2" textLength="19.8" lengthAdjust="spacingAndGlyphs">0,1</text>
<path d="M1178.42 613.1v6" stroke="#d4d4d4" stroke-width="1.4"/>
<text x="1164.5" y="635.6" font-size="14.6" fill="#d2d2d2" textLength="27.85" lengthAdjust="spacingAndGlyphs">0,15</text>
<path d="M1013.6 491.38h5" stroke="#d4d4d4" stroke-width="1.4"/>
<text x="984.45" y="496.68" font-size="14.6" fill="#d2d2d2" textLength="27.85" lengthAdjust="spacingAndGlyphs">0,15</text>
<path d="M1231.7 613.1v6" stroke="#d4d4d4" stroke-width="1.4"/>
<text x="1221.8" y="635.6" font-size="14.6" fill="#d2d2d2" textLength="19.8" lengthAdjust="spacingAndGlyphs">0,2</text>
<path d="M1013.6 450.3h5" stroke="#d4d4d4" stroke-width="1.4"/>
<text x="992.5" y="455.6" font-size="14.6" fill="#d2d2d2" textLength="19.8" lengthAdjust="spacingAndGlyphs">0,2</text>
<path d="M1284.97 613.1v6" stroke="#d4d4d4" stroke-width="1.4"/>
<text x="1271.05" y="635.6" font-size="14.6" fill="#d2d2d2" textLength="27.85" lengthAdjust="spacingAndGlyphs">0,25</text>
<path d="M1013.6 409.23h5" stroke="#d4d4d4" stroke-width="1.4"/>
<text x="984.45" y="414.53" font-size="14.6" fill="#d2d2d2" textLength="27.85" lengthAdjust="spacingAndGlyphs">0,25</text>
<path d="M1338.25 613.1v6" stroke="#d4d4d4" stroke-width="1.4"/>
<text x="1328.35" y="635.6" font-size="14.6" fill="#d2d2d2" textLength="19.8" lengthAdjust="spacingAndGlyphs">0,3</text>
<path d="M1013.6 368.15h5" stroke="#d4d4d4" stroke-width="1.4"/>
<text x="992.5" y="373.45" font-size="14.6" fill="#d2d2d2" textLength="19.8" lengthAdjust="spacingAndGlyphs">0,3</text>
<path d="M1391.53 613.1v6" stroke="#d4d4d4" stroke-width="1.4"/>
<text x="1377.6" y="635.6" font-size="14.6" fill="#d2d2d2" textLength="27.85" lengthAdjust="spacingAndGlyphs">0,35</text>
<path d="M1013.6 327.07h5" stroke="#d4d4d4" stroke-width="1.4"/>
<text x="984.45" y="332.38" font-size="14.6" fill="#d2d2d2" textLength="27.85" lengthAdjust="spacingAndGlyphs">0,35</text>
<path d="M1444.8 613.1v6" stroke="#d4d4d4" stroke-width="1.4"/>
<text x="1434.9" y="635.6" font-size="14.6" fill="#d2d2d2" textLength="19.8" lengthAdjust="spacingAndGlyphs">0,4</text>
<path d="M1013.6 286h5" stroke="#d4d4d4" stroke-width="1.4"/>
<text x="992.5" y="291.3" font-size="14.6" fill="#d2d2d2" textLength="19.8" lengthAdjust="spacingAndGlyphs">0,4</text>
<path d="M1498.08 613.1v6" stroke="#d4d4d4" stroke-width="1.4"/>
<text x="1484.15" y="635.6" font-size="14.6" fill="#d2d2d2" textLength="27.85" lengthAdjust="spacingAndGlyphs">0,45</text>
<path d="M1013.6 244.93h5" stroke="#d4d4d4" stroke-width="1.4"/>
<text x="984.45" y="250.23" font-size="14.6" fill="#d2d2d2" textLength="27.85" lengthAdjust="spacingAndGlyphs">0,45</text>
<path d="M1551.35 613.1v6" stroke="#d4d4d4" stroke-width="1.4"/>
<text x="1541.45" y="635.6" font-size="14.6" fill="#d2d2d2" textLength="19.8" lengthAdjust="spacingAndGlyphs">0,5</text>
<path d="M1013.6 203.85h5" stroke="#d4d4d4" stroke-width="1.4"/>
<text x="992.5" y="209.15" font-size="14.6" fill="#d2d2d2" textLength="19.8" lengthAdjust="spacingAndGlyphs">0,5</text>
<path d="M1604.62 613.1v6" stroke="#d4d4d4" stroke-width="1.4"/>
<text x="1590.7" y="635.6" font-size="14.6" fill="#d2d2d2" textLength="27.85" lengthAdjust="spacingAndGlyphs">0,55</text>
<path d="M1013.6 162.77h5" stroke="#d4d4d4" stroke-width="1.4"/>
<text x="984.45" y="168.07" font-size="14.6" fill="#d2d2d2" textLength="27.85" lengthAdjust="spacingAndGlyphs">0,55</text>
<text x="1279.3" y="115.4" font-size="13.6" fill="#d2d2d2" textLength="84" lengthAdjust="spacingAndGlyphs">CIE 1976 u'v'</text>
<!-- s_stats -->
<text x="51" y="681" font-size="30.2" fill="#f0f0f0" textLength="234" lengthAdjust="spacingAndGlyphs">Avg dE2000: 4,28</text>
<text x="47.2" y="722.2" font-size="30.2" fill="#f0f0f0" textLength="241" lengthAdjust="spacingAndGlyphs">Max dE2000: 6,77</text>
<text x="15.6" y="769.7" font-size="30.2" fill="#f0f0f0" textLength="218.5" lengthAdjust="spacingAndGlyphs">Current Reading</text>
<text x="15.2" y="804.7" font-size="24.8" fill="#f0f0f0" textLength="103" lengthAdjust="spacingAndGlyphs">x: 0,4189</text>
<text x="172" y="804.7" font-size="24.8" fill="#f0f0f0" textLength="103" lengthAdjust="spacingAndGlyphs">y: 0,5226</text>
<text x="15.2" y="845.6" font-size="24.8" fill="#f0f0f0" textLength="111.2" lengthAdjust="spacingAndGlyphs">fL: 132,16</text>
<text x="15.2" y="879.4" font-size="24.8" fill="#f0f0f0" textLength="159.3" lengthAdjust="spacingAndGlyphs">cd/m²: 452,83</text>
<!-- s_table -->
<g clip-path="url(#cTb)">
<rect x="321.3" y="663" width="1350" height="227" fill="#000"/>
<rect x="323" y="664.4" width="1350" height="24.5" fill="url(#gHd)"/>
<rect x="323" y="688.8" width="1350" height="23.56" fill="#404040"/>
<rect x="323" y="712.06" width="1350" height="23.56" fill="#808080"/>
<rect x="323" y="735.32" width="1350" height="23.56" fill="#404040"/>
<rect x="323" y="758.58" width="1350" height="23.56" fill="#808080"/>
<rect x="323" y="781.84" width="1350" height="23.56" fill="#404040"/>
<rect x="323" y="805.1" width="1350" height="23.56" fill="#808080"/>
<rect x="323" y="828.36" width="1350" height="23.56" fill="#404040"/>
<rect x="323" y="851.62" width="1350" height="23.56" fill="#808080"/>
<text x="493" y="681.7" font-size="14" fill="#f4f4f4" textLength="47.2" lengthAdjust="spacingAndGlyphs">White</text>
<text x="555" y="681.7" font-size="14" fill="#f4f4f4" textLength="61.2" lengthAdjust="spacingAndGlyphs">Gray 80</text>
<text x="625.6" y="681.7" font-size="14" fill="#f4f4f4" textLength="60.7" lengthAdjust="spacingAndGlyphs">Gray 65</text>
<text x="696.6" y="681.7" font-size="14" fill="#f4f4f4" textLength="60.7" lengthAdjust="spacingAndGlyphs">Gray 50</text>
<text x="767.6" y="681.7" font-size="14" fill="#f4f4f4" textLength="60" lengthAdjust="spacingAndGlyphs">Gray 35</text>
<text x="841.1" y="681.7" font-size="14" fill="#f4f4f4" textLength="41" lengthAdjust="spacingAndGlyphs">Black</text>
<text x="894.8" y="681.7" font-size="14" fill="#f4f4f4" textLength="73" lengthAdjust="spacingAndGlyphs">Dark Skin</text>
<text x="978.7" y="681.7" font-size="14" fill="#f4f4f4" textLength="75.5" lengthAdjust="spacingAndGlyphs">Light Skin</text>
<text x="1064.4" y="681.7" font-size="14" fill="#f4f4f4" textLength="66" lengthAdjust="spacingAndGlyphs">Blue Sky</text>
<text x="1141.1" y="681.7" font-size="14" fill="#f4f4f4" textLength="55.7" lengthAdjust="spacingAndGlyphs">Foliage</text>
<text x="1207.9" y="681.7" font-size="14" fill="#f4f4f4" textLength="93" lengthAdjust="spacingAndGlyphs">Blue Flower</text>
<text x="1311.5" y="681.7" font-size="14" fill="#f4f4f4" textLength="100.4" lengthAdjust="spacingAndGlyphs">Bluish Green</text>
<text x="1422.2" y="681.7" font-size="14" fill="#f4f4f4" textLength="57.4" lengthAdjust="spacingAndGlyphs">Orange</text>
<text x="1489.8" y="681.7" font-size="14" fill="#f4f4f4" textLength="103.7" lengthAdjust="spacingAndGlyphs">Purplish Blue</text>
<text x="1603.8" y="681.7" font-size="14" fill="#f4f4f4" textLength="118.68" lengthAdjust="spacingAndGlyphs">Moderate Red</text>
<text x="337.4" y="706.8" font-size="14.6" fill="#f0f0f0" font-weight="bold" textLength="71.8" lengthAdjust="spacingAndGlyphs">x: CIE31</text>
<text x="488" y="706.8" font-size="14.8" fill="#f0f0f0" textLength="36.24" lengthAdjust="spacingAndGlyphs">0,30</text>
<text x="554.9" y="706.8" font-size="14.8" fill="#f0f0f0" textLength="36.24" lengthAdjust="spacingAndGlyphs">0,30</text>
<text x="625.5" y="706.8" font-size="14.8" fill="#f0f0f0" textLength="36.24" lengthAdjust="spacingAndGlyphs">0,30</text>
<text x="696.5" y="706.8" font-size="14.8" fill="#f0f0f0" textLength="36.24" lengthAdjust="spacingAndGlyphs">0,30</text>
<text x="767.5" y="706.8" font-size="14.8" fill="#f0f0f0" textLength="36.24" lengthAdjust="spacingAndGlyphs">0,30</text>
<text x="838.4" y="706.8" font-size="14.8" fill="#f0f0f0" textLength="36.24" lengthAdjust="spacingAndGlyphs">0,26</text>
<text x="894.7" y="706.8" font-size="14.8" fill="#f0f0f0" textLength="36.24" lengthAdjust="spacingAndGlyphs">0,39</text>
<text x="978.6" y="706.8" font-size="14.8" fill="#f0f0f0" textLength="36.24" lengthAdjust="spacingAndGlyphs">0,37</text>
<text x="1064.3" y="706.8" font-size="14.8" fill="#f0f0f0" textLength="36.24" lengthAdjust="spacingAndGlyphs">0,23</text>
<text x="1141" y="706.8" font-size="14.8" fill="#f0f0f0" textLength="36.24" lengthAdjust="spacingAndGlyphs">0,34</text>
<text x="1207.8" y="706.8" font-size="14.8" fill="#f0f0f0" textLength="36.24" lengthAdjust="spacingAndGlyphs">0,24</text>
<text x="1311.4" y="706.8" font-size="14.8" fill="#f0f0f0" textLength="36.24" lengthAdjust="spacingAndGlyphs">0,26</text>
<text x="1422.1" y="706.8" font-size="14.8" fill="#f0f0f0" textLength="36.24" lengthAdjust="spacingAndGlyphs">0,51</text>
<text x="1489.7" y="706.8" font-size="14.8" fill="#f0f0f0" textLength="36.24" lengthAdjust="spacingAndGlyphs">0,20</text>
<text x="1603.7" y="706.8" font-size="14.8" fill="#f0f0f0" textLength="36.24" lengthAdjust="spacingAndGlyphs">0,47</text>
<text x="337.4" y="730" font-size="14.6" fill="#f0f0f0" font-weight="bold" textLength="71.8" lengthAdjust="spacingAndGlyphs">y: CIE31</text>
<text x="488" y="730" font-size="14.8" fill="#f0f0f0" textLength="36.24" lengthAdjust="spacingAndGlyphs">0,32</text>
<text x="554.9" y="730" font-size="14.8" fill="#f0f0f0" textLength="36.24" lengthAdjust="spacingAndGlyphs">0,32</text>
<text x="625.5" y="730" font-size="14.8" fill="#f0f0f0" textLength="36.24" lengthAdjust="spacingAndGlyphs">0,32</text>
<text x="696.5" y="730" font-size="14.8" fill="#f0f0f0" textLength="36.24" lengthAdjust="spacingAndGlyphs">0,32</text>
<text x="767.5" y="730" font-size="14.8" fill="#f0f0f0" textLength="36.24" lengthAdjust="spacingAndGlyphs">0,32</text>
<text x="838.4" y="730" font-size="14.8" fill="#f0f0f0" textLength="36.24" lengthAdjust="spacingAndGlyphs">0,24</text>
<text x="894.7" y="730" font-size="14.8" fill="#f0f0f0" textLength="36.24" lengthAdjust="spacingAndGlyphs">0,37</text>
<text x="978.6" y="730" font-size="14.8" fill="#f0f0f0" textLength="36.24" lengthAdjust="spacingAndGlyphs">0,36</text>
<text x="1064.3" y="730" font-size="14.8" fill="#f0f0f0" textLength="36.24" lengthAdjust="spacingAndGlyphs">0,23</text>
<text x="1141" y="730" font-size="14.8" fill="#f0f0f0" textLength="36.24" lengthAdjust="spacingAndGlyphs">0,45</text>
<text x="1207.8" y="730" font-size="14.8" fill="#f0f0f0" textLength="36.24" lengthAdjust="spacingAndGlyphs">0,22</text>
<text x="1311.4" y="730" font-size="14.8" fill="#f0f0f0" textLength="36.24" lengthAdjust="spacingAndGlyphs">0,35</text>
<text x="1422.1" y="730" font-size="14.8" fill="#f0f0f0" textLength="36.24" lengthAdjust="spacingAndGlyphs">0,43</text>
<text x="1489.7" y="730" font-size="14.8" fill="#f0f0f0" textLength="36.24" lengthAdjust="spacingAndGlyphs">0,15</text>
<text x="1603.7" y="730" font-size="14.8" fill="#f0f0f0" textLength="36.24" lengthAdjust="spacingAndGlyphs">0,31</text>
<text x="337.4" y="753.2" font-size="14.6" fill="#f0f0f0" font-weight="bold" textLength="11.2" lengthAdjust="spacingAndGlyphs">Y</text>
<text x="488" y="753.2" font-size="14.8" fill="#f0f0f0" textLength="56.95" lengthAdjust="spacingAndGlyphs">501,90</text>
<text x="554.9" y="753.2" font-size="14.8" fill="#f0f0f0" textLength="56.95" lengthAdjust="spacingAndGlyphs">396,56</text>
<text x="625.5" y="753.2" font-size="14.8" fill="#f0f0f0" textLength="56.95" lengthAdjust="spacingAndGlyphs">319,59</text>
<text x="696.5" y="753.2" font-size="14.8" fill="#f0f0f0" textLength="56.95" lengthAdjust="spacingAndGlyphs">247,36</text>
<text x="767.5" y="753.2" font-size="14.8" fill="#f0f0f0" textLength="56.95" lengthAdjust="spacingAndGlyphs">172,25</text>
<text x="838.4" y="753.2" font-size="14.8" fill="#f0f0f0" textLength="36.24" lengthAdjust="spacingAndGlyphs">0,34</text>
<text x="894.7" y="753.2" font-size="14.8" fill="#f0f0f0" textLength="46.59" lengthAdjust="spacingAndGlyphs">47,86</text>
<text x="978.6" y="753.2" font-size="14.8" fill="#f0f0f0" textLength="56.95" lengthAdjust="spacingAndGlyphs">171,62</text>
<text x="1064.3" y="753.2" font-size="14.8" fill="#f0f0f0" textLength="46.59" lengthAdjust="spacingAndGlyphs">95,58</text>
<text x="1141" y="753.2" font-size="14.8" fill="#f0f0f0" textLength="46.59" lengthAdjust="spacingAndGlyphs">66,30</text>
<text x="1207.8" y="753.2" font-size="14.8" fill="#f0f0f0" textLength="55.57" lengthAdjust="spacingAndGlyphs">114,57</text>
<text x="1311.4" y="753.2" font-size="14.8" fill="#f0f0f0" textLength="56.95" lengthAdjust="spacingAndGlyphs">224,59</text>
<text x="1422.1" y="753.2" font-size="14.8" fill="#f0f0f0" textLength="56.95" lengthAdjust="spacingAndGlyphs">134,02</text>
<text x="1489.7" y="753.2" font-size="14.8" fill="#f0f0f0" textLength="46.59" lengthAdjust="spacingAndGlyphs">60,33</text>
<text x="1603.7" y="753.2" font-size="14.8" fill="#f0f0f0" textLength="46.59" lengthAdjust="spacingAndGlyphs">89,14</text>
<text x="337.4" y="776.4" font-size="14.6" fill="#f0f0f0" font-weight="bold" textLength="130" lengthAdjust="spacingAndGlyphs">Target x:CIE31</text>
<text x="488" y="776.4" font-size="14.8" fill="#f0f0f0" textLength="36.24" lengthAdjust="spacingAndGlyphs">0,31</text>
<text x="554.9" y="776.4" font-size="14.8" fill="#f0f0f0" textLength="36.24" lengthAdjust="spacingAndGlyphs">0,31</text>
<text x="625.5" y="776.4" font-size="14.8" fill="#f0f0f0" textLength="36.24" lengthAdjust="spacingAndGlyphs">0,31</text>
<text x="696.5" y="776.4" font-size="14.8" fill="#f0f0f0" textLength="36.24" lengthAdjust="spacingAndGlyphs">0,31</text>
<text x="767.5" y="776.4" font-size="14.8" fill="#f0f0f0" textLength="36.24" lengthAdjust="spacingAndGlyphs">0,31</text>
<text x="838.4" y="776.4" font-size="14.8" fill="#f0f0f0" textLength="36.24" lengthAdjust="spacingAndGlyphs">0,31</text>
<text x="894.7" y="776.4" font-size="14.8" fill="#f0f0f0" textLength="36.24" lengthAdjust="spacingAndGlyphs">0,40</text>
<text x="978.6" y="776.4" font-size="14.8" fill="#f0f0f0" textLength="36.24" lengthAdjust="spacingAndGlyphs">0,38</text>
<text x="1064.3" y="776.4" font-size="14.8" fill="#f0f0f0" textLength="36.24" lengthAdjust="spacingAndGlyphs">0,25</text>
<text x="1141" y="776.4" font-size="14.8" fill="#f0f0f0" textLength="36.24" lengthAdjust="spacingAndGlyphs">0,34</text>
<text x="1207.8" y="776.4" font-size="14.8" fill="#f0f0f0" textLength="36.24" lengthAdjust="spacingAndGlyphs">0,27</text>
<text x="1311.4" y="776.4" font-size="14.8" fill="#f0f0f0" textLength="36.24" lengthAdjust="spacingAndGlyphs">0,26</text>
<text x="1422.1" y="776.4" font-size="14.8" fill="#f0f0f0" textLength="36.24" lengthAdjust="spacingAndGlyphs">0,51</text>
<text x="1489.7" y="776.4" font-size="14.8" fill="#f0f0f0" textLength="36.24" lengthAdjust="spacingAndGlyphs">0,22</text>
<text x="1603.7" y="776.4" font-size="14.8" fill="#f0f0f0" textLength="36.24" lengthAdjust="spacingAndGlyphs">0,46</text>
<text x="337.4" y="799.6" font-size="14.6" fill="#f0f0f0" font-weight="bold" textLength="130" lengthAdjust="spacingAndGlyphs">Target y:CIE31</text>
<text x="488" y="799.6" font-size="14.8" fill="#f0f0f0" textLength="36.24" lengthAdjust="spacingAndGlyphs">0,33</text>
<text x="554.9" y="799.6" font-size="14.8" fill="#f0f0f0" textLength="36.24" lengthAdjust="spacingAndGlyphs">0,33</text>
<text x="625.5" y="799.6" font-size="14.8" fill="#f0f0f0" textLength="36.24" lengthAdjust="spacingAndGlyphs">0,33</text>
<text x="696.5" y="799.6" font-size="14.8" fill="#f0f0f0" textLength="36.24" lengthAdjust="spacingAndGlyphs">0,33</text>
<text x="767.5" y="799.6" font-size="14.8" fill="#f0f0f0" textLength="36.24" lengthAdjust="spacingAndGlyphs">0,33</text>
<text x="838.4" y="799.6" font-size="14.8" fill="#f0f0f0" textLength="36.24" lengthAdjust="spacingAndGlyphs">0,33</text>
<text x="894.7" y="799.6" font-size="14.8" fill="#f0f0f0" textLength="36.24" lengthAdjust="spacingAndGlyphs">0,36</text>
<text x="978.6" y="799.6" font-size="14.8" fill="#f0f0f0" textLength="36.24" lengthAdjust="spacingAndGlyphs">0,36</text>
<text x="1064.3" y="799.6" font-size="14.8" fill="#f0f0f0" textLength="36.24" lengthAdjust="spacingAndGlyphs">0,27</text>
<text x="1141" y="799.6" font-size="14.8" fill="#f0f0f0" textLength="36.24" lengthAdjust="spacingAndGlyphs">0,43</text>
<text x="1207.8" y="799.6" font-size="14.8" fill="#f0f0f0" textLength="36.24" lengthAdjust="spacingAndGlyphs">0,25</text>
<text x="1311.4" y="799.6" font-size="14.8" fill="#f0f0f0" textLength="36.24" lengthAdjust="spacingAndGlyphs">0,36</text>
<text x="1422.1" y="799.6" font-size="14.8" fill="#f0f0f0" textLength="36.24" lengthAdjust="spacingAndGlyphs">0,41</text>
<text x="1489.7" y="799.6" font-size="14.8" fill="#f0f0f0" textLength="36.24" lengthAdjust="spacingAndGlyphs">0,19</text>
<text x="1603.7" y="799.6" font-size="14.8" fill="#f0f0f0" textLength="36.24" lengthAdjust="spacingAndGlyphs">0,31</text>
<text x="337.4" y="822.8" font-size="14.6" fill="#f0f0f0" font-weight="bold" textLength="75" lengthAdjust="spacingAndGlyphs">Target Y</text>
<text x="488" y="822.8" font-size="14.8" fill="#f0f0f0" textLength="56.95" lengthAdjust="spacingAndGlyphs">501,90</text>
<text x="554.9" y="822.8" font-size="14.8" fill="#f0f0f0" textLength="56.95" lengthAdjust="spacingAndGlyphs">397,16</text>
<text x="625.5" y="822.8" font-size="14.8" fill="#f0f0f0" textLength="56.95" lengthAdjust="spacingAndGlyphs">320,01</text>
<text x="696.5" y="822.8" font-size="14.8" fill="#f0f0f0" textLength="56.95" lengthAdjust="spacingAndGlyphs">246,45</text>
<text x="767.5" y="822.8" font-size="14.8" fill="#f0f0f0" textLength="56.95" lengthAdjust="spacingAndGlyphs">171,61</text>
<text x="838.4" y="822.8" font-size="14.8" fill="#f0f0f0" textLength="36.24" lengthAdjust="spacingAndGlyphs">0,00</text>
<text x="894.7" y="822.8" font-size="14.8" fill="#f0f0f0" textLength="46.59" lengthAdjust="spacingAndGlyphs">50,56</text>
<text x="978.6" y="822.8" font-size="14.8" fill="#f0f0f0" textLength="56.95" lengthAdjust="spacingAndGlyphs">175,14</text>
<text x="1064.3" y="822.8" font-size="14.8" fill="#f0f0f0" textLength="46.59" lengthAdjust="spacingAndGlyphs">93,85</text>
<text x="1141" y="822.8" font-size="14.8" fill="#f0f0f0" textLength="46.59" lengthAdjust="spacingAndGlyphs">65,41</text>
<text x="1207.8" y="822.8" font-size="14.8" fill="#f0f0f0" textLength="55.57" lengthAdjust="spacingAndGlyphs">117,04</text>
<text x="1311.4" y="822.8" font-size="14.8" fill="#f0f0f0" textLength="56.95" lengthAdjust="spacingAndGlyphs">210,16</text>
<text x="1422.1" y="822.8" font-size="14.8" fill="#f0f0f0" textLength="56.95" lengthAdjust="spacingAndGlyphs">142,28</text>
<text x="1489.7" y="822.8" font-size="14.8" fill="#f0f0f0" textLength="46.59" lengthAdjust="spacingAndGlyphs">58,99</text>
<text x="1603.7" y="822.8" font-size="14.8" fill="#f0f0f0" textLength="46.59" lengthAdjust="spacingAndGlyphs">93,73</text>
<text x="337.4" y="846" font-size="14.6" fill="#f0f0f0" font-weight="bold" textLength="74.7" lengthAdjust="spacingAndGlyphs">ΔE 2000</text>
<text x="488" y="846" font-size="14.8" fill="#f0f0f0" textLength="36.24" lengthAdjust="spacingAndGlyphs">5,81</text>
<text x="554.9" y="846" font-size="14.8" fill="#f0f0f0" textLength="36.24" lengthAdjust="spacingAndGlyphs">5,92</text>
<text x="625.5" y="846" font-size="14.8" fill="#f0f0f0" textLength="36.24" lengthAdjust="spacingAndGlyphs">5,58</text>
<text x="696.5" y="846" font-size="14.8" fill="#f0f0f0" textLength="36.24" lengthAdjust="spacingAndGlyphs">5,10</text>
<text x="767.5" y="846" font-size="14.8" fill="#f0f0f0" textLength="36.24" lengthAdjust="spacingAndGlyphs">4,45</text>
<text x="838.4" y="846" font-size="14.8" fill="#f0f0f0" textLength="36.24" lengthAdjust="spacingAndGlyphs">1,15</text>
<text x="894.7" y="846" font-size="14.8" fill="#f0f0f0" textLength="36.24" lengthAdjust="spacingAndGlyphs">2,41</text>
<text x="978.6" y="846" font-size="14.8" fill="#f0f0f0" textLength="36.24" lengthAdjust="spacingAndGlyphs">3,42</text>
<text x="1064.3" y="846" font-size="14.8" fill="#f0f0f0" textLength="36.24" lengthAdjust="spacingAndGlyphs">3,65</text>
<text x="1141" y="846" font-size="14.8" fill="#f0f0f0" textLength="36.24" lengthAdjust="spacingAndGlyphs">2,93</text>
<text x="1207.8" y="846" font-size="14.8" fill="#f0f0f0" textLength="36.24" lengthAdjust="spacingAndGlyphs">5,67</text>
<text x="1311.4" y="846" font-size="14.8" fill="#f0f0f0" textLength="36.24" lengthAdjust="spacingAndGlyphs">2,65</text>
<text x="1422.1" y="846" font-size="14.8" fill="#f0f0f0" textLength="36.24" lengthAdjust="spacingAndGlyphs">5,68</text>
<text x="1489.7" y="846" font-size="14.8" fill="#f0f0f0" textLength="36.24" lengthAdjust="spacingAndGlyphs">4,63</text>
<text x="1603.7" y="846" font-size="14.8" fill="#f0f0f0" textLength="36.24" lengthAdjust="spacingAndGlyphs">1,47</text>
<text x="337.4" y="869.2" font-size="14.6" fill="#f0f0f0" font-weight="bold" textLength="59.5" lengthAdjust="spacingAndGlyphs">ΔE ITP</text>
<text x="488" y="869.2" font-size="14.8" fill="#f0f0f0" textLength="36.24" lengthAdjust="spacingAndGlyphs">7,01</text>
<text x="554.9" y="869.2" font-size="14.8" fill="#f0f0f0" textLength="36.24" lengthAdjust="spacingAndGlyphs">7,77</text>
<text x="625.5" y="869.2" font-size="14.8" fill="#f0f0f0" textLength="36.24" lengthAdjust="spacingAndGlyphs">7,83</text>
<text x="696.5" y="869.2" font-size="14.8" fill="#f0f0f0" textLength="36.24" lengthAdjust="spacingAndGlyphs">7,74</text>
<text x="767.5" y="869.2" font-size="14.8" fill="#f0f0f0" textLength="36.24" lengthAdjust="spacingAndGlyphs">7,52</text>
<text x="838.4" y="869.2" font-size="14.8" fill="#f0f0f0" textLength="46.59" lengthAdjust="spacingAndGlyphs">75,88</text>
<text x="894.7" y="869.2" font-size="14.8" fill="#f0f0f0" textLength="36.24" lengthAdjust="spacingAndGlyphs">6,40</text>
<text x="978.6" y="869.2" font-size="14.8" fill="#f0f0f0" textLength="36.24" lengthAdjust="spacingAndGlyphs">8,54</text>
<text x="1064.3" y="869.2" font-size="14.8" fill="#f0f0f0" textLength="46.59" lengthAdjust="spacingAndGlyphs">14,91</text>
<text x="1141" y="869.2" font-size="14.8" fill="#f0f0f0" textLength="36.24" lengthAdjust="spacingAndGlyphs">9,92</text>
<text x="1207.8" y="869.2" font-size="14.8" fill="#f0f0f0" textLength="46.59" lengthAdjust="spacingAndGlyphs">16,68</text>
<text x="1311.4" y="869.2" font-size="14.8" fill="#f0f0f0" textLength="36.24" lengthAdjust="spacingAndGlyphs">6,66</text>
<text x="1422.1" y="869.2" font-size="14.8" fill="#f0f0f0" textLength="46.59" lengthAdjust="spacingAndGlyphs">16,06</text>
<text x="1489.7" y="869.2" font-size="14.8" fill="#f0f0f0" textLength="46.59" lengthAdjust="spacingAndGlyphs">21,93</text>
<text x="1603.7" y="869.2" font-size="14.8" fill="#f0f0f0" textLength="36.24" lengthAdjust="spacingAndGlyphs">9,82</text>
<rect x="323" y="874.9" width="1350" height="15" fill="#5c5c5c"/>
<rect x="324.2" y="877.2" width="16.6" height="11.8" rx="2.5" fill="#7c7c7c" stroke="#8e8e8e" stroke-width="0.8"/>
<path d="M336 878.6v9l-6.4-4.5z" fill="#333"/>
<rect x="1649.5" y="877.2" width="15.5" height="11.8" rx="2.5" fill="#7c7c7c" stroke="#8e8e8e" stroke-width="0.8"/>
<path d="M1654.5 878.6v9l6.4-4.5z" fill="#333"/>
<rect x="343.8" y="876.6" width="636" height="12.6" rx="6.3" fill="#3c3c3c"/>
</g>
<!-- s_bot -->
<rect x="1.2" y="931.2" width="1265" height="62" fill="#424242"/>
<g clip-path="url(#cBt)">
<rect x="-32.1" y="932.3" width="61.8" height="59.8" rx="5" fill="url(#gB)" stroke="#c4c4c4" stroke-opacity=".45" stroke-width="1"/>
<rect x="-25.2" y="938.4" width="49" height="14" rx="4" fill="#8c88c8" stroke="#000" stroke-opacity=".16" stroke-width="1"/>
<text x="-21.19" y="971.8" font-size="13.2" fill="#2c2c2c" font-weight="bold" textLength="26.7" lengthAdjust="spacingAndGlyphs">Blue</text>
<text x="-21.19" y="986.6" font-size="13.2" fill="#2c2c2c" font-weight="bold" textLength="39.99" lengthAdjust="spacingAndGlyphs">Flower</text>
<rect x="32.9" y="932.3" width="61.8" height="59.8" rx="5" fill="url(#gB)" stroke="#c4c4c4" stroke-opacity=".45" stroke-width="1"/>
<rect x="39.8" y="938.4" width="49" height="14" rx="4" fill="#66c8b2" stroke="#000" stroke-opacity=".16" stroke-width="1"/>
<text x="45.4" y="971.8" font-size="13.2" fill="#2c2c2c" font-weight="bold" textLength="36.6" lengthAdjust="spacingAndGlyphs">Bluish</text>
<text x="45.4" y="986.6" font-size="13.2" fill="#2c2c2c" font-weight="bold" textLength="36.8" lengthAdjust="spacingAndGlyphs">Green</text>
<rect x="97.9" y="932.3" width="61.8" height="59.8" rx="5" fill="url(#gB)" stroke="#c4c4c4" stroke-opacity=".45" stroke-width="1"/>
<rect x="104.8" y="938.4" width="49" height="29.6" rx="4" fill="#de7a28" stroke="#000" stroke-opacity=".16" stroke-width="1"/>
<text x="106.8" y="986.6" font-size="13.2" fill="#2c2c2c" font-weight="bold" textLength="44" lengthAdjust="spacingAndGlyphs">Orange</text>
<rect x="162.9" y="932.3" width="61.8" height="59.8" rx="5" fill="url(#gB)" stroke="#c4c4c4" stroke-opacity=".45" stroke-width="1"/>
<rect x="169.8" y="938.4" width="49" height="14" rx="4" fill="#4a5cb0" stroke="#000" stroke-opacity=".16" stroke-width="1"/>
<text x="169.1" y="971.8" font-size="13.2" fill="#2c2c2c" font-weight="bold" textLength="49.4" lengthAdjust="spacingAndGlyphs">Purplish</text>
<text x="169.1" y="986.6" font-size="13.2" fill="#2c2c2c" font-weight="bold" textLength="26.7" lengthAdjust="spacingAndGlyphs">Blue</text>
<rect x="227.9" y="932.3" width="61.8" height="59.8" rx="5" fill="url(#gB)" stroke="#c4c4c4" stroke-opacity=".45" stroke-width="1"/>
<rect x="234.8" y="938.4" width="49" height="14" rx="4" fill="#cc5564" stroke="#000" stroke-opacity=".16" stroke-width="1"/>
<text x="228.65" y="971.8" font-size="13.2" fill="#2c2c2c" font-weight="bold" textLength="60.3" lengthAdjust="spacingAndGlyphs">Moderate</text>
<text x="228.65" y="986.6" font-size="13.2" fill="#2c2c2c" font-weight="bold" textLength="23.1" lengthAdjust="spacingAndGlyphs">Red</text>
<rect x="292.9" y="932.3" width="61.8" height="59.8" rx="5" fill="url(#gB)" stroke="#c4c4c4" stroke-opacity=".45" stroke-width="1"/>
<rect x="299.8" y="938.4" width="49" height="29.6" rx="4" fill="#5e3a72" stroke="#000" stroke-opacity=".16" stroke-width="1"/>
<text x="304.49" y="986.6" font-size="13.2" fill="#2c2c2c" font-weight="bold" textLength="38.61" lengthAdjust="spacingAndGlyphs">Purple</text>
<rect x="357.9" y="932.3" width="61.8" height="59.8" rx="5" fill="url(#gB)" stroke="#c4c4c4" stroke-opacity=".45" stroke-width="1"/>
<rect x="364.8" y="938.4" width="49" height="14" rx="4" fill="#a2c642" stroke="#000" stroke-opacity=".16" stroke-width="1"/>
<text x="368.8" y="971.8" font-size="13.2" fill="#2c2c2c" font-weight="bold" textLength="40" lengthAdjust="spacingAndGlyphs">Yellow</text>
<text x="368.8" y="986.6" font-size="13.2" fill="#2c2c2c" font-weight="bold" textLength="36.8" lengthAdjust="spacingAndGlyphs">Green</text>
<rect x="422.9" y="932.3" width="61.8" height="59.8" rx="5" fill="url(#gB)" stroke="#c4c4c4" stroke-opacity=".45" stroke-width="1"/>
<rect x="429.8" y="938.4" width="49" height="14" rx="4" fill="#f0a832" stroke="#000" stroke-opacity=".16" stroke-width="1"/>
<text x="431.8" y="971.8" font-size="13.2" fill="#2c2c2c" font-weight="bold" textLength="44" lengthAdjust="spacingAndGlyphs">Orange</text>
<text x="431.8" y="986.6" font-size="13.2" fill="#2c2c2c" font-weight="bold" textLength="40" lengthAdjust="spacingAndGlyphs">Yellow</text>
<rect x="487.9" y="932.3" width="61.8" height="59.8" rx="5" fill="url(#gB)" stroke="#c4c4c4" stroke-opacity=".45" stroke-width="1"/>
<rect x="494.8" y="938.4" width="49" height="29.6" rx="4" fill="#2c3aa0" stroke="#000" stroke-opacity=".16" stroke-width="1"/>
<text x="505.45" y="986.6" font-size="13.2" fill="#2c2c2c" font-weight="bold" textLength="26.7" lengthAdjust="spacingAndGlyphs">Blue</text>
<rect x="552.9" y="932.3" width="61.8" height="59.8" rx="5" fill="url(#gB)" stroke="#c4c4c4" stroke-opacity=".45" stroke-width="1"/>
<rect x="559.8" y="938.4" width="49" height="29.6" rx="4" fill="#42a04a" stroke="#000" stroke-opacity=".16" stroke-width="1"/>
<text x="565.4" y="986.6" font-size="13.2" fill="#2c2c2c" font-weight="bold" textLength="36.8" lengthAdjust="spacingAndGlyphs">Green</text>
<rect x="617.9" y="932.3" width="61.8" height="59.8" rx="5" fill="url(#gB)" stroke="#c4c4c4" stroke-opacity=".45" stroke-width="1"/>
<rect x="624.8" y="938.4" width="49" height="29.6" rx="4" fill="#b83038" stroke="#000" stroke-opacity=".16" stroke-width="1"/>
<text x="637.25" y="986.6" font-size="13.2" fill="#2c2c2c" font-weight="bold" textLength="23.1" lengthAdjust="spacingAndGlyphs">Red</text>
<rect x="682.9" y="932.3" width="61.8" height="59.8" rx="5" fill="url(#gB)" stroke="#c4c4c4" stroke-opacity=".45" stroke-width="1"/>
<rect x="689.8" y="938.4" width="49" height="29.6" rx="4" fill="#f0cc22" stroke="#000" stroke-opacity=".16" stroke-width="1"/>
<text x="693.8" y="986.6" font-size="13.2" fill="#2c2c2c" font-weight="bold" textLength="40" lengthAdjust="spacingAndGlyphs">Yellow</text>
<rect x="747.9" y="932.3" width="61.8" height="59.8" rx="5" fill="url(#gB)" stroke="#c4c4c4" stroke-opacity=".45" stroke-width="1"/>
<rect x="754.8" y="938.4" width="49" height="29.6" rx="4" fill="#c05898" stroke="#000" stroke-opacity=".16" stroke-width="1"/>
<text x="751.8" y="986.6" font-size="13.2" fill="#2c2c2c" font-weight="bold" textLength="54" lengthAdjust="spacingAndGlyphs">Magenta</text>
<rect x="812.9" y="932.3" width="61.8" height="59.8" rx="5" fill="url(#gB)" stroke="#c4c4c4" stroke-opacity=".45" stroke-width="1"/>
<rect x="819.8" y="938.4" width="49" height="29.6" rx="4" fill="#0888a8" stroke="#000" stroke-opacity=".16" stroke-width="1"/>
<text x="828.95" y="986.6" font-size="13.2" fill="#2c2c2c" font-weight="bold" textLength="29.7" lengthAdjust="spacingAndGlyphs">Cyan</text>
<rect x="877.9" y="932.3" width="61.8" height="59.8" rx="5" fill="url(#gB)" stroke="#c4c4c4" stroke-opacity=".45" stroke-width="1"/>
<rect x="884.8" y="938.4" width="49" height="29.6" rx="4" fill="#ff0000" stroke="#000" stroke-opacity=".16" stroke-width="1"/>
<text x="879.05" y="986.6" font-size="13.2" fill="#2c2c2c" font-weight="bold" textLength="59.5" lengthAdjust="spacingAndGlyphs">100% Red</text>
<rect x="942.9" y="932.3" width="61.8" height="59.8" rx="5" fill="url(#gB)" stroke="#c4c4c4" stroke-opacity=".45" stroke-width="1"/>
<rect x="949.8" y="938.4" width="49" height="14" rx="4" fill="#00ff00" stroke="#000" stroke-opacity=".16" stroke-width="1"/>
<text x="955.4" y="971.8" font-size="13.2" fill="#2c2c2c" font-weight="bold" textLength="33" lengthAdjust="spacingAndGlyphs">100%</text>
<text x="955.4" y="986.6" font-size="13.2" fill="#2c2c2c" font-weight="bold" textLength="36.8" lengthAdjust="spacingAndGlyphs">Green</text>
<rect x="1007.9" y="932.3" width="61.8" height="59.8" rx="5" fill="url(#gB)" stroke="#c4c4c4" stroke-opacity=".45" stroke-width="1"/>
<rect x="1014.8" y="938.4" width="49" height="14" rx="4" fill="#0000ff" stroke="#000" stroke-opacity=".16" stroke-width="1"/>
<text x="1022.3" y="971.8" font-size="13.2" fill="#2c2c2c" font-weight="bold" textLength="33" lengthAdjust="spacingAndGlyphs">100%</text>
<text x="1022.3" y="986.6" font-size="13.2" fill="#2c2c2c" font-weight="bold" textLength="26.7" lengthAdjust="spacingAndGlyphs">Blue</text>
<rect x="1072.9" y="932.3" width="61.8" height="59.8" rx="5" fill="url(#gB)" stroke="#c4c4c4" stroke-opacity=".45" stroke-width="1"/>
<rect x="1079.8" y="938.4" width="49" height="14" rx="4" fill="#00ffff" stroke="#000" stroke-opacity=".16" stroke-width="1"/>
<text x="1087.3" y="971.8" font-size="13.2" fill="#2c2c2c" font-weight="bold" textLength="33" lengthAdjust="spacingAndGlyphs">100%</text>
<text x="1087.3" y="986.6" font-size="13.2" fill="#2c2c2c" font-weight="bold" textLength="29.7" lengthAdjust="spacingAndGlyphs">Cyan</text>
<rect x="1137.9" y="932.3" width="61.8" height="59.8" rx="5" fill="url(#gB)" stroke="#c4c4c4" stroke-opacity=".45" stroke-width="1"/>
<rect x="1144.8" y="938.4" width="49" height="14" rx="4" fill="#ff00ff" stroke="#000" stroke-opacity=".16" stroke-width="1"/>
<text x="1141.8" y="971.8" font-size="13.2" fill="#2c2c2c" font-weight="bold" textLength="33" lengthAdjust="spacingAndGlyphs">100%</text>
<text x="1141.8" y="986.6" font-size="13.2" fill="#2c2c2c" font-weight="bold" textLength="54" lengthAdjust="spacingAndGlyphs">Magenta</text>
<rect x="1202.9" y="932.3" width="61.8" height="59.8" rx="5" fill="url(#gBs)" stroke="#c4c4c4" stroke-opacity=".45" stroke-width="1"/>
<rect x="1209.8" y="938.4" width="49" height="14" rx="4" fill="#ffff00" stroke="#000" stroke-opacity=".16" stroke-width="1"/>
<text x="1213.8" y="971.8" font-size="13.2" fill="#fff" font-weight="bold" textLength="33" lengthAdjust="spacingAndGlyphs">100%</text>
<text x="1213.8" y="986.6" font-size="13.2" fill="#fff" font-weight="bold" textLength="40" lengthAdjust="spacingAndGlyphs">Yellow</text>
</g>
<rect x="1.2" y="992.3" width="1264.3" height="15.7" fill="#5a5a5a"/>
<rect x="2" y="993.5" width="12" height="13.5" rx="2.5" fill="#8e8e8e"/>
<path d="M11.2 996v9l-6.4-4.5z" fill="#333"/>
<rect x="1252" y="993.5" width="12.5" height="13.5" rx="2.5" fill="#8e8e8e"/>
<path d="M1255.5 996v9l6.4-4.5z" fill="#333"/>
<rect x="450.5" y="993.6" width="795" height="13.4" rx="6.7" fill="#3a3a3a"/>
<path d="M1266.5 1008V936a4.5 4.5 0 0 1 4.5-4.5h50.5a4.5 4.5 0 0 1 4.5 4.5V1008Z" fill="url(#gTr)"/>
<path d="M1266.5 954.4H1326" stroke="#555" stroke-width="1"/>
<path d="M1266.5 955.4H1326" stroke="#aaa" stroke-width="0.8"/>
<circle cx="1296.3" cy="942.6" r="9.5" fill="url(#gTc)"/>
<path d="M1291 945.2h10.6l-5.3-6z" fill="#333"/>
<rect x="1277.3" y="963.2" width="37.6" height="36.4" rx="5" fill="url(#gSt)" stroke="#2a2a2a" stroke-width="2.8"/>
<rect x="1279.9" y="965.8" width="32.4" height="31.2" rx="3" fill="none" stroke="#d0d0d0" stroke-width="1.2"/>
<rect x="1287.7" y="972.7" width="17.5" height="17.2" fill="#000"/>
<rect x="1327.3" y="931.3" width="342" height="77" fill="#3c3c3c"/>
<rect x="1328.1" y="931.5" width="56.7" height="37.3" fill="url(#gTr)"/>
<circle cx="1356.35" cy="949.6" r="12.3" fill="url(#gTc)"/>
<rect x="1385.8" y="931.5" width="55.3" height="37.3" fill="url(#gTr)"/>
<circle cx="1413.35" cy="949.6" r="12.3" fill="url(#gTc)"/>
<rect x="1442.1" y="931.5" width="55" height="37.3" fill="url(#gTr)"/>
<circle cx="1469.5" cy="949.6" r="12.3" fill="url(#gTc)"/>
<rect x="1498.1" y="931.5" width="56" height="37.3" fill="url(#gTr)"/>
<circle cx="1526" cy="949.6" r="12.3" fill="url(#gTc)"/>
<rect x="1555.1" y="931.5" width="55.5" height="37.3" fill="url(#gTs)"/>
<circle cx="1582.75" cy="949.6" r="12" fill="#343434"/>
<rect x="1611.6" y="931.5" width="57.2" height="37.3" fill="url(#gTr)"/>
<circle cx="1640.1" cy="949.6" r="12.3" fill="url(#gTc)"/>
<rect x="1350.95" y="944.2" width="10.8" height="10.8" fill="#3a3a3a"/>
<path d="M1409.75 943.3v12.6l10-6.3z" fill="#3a3a3a"/>
<path d="M1464.7 943.6h-2.6v12h2.6M1474.3 943.6h2.6v12h-2.6" fill="none" stroke="#3a3a3a" stroke-width="2.6"/>
<path d="M1467 949.6h5" stroke="#3a3a3a" stroke-width="1.6" stroke-dasharray="1.4 0.9"/>
<text x="1516.8" y="956.2" font-size="23" fill="#3a3a3a" font-weight="bold" textLength="18.4" lengthAdjust="spacingAndGlyphs">∞</text>
<path d="M1576.55 948a6.4 6.4 0 0 1 11.4-3.2M1588.95 951.2a6.4 6.4 0 0 1-11.4 3.2" fill="none" stroke="#232323" stroke-width="2.8"/>
<path d="M1589.35 941.5v5.4h-5.4zM1576.15 957.7v-5.4h5.4z" fill="#222"/>
<rect x="1328.1" y="969.8" width="168.7" height="38.2" fill="url(#gTr)"/>
<rect x="1498.1" y="969.8" width="171" height="38.2" fill="url(#gTr)"/>
<circle cx="1366" cy="989" r="12.3" fill="url(#gTc)"/>
<circle cx="1632.9" cy="989" r="12.3" fill="url(#gTc)"/>
<path d="M1365.6 983l-5.2 6 5.2 6M1371.6 983l-5.2 6 5.2 6" fill="none" stroke="#3a3a3a" stroke-width="2"/>
<path d="M1627.6 983l5.2 6-5.2 6M1633.6 983l5.2 6-5.2 6" fill="none" stroke="#3a3a3a" stroke-width="2"/>
<text x="1399.2" y="998.6" font-size="27.6" fill="#3a3a3a" font-weight="bold" textLength="63.5" lengthAdjust="spacingAndGlyphs">Back</text>
<text x="1533" y="998.6" font-size="27.6" fill="#3a3a3a" font-weight="bold" textLength="65.5" lengthAdjust="spacingAndGlyphs">Next</text>
<rect x="1665.3" y="931.3" width="3.7" height="77" fill="#262626"/>
</svg>
</body></html>
